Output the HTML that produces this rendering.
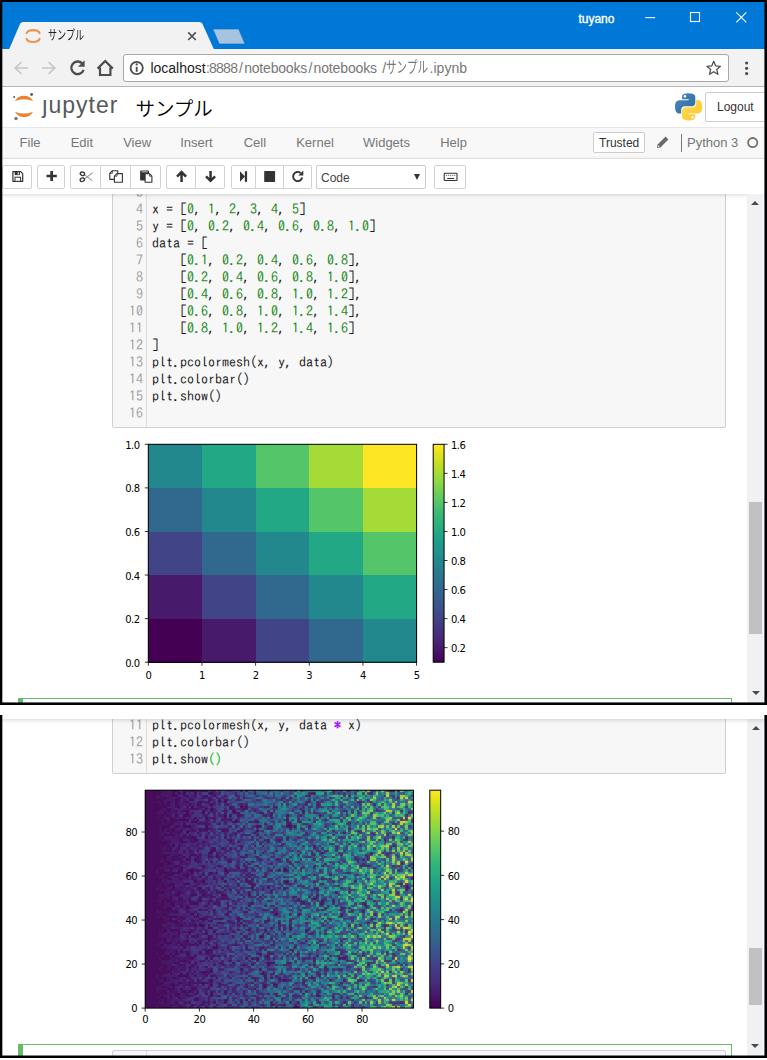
<!DOCTYPE html>
<html lang="ja">
<head>
<meta charset="utf-8">
<title>サンプル</title>
<style>
html,body{margin:0;padding:0;background:#fff;}
body{width:767px;height:1060px;position:relative;overflow:hidden;font-family:"Liberation Sans","Noto Sans CJK JP",sans-serif;color:#000;}
.abs,.plot{position:absolute;}
svg{display:block;overflow:visible;}
/* ---------- window frames ---------- */
#w1{position:absolute;left:0;top:0;width:767px;height:705px;background:#000;}
#w1 .in{position:absolute;left:2px;top:2px;width:763px;height:701px;background:#fff;overflow:hidden;}
#w2{position:absolute;left:0;top:715px;width:767px;height:343px;background:#000;}
#w2 .in{position:absolute;left:2px;top:0;width:763px;height:341px;background:#fff;overflow:hidden;}
/* coordinates inside .in are page coords shifted by (-2,-2) for w1 and (-2,-715) for w2; use wrappers */
.pg1{position:absolute;left:-2px;top:-2px;width:767px;height:705px;}
.pg2{position:absolute;left:-2px;top:-715px;width:767px;height:1060px;}
/* ---------- chrome ---------- */
#titlebar{left:0;top:0;width:767px;height:49px;background:#0078d7;}
#chtool{left:0;top:49px;width:767px;height:37px;background:#f2f2f2;border-bottom:1px solid #b6b6b6;box-sizing:content-box;}
#omni{left:123px;top:54px;width:604px;height:26px;background:#fff;border:1px solid #a9a9a9;border-radius:3px;box-sizing:content-box;}
.url{position:absolute;top:59px;font-size:14px;line-height:18px;color:#777;white-space:nowrap;}
.kx{display:inline-block;transform-origin:0 50%;}
#tabtitle{left:47.5px;top:26px;font-size:13px;line-height:18px;color:#222;white-space:nowrap;transform-origin:0 50%;transform:scaleX(.70);}
#user{left:578.4px;top:11.4px;font-size:12px;line-height:16px;color:#fff;white-space:nowrap;-webkit-text-stroke:.35px #fff;}
/* ---------- jupyter header ---------- */
#jhead{left:0;top:87px;width:767px;height:40px;background:#fff;}
#jname{left:42.3px;top:90px;font-size:23px;line-height:30px;color:#585858;letter-spacing:1px;white-space:nowrap;}
#nbname{left:135.4px;top:93.5px;font-size:19.5px;line-height:30px;color:#000;font-weight:350;white-space:nowrap;}
#logout{left:705px;top:92px;width:70px;height:28px;border:1px solid #ccc;border-radius:2px;background:#fff;box-sizing:content-box;}
#logout span{position:absolute;left:11px;top:6px;font-size:12px;line-height:16px;color:#333;}
#menubar{left:0;top:127px;width:767px;height:30px;background:#f8f8f8;border-top:1px solid #e7e7e7;border-bottom:1px solid #e7e7e7;box-sizing:content-box;}
.mi{position:absolute;top:135px;font-size:13px;line-height:16px;color:#777;white-space:nowrap;}
#trusted{left:593px;top:132px;width:50px;height:19px;border:1px solid #ccc;border-radius:2px;background:#fff;box-sizing:content-box;}
#trusted span{position:absolute;left:5px;top:3px;font-size:12px;line-height:15px;color:#333;}
#kdiv{left:681px;top:134px;width:1px;height:18px;background:#777;}
#kname{left:687px;top:135px;font-size:13px;line-height:16px;color:#777;white-space:nowrap;}
#kcirc{left:747.3px;top:137px;width:7.2px;height:7.2px;border:1.9px solid #6e6e6e;border-radius:50%;box-sizing:content-box;}
#toolbar{left:0;top:159px;width:767px;height:35px;background:#fff;box-shadow:0 1px 4px rgba(87,87,87,.25);}
.btn{position:absolute;top:165px;height:22px;border:1px solid #d2d2d2;background:#fff;box-sizing:content-box;}
.btn.l{border-radius:2px 0 0 2px;}
.btn.r{border-radius:0 2px 2px 0;border-left:none;}
.btn.m{border-left:none;}
.btn.s{border-radius:2px;}
.btn svg{position:absolute;left:50%;top:50%;}
#sel{left:316px;top:165px;width:108px;height:22px;border:1px solid #ccc;border-radius:2px;background:#fff;box-sizing:content-box;}
#sel span{position:absolute;left:4px;top:5px;font-size:12px;line-height:15px;color:#444;}
#sel i{position:absolute;right:5.5px;top:7.5px;width:0;height:0;border-left:3.5px solid transparent;border-right:3.5px solid transparent;border-top:6px solid #333;}
/* ---------- notebook ---------- */
.cell{position:absolute;left:112px;width:612px;background:#f7f7f7;border:1px solid #cfcfcf;border-radius:2px;box-sizing:content-box;overflow:hidden;}
.cell .gut{position:absolute;left:0;top:0;bottom:0;width:33px;border-right:1px solid #ddd;background:#f7f7f7;}
.code{position:absolute;left:0;font-family:"IPAGothic","Liberation Mono",monospace;font-size:14px;line-height:17px;color:#1c1c1c;white-space:pre;}
.ln{height:17px;position:relative;}
.no{position:absolute;left:0;width:30px;text-align:right;color:#a2a2a2;}
.tx{position:absolute;left:39px;}
.tx i{font-style:normal;color:#1d8a1d;}
.tx b{color:#a2f;font-weight:bold;}
.tx u{text-decoration:none;color:#0b0;}
.mpl text{font-family:"DejaVu Sans",sans-serif;font-size:10px;fill:#000;letter-spacing:-.55px;}
.sel{position:absolute;left:18px;width:713px;border:1px solid #66bb6a;border-left:none;box-sizing:content-box;background:#fff;}
.sel:before{content:"";position:absolute;left:0;top:-1px;bottom:-1px;width:5px;background:#66bb6a;}
.edge{position:absolute;background:rgba(0,8,25,.6);}
/* scrollbar */
.sb{position:absolute;left:747px;width:16px;background:#f1f1f1;border-right:1px solid #f4fbff;}
.thumb{position:absolute;left:749px;width:13px;background:#c1c1c1;}
.arr{position:absolute;width:0;height:0;border-left:4.3px solid transparent;border-right:4.3px solid transparent;}
.arr.up{border-bottom:4.6px solid #4a4a4a;}
.arr.dn{border-top:4.6px solid #4a4a4a;}
</style>
</head>
<body>
<!-- ======================= WINDOW 1 ======================= -->
<div id="w1"><div class="in"><div class="pg1">
  <div id="titlebar" class="abs"></div>
  <svg class="abs" style="left:0;top:0" width="767" height="50" viewBox="0 0 767 50">
    <path d="M9 49.5 L20.2 23.6 Q21 22 23 22 L199.5 22 Q201.5 22 202.3 23.6 L214 49.5 Z" fill="#f2f2f2"/>
    <path d="M212.8 29 L238.7 29 L245 44 L219.3 44 Z" fill="#a6c3e0" stroke="#0a6cc4" stroke-width=".6"/>
    <path d="M188.2 32.4 L195.8 40 M195.8 32.4 L188.2 40" stroke="#555" stroke-width="1.75" fill="none"/>
    <!-- tab favicon (jupyter) -->
    <g fill="none" stroke="#ea9550" stroke-width="2.1" stroke-linecap="round">
      <path d="M26.6 33.2 A6.6 3.7 0 0 1 39.6 33.2"/>
      <path d="M26.6 38.9 A6.6 3.7 0 0 0 39.6 38.9"/>
    </g>
    <!-- window controls -->
    <g stroke="#fff" stroke-width="1.1" fill="none">
      <path d="M645.3 17.6 H655.2"/>
      <rect x="690.5" y="12.5" width="9" height="9"/>
      <path d="M736.3 12.3 L746.3 22.3 M746.3 12.3 L736.3 22.3"/>
    </g>
  </svg>
  <div id="tabtitle" class="abs">サンプル</div>
  <div id="user" class="abs">tuyano</div>
  <div id="chtool" class="abs"></div>
  <div id="omni" class="abs"></div>
  <svg class="abs" style="left:0;top:49px" width="767" height="38" viewBox="0 49 767 38">
    <!-- back / forward (disabled) -->
    <g stroke="#c6c6c6" stroke-width="1.7" fill="none">
      <path d="M28 68 H15.5 M21.5 62 L15.2 68 L21.5 74"/>
      <path d="M42 68 H54.5 M48.5 62 L54.8 68 L48.5 74"/>
    </g>
    <!-- reload -->
    <path d="M82.3 63.6 A6.3 6.3 0 1 0 83.6 69.8" stroke="#4d4d4d" stroke-width="2.3" fill="none"/>
    <path d="M84.6 60.2 V66.8 H78 Z" fill="#4d4d4d"/>
    <!-- home -->
    <path d="M97.6 68.6 L105.2 61 L112.8 68.6 M100 67.4 V75 H110.4 V67.4" stroke="#4d4d4d" stroke-width="2.2" fill="none" stroke-linejoin="miter"/>
    <!-- info -->
    <circle cx="136.7" cy="68" r="6.1" stroke="#4d4d4d" stroke-width="1.8" fill="none"/>
    <path d="M136.7 66.8 V71.8" stroke="#4d4d4d" stroke-width="1.9"/>
    <circle cx="136.7" cy="64.4" r="1.15" fill="#4d4d4d"/>
    <!-- star -->
    <path transform="translate(713.7 68) scale(.9) translate(-713.5 -68)" d="M713.5 60.6 L715.6 65.6 L721 66.1 L716.9 69.7 L718.2 75 L713.5 72.1 L708.8 75 L710.1 69.7 L706 66.1 L711.4 65.6 Z" stroke="#4d4d4d" stroke-width="1.4" fill="none" stroke-linejoin="round"/>
    <!-- menu dots -->
    <g fill="#4d4d4d"><circle cx="746.6" cy="63" r="1.6"/><circle cx="746.6" cy="68.3" r="1.6"/><circle cx="746.6" cy="73.6" r="1.6"/></g>
  </svg>
  <div class="url" style="left:150.4px;color:#222">localhost</div>
  <div class="url" style="left:205.9px;letter-spacing:-.75px">:8888</div>
  <div class="url" style="left:238.9px">/</div>
  <div class="url" style="left:244.2px;letter-spacing:-.2px">notebooks</div>
  <div class="url" style="left:308.6px">/</div>
  <div class="url" style="left:313.6px;letter-spacing:-.15px">notebooks</div>
  <div class="url" style="left:382.2px">/</div>
  <div class="url kx" style="left:386.2px;font-size:15.5px;transform:scaleX(.685)">サンプル</div>
  <div class="url" style="left:429.6px">.ipynb</div>

  <!-- jupyter header -->
  <div id="jhead" class="abs"></div>
  <svg class="abs" style="left:10px;top:90px" width="30" height="34" viewBox="10 90 30 34">
    <g fill="#e8832f">
      <path d="M14.9 101 A10.5 10.5 0 0 1 33.1 101 A23.9 23.9 0 0 0 14.9 101 Z"/>
      <path d="M14.9 111.7 A10.5 10.5 0 0 0 33.1 111.7 A23.9 23.9 0 0 1 14.9 111.7 Z"/>
    </g>
    <circle cx="31.6" cy="94.5" r="1.45" fill="#5c5c5c"/>
    <circle cx="14.2" cy="96.9" r="1" fill="#5c5c5c"/>
    <circle cx="16" cy="118.5" r="1.75" fill="#7c7c7c"/>
  </svg>
  <div id="jname" class="abs">jupyter</div>
  <div class="abs" style="left:41px;top:92px;width:8px;height:6.4px;background:#fff"></div>
  <div id="nbname" class="abs">サンプル</div>
    <svg class="abs" style="left:675px;top:93px" width="27.3" height="27.6" viewBox="0 0 100 100">
    <defs>
      <linearGradient id="pyb" x1="0" y1="0" x2="1" y2="1"><stop offset="0" stop-color="#4a8cc4"/><stop offset="1" stop-color="#2f6796"/></linearGradient>
      <linearGradient id="pyy" x1="0" y1="0" x2="1" y2="1"><stop offset="0" stop-color="#ffe052"/><stop offset="1" stop-color="#ffc331"/></linearGradient>
    </defs>
    <path fill="url(#pyb)" d="M49.6 0C24.3 0 25.9 11 25.9 11L25.9 22.4H50V25.8H16.3C16.3 25.8 0 24 0 49.7C0 75.4 14.2 74.5 14.2 74.5H22.7V62.6C22.7 62.6 22.2 48.4 36.7 48.4H60.7C60.7 48.4 74.3 48.6 74.3 35.3V13.3C74.3 13.3 76.4 0 49.6 0Z"/>
    <circle cx="36.3" cy="11.8" r="4.6" fill="#fff"/>
    <path fill="url(#pyy)" d="M50.4 100C75.7 100 74.1 89 74.1 89L74.1 77.6H50V74.2H83.7C83.7 74.2 100 76 100 50.3C100 24.6 85.8 25.5 85.8 25.5H77.3V37.4C77.3 37.4 77.8 51.6 63.3 51.6H39.3C39.3 51.6 25.7 51.4 25.7 64.7V86.7C25.7 86.7 23.6 100 50.4 100Z"/>
    <circle cx="63.7" cy="88.2" r="4.6" fill="#fff"/>
  </svg>

  <div id="logout" class="abs"><span>Logout</span></div>

  <div id="menubar" class="abs"></div>
  <div class="mi" style="left:19.6px">File</div>
  <div class="mi" style="left:70.7px">Edit</div>
  <div class="mi" style="left:123.2px">View</div>
  <div class="mi" style="left:180.2px">Insert</div>
  <div class="mi" style="left:243.7px">Cell</div>
  <div class="mi" style="left:296.2px">Kernel</div>
  <div class="mi" style="left:363px">Widgets</div>
  <div class="mi" style="left:440.2px">Help</div>
  <div id="trusted" class="abs"><span>Trusted</span></div>
    <svg class="abs" style="left:655px;top:135px" width="16" height="16" viewBox="655 135 16 16">
    <path d="M657 147.9 L657.6 144.6 L665.6 136.6 L668.4 139.4 L660.4 147.4 Z" fill="#6a6a6a"/>
    <path d="M657.9 146.9 L658.3 145.3 L659.6 146.6 Z" fill="#fff"/>
  </svg>

  <div id="kdiv" class="abs"></div>
  <div id="kname" class="abs">Python 3</div>
  <svg class="abs" style="left:745px;top:135px" width="16" height="16" viewBox="745 135 16 16"><circle cx="752.7" cy="142.6" r="4.6" fill="none" stroke="#707070" stroke-width="1.8"/></svg>

  <!-- notebook area (drawn before toolbar so toolbar shadow overlays) -->
  <div class="cell" style="top:180px;height:246px"><div class="gut"></div>
    <div class="code" style="top:3px;width:612px"><div class="ln"><span class="no">3</span><span class="tx">&nbsp;</span></div><div class="ln"><span class="no">4</span><span class="tx">x = [<i>0</i>, <i>1</i>, <i>2</i>, <i>3</i>, <i>4</i>, <i>5</i>]</span></div><div class="ln"><span class="no">5</span><span class="tx">y = [<i>0</i>, <i>0.2</i>, <i>0.4</i>, <i>0.6</i>, <i>0.8</i>, <i>1.0</i>]</span></div><div class="ln"><span class="no">6</span><span class="tx">data = [</span></div><div class="ln"><span class="no">7</span><span class="tx">    [<i>0.1</i>, <i>0.2</i>, <i>0.4</i>, <i>0.6</i>, <i>0.8</i>],</span></div><div class="ln"><span class="no">8</span><span class="tx">    [<i>0.2</i>, <i>0.4</i>, <i>0.6</i>, <i>0.8</i>, <i>1.0</i>],</span></div><div class="ln"><span class="no">9</span><span class="tx">    [<i>0.4</i>, <i>0.6</i>, <i>0.8</i>, <i>1.0</i>, <i>1.2</i>],</span></div><div class="ln"><span class="no">10</span><span class="tx">    [<i>0.6</i>, <i>0.8</i>, <i>1.0</i>, <i>1.2</i>, <i>1.4</i>],</span></div><div class="ln"><span class="no">11</span><span class="tx">    [<i>0.8</i>, <i>1.0</i>, <i>1.2</i>, <i>1.4</i>, <i>1.6</i>]</span></div><div class="ln"><span class="no">12</span><span class="tx">]</span></div><div class="ln"><span class="no">13</span><span class="tx">plt.pcolormesh(x, y, data)</span></div><div class="ln"><span class="no">14</span><span class="tx">plt.colorbar()</span></div><div class="ln"><span class="no">15</span><span class="tx">plt.show()</span></div><div class="ln"><span class="no">16</span><span class="tx">&nbsp;</span></div></div>
  </div>
  <svg class="plot" style="left:110px;top:434px" width="380" height="256" viewBox="0 0 380 256"><defs><linearGradient id="vg1" x1="0" y1="1" x2="0" y2="0"><stop offset="0" stop-color="#440154"/><stop offset="0.04" stop-color="#471063"/><stop offset="0.08" stop-color="#481f70"/><stop offset="0.12" stop-color="#472d7b"/><stop offset="0.17" stop-color="#443983"/><stop offset="0.21" stop-color="#404688"/><stop offset="0.25" stop-color="#3b528b"/><stop offset="0.29" stop-color="#365d8d"/><stop offset="0.33" stop-color="#31688e"/><stop offset="0.38" stop-color="#2c728e"/><stop offset="0.42" stop-color="#287c8e"/><stop offset="0.46" stop-color="#24868e"/><stop offset="0.5" stop-color="#21918c"/><stop offset="0.54" stop-color="#1f9a8a"/><stop offset="0.58" stop-color="#20a486"/><stop offset="0.62" stop-color="#28ae80"/><stop offset="0.67" stop-color="#35b779"/><stop offset="0.71" stop-color="#48c16e"/><stop offset="0.75" stop-color="#5ec962"/><stop offset="0.79" stop-color="#75d054"/><stop offset="0.83" stop-color="#90d743"/><stop offset="0.88" stop-color="#addc30"/><stop offset="0.92" stop-color="#c8e020"/><stop offset="0.96" stop-color="#e5e419"/><stop offset="1" stop-color="#fde725"/></linearGradient></defs><g shape-rendering="crispEdges"><rect x="38.3" y="184.62" width="53.96" height="43.88" fill="#440154"/><rect x="91.96" y="184.62" width="53.96" height="43.88" fill="#481a6c"/><rect x="145.62" y="184.62" width="53.96" height="43.88" fill="#414487"/><rect x="199.28" y="184.62" width="53.96" height="43.88" fill="#31688e"/><rect x="252.94" y="184.62" width="53.96" height="43.88" fill="#23888e"/><rect x="38.3" y="141.04" width="53.96" height="43.88" fill="#481a6c"/><rect x="91.96" y="141.04" width="53.96" height="43.88" fill="#414487"/><rect x="145.62" y="141.04" width="53.96" height="43.88" fill="#31688e"/><rect x="199.28" y="141.04" width="53.96" height="43.88" fill="#23888e"/><rect x="252.94" y="141.04" width="53.96" height="43.88" fill="#22a884"/><rect x="38.3" y="97.46" width="53.96" height="43.88" fill="#414487"/><rect x="91.96" y="97.46" width="53.96" height="43.88" fill="#31688e"/><rect x="145.62" y="97.46" width="53.96" height="43.88" fill="#23888e"/><rect x="199.28" y="97.46" width="53.96" height="43.88" fill="#22a884"/><rect x="252.94" y="97.46" width="53.96" height="43.88" fill="#54c568"/><rect x="38.3" y="53.88" width="53.96" height="43.88" fill="#31688e"/><rect x="91.96" y="53.88" width="53.96" height="43.88" fill="#23888e"/><rect x="145.62" y="53.88" width="53.96" height="43.88" fill="#22a884"/><rect x="199.28" y="53.88" width="53.96" height="43.88" fill="#54c568"/><rect x="252.94" y="53.88" width="53.96" height="43.88" fill="#a5db36"/><rect x="38.3" y="10.3" width="53.96" height="43.88" fill="#23888e"/><rect x="91.96" y="10.3" width="53.96" height="43.88" fill="#22a884"/><rect x="145.62" y="10.3" width="53.96" height="43.88" fill="#54c568"/><rect x="199.28" y="10.3" width="53.96" height="43.88" fill="#a5db36"/><rect x="252.94" y="10.3" width="53.96" height="43.88" fill="#fde725"/></g><rect x="38.3" y="10.3" width="268.3" height="217.9" fill="none" stroke="#000" stroke-width="1"/><rect x="323.2" y="10.3" width="10.87" height="217.9" fill="url(#vg1)" stroke="#000" stroke-width="1"/><path d="M38.3 228.2h-3.5M38.3 228.2v3.5M38.3 184.62h-3.5M91.96 228.2v3.5M38.3 141.04h-3.5M145.62 228.2v3.5M38.3 97.46h-3.5M199.28 228.2v3.5M38.3 53.88h-3.5M252.94 228.2v3.5M38.3 10.3h-3.5M306.6 228.2v3.5M334.07 213.67h3.5M334.07 184.62h3.5M334.07 155.57h3.5M334.07 126.51h3.5M334.07 97.46h3.5M334.07 68.41h3.5M334.07 39.35h3.5M334.07 10.3h3.5" stroke="#000" stroke-width=".8" fill="none"/><g class="mpl"><text x="29.5" y="232.7" text-anchor="end">0.0</text><text x="38.3" y="244.5" text-anchor="middle">0</text><text x="29.5" y="189.12" text-anchor="end">0.2</text><text x="91.96" y="244.5" text-anchor="middle">1</text><text x="29.5" y="145.54" text-anchor="end">0.4</text><text x="145.62" y="244.5" text-anchor="middle">2</text><text x="29.5" y="101.96" text-anchor="end">0.6</text><text x="199.28" y="244.5" text-anchor="middle">3</text><text x="29.5" y="58.38" text-anchor="end">0.8</text><text x="252.94" y="244.5" text-anchor="middle">4</text><text x="29.5" y="14.8" text-anchor="end">1.0</text><text x="306.6" y="244.5" text-anchor="middle">5</text><text x="341.07" y="218.17">0.2</text><text x="341.07" y="189.12">0.4</text><text x="341.07" y="160.07">0.6</text><text x="341.07" y="131.01">0.8</text><text x="341.07" y="101.96">1.0</text><text x="341.07" y="72.91">1.2</text><text x="341.07" y="43.85">1.4</text><text x="341.07" y="14.8">1.6</text></g></svg>
  <div class="sel" style="top:698px;height:20px"></div>

  <div id="toolbar" class="abs"></div>
    <div class="btn s" style="left:2px;width:28px"></div>
  <div class="btn s" style="left:37px;width:26px"></div>
  <div class="btn l" style="left:70px;width:29px"></div>
  <div class="btn m" style="left:101px;width:29px"></div>
  <div class="btn r" style="left:131px;width:29px"></div>
  <div class="btn l" style="left:166px;width:28px"></div>
  <div class="btn r" style="left:196px;width:28px"></div>
  <div class="btn l" style="left:231px;width:23px"></div>
  <div class="btn m" style="left:256px;width:27px"></div>
  <div class="btn r" style="left:284px;width:27px"></div>
  <div class="btn s" style="left:434px;width:30px"></div>
  <svg class="abs" style="left:0;top:160px" width="480" height="35" viewBox="0 160 480 35">
    <!-- save -->
    <path d="M12.9 171.6 H20.7 L22.7 173.6 V181.3 H12.9 Z" fill="#fff" stroke="#333" stroke-width="1.2" stroke-linejoin="round"/>
    <rect x="14.7" y="171.6" width="5.2" height="3.5" fill="#333"/>
    <rect x="17.6" y="172.3" width="1.4" height="2.1" fill="#ddd"/>
    <rect x="15" y="177.2" width="5.6" height="4.1" fill="#fff" stroke="#333" stroke-width="1"/>
    <!-- plus -->
    <path d="M46.5 176 H56.8 M51.65 170.9 V181.1" stroke="#333" stroke-width="2.7" fill="none"/>
    <!-- scissors -->
    <g fill="none">
      <path d="M84.4 174.6 L92.2 180.6 M84.4 179 L92.6 172.6" stroke="#9a9a9a" stroke-width="1.1"/>
      <ellipse cx="82.4" cy="173.8" rx="2.2" ry="1.7" transform="rotate(20 82.4 173.8)" stroke="#333" stroke-width="1.3"/>
      <ellipse cx="82.3" cy="179.7" rx="2.2" ry="1.7" transform="rotate(-25 82.3 179.7)" stroke="#333" stroke-width="1.3"/>
    </g>
    <!-- copy -->
    <g fill="#fff" stroke="#333" stroke-width="1.1" stroke-linejoin="round">
      <path d="M112.4 170.7 H117.8 V179.4 H109.8 V173.3 Z"/>
      <path d="M112.4 170.7 V173.3 H109.8" fill="none" stroke-width=".8"/>
      <path d="M117 173.6 H122.4 V182.2 H114.4 V176.2 Z"/>
      <path d="M117 173.6 V176.2 H114.4" fill="none" stroke-width=".8"/>
    </g>
    <!-- paste -->
    <rect x="140.1" y="170.4" width="8.9" height="10.2" rx=".8" fill="#333"/>
    <rect x="141.6" y="171.3" width="6" height="1" fill="#c8c8c8"/>
    <path d="M145.1 173.7 H149.4 L151.9 176.2 V182.2 H145.1 Z" fill="#fff" stroke="#333" stroke-width="1.1" stroke-linejoin="round"/>
    <path d="M149.4 173.7 V176.2 H151.9" fill="none" stroke="#333" stroke-width=".8"/>
    <!-- arrow up -->
    <path d="M181.55 181.9 V173 M177 176.6 L181.55 172.1 L186.1 176.6" stroke="#333" stroke-width="2.5" fill="none" stroke-linejoin="miter" stroke-linecap="butt"/>
    <!-- arrow down -->
    <path d="M210.55 171 V180 M206 176.3 L210.55 180.8 L215.1 176.3" stroke="#333" stroke-width="2.5" fill="none"/>
    <!-- step forward -->
    <path d="M240 171.2 L245 176.5 L240 181.8 Z" fill="#333"/>
    <rect x="244.8" y="171.2" width="2.3" height="10.6" fill="#333"/>
    <!-- stop -->
    <rect x="264.2" y="171.1" width="10.9" height="10.8" rx=".6" fill="#333"/>
    <!-- repeat -->
    <path d="M300.6 172.9 A4.6 4.6 0 1 0 302.2 177.6" stroke="#333" stroke-width="1.9" fill="none"/>
    <path d="M303.3 170.6 V175.6 H298.3 Z" fill="#333"/>
    <!-- keyboard -->
    <rect x="444.2" y="173.3" width="12.8" height="7.2" rx=".8" fill="#fff" stroke="#333" stroke-width="1.1"/>
    <path d="M445.8 175.4 H455.4" stroke="#888" stroke-width="1.2" stroke-dasharray="1.3 .8"/>
    <path d="M447.2 178.5 H454" stroke="#333" stroke-width="1.1"/>
  </svg>

  <div id="sel" class="abs"><span>Code</span><i></i></div>

  <!-- scrollbar -->
  <div class="sb" style="top:194px;height:509px"></div>
  <div class="thumb" style="top:502px;height:132px"></div>
  <div class="arr up" style="left:751.3px;top:200.5px"></div>
  <div class="arr dn" style="left:751.5px;top:690.5px"></div>
  <div class="edge" style="left:764px;top:0;width:1px;height:705px"></div>
  <div class="edge" style="left:0;top:702px;width:767px;height:1px"></div>
  <div class="edge" style="left:2px;top:0;width:1px;height:705px;background:rgba(0,8,25,.33)"></div>
</div></div></div>

<!-- ======================= WINDOW 2 ======================= -->
<div id="w2"><div class="in"><div class="pg2">
  <div class="cell" style="top:700px;height:72px"><div class="gut"></div>
    <div class="code" style="top:-1px;width:612px"><div class="ln"><span class="no">10</span><span class="tx">&nbsp;</span></div><div class="ln"><span class="no">11</span><span class="tx">plt.pcolormesh(x, y, data <b>*</b> x)</span></div><div class="ln"><span class="no">12</span><span class="tx">plt.colorbar()</span></div><div class="ln"><span class="no">13</span><span class="tx">plt.show<u>()</u></span></div></div>
  </div>
  <svg class="plot" style="left:110px;top:780px" width="380" height="256" viewBox="0 0 380 256"><defs><linearGradient id="vg2" x1="0" y1="1" x2="0" y2="0"><stop offset="0" stop-color="#440154"/><stop offset="0.04" stop-color="#471063"/><stop offset="0.08" stop-color="#481f70"/><stop offset="0.12" stop-color="#472d7b"/><stop offset="0.17" stop-color="#443983"/><stop offset="0.21" stop-color="#404688"/><stop offset="0.25" stop-color="#3b528b"/><stop offset="0.29" stop-color="#365d8d"/><stop offset="0.33" stop-color="#31688e"/><stop offset="0.38" stop-color="#2c728e"/><stop offset="0.42" stop-color="#287c8e"/><stop offset="0.46" stop-color="#24868e"/><stop offset="0.5" stop-color="#21918c"/><stop offset="0.54" stop-color="#1f9a8a"/><stop offset="0.58" stop-color="#20a486"/><stop offset="0.62" stop-color="#28ae80"/><stop offset="0.67" stop-color="#35b779"/><stop offset="0.71" stop-color="#48c16e"/><stop offset="0.75" stop-color="#5ec962"/><stop offset="0.79" stop-color="#75d054"/><stop offset="0.83" stop-color="#90d743"/><stop offset="0.88" stop-color="#addc30"/><stop offset="0.92" stop-color="#c8e020"/><stop offset="0.96" stop-color="#e5e419"/><stop offset="1" stop-color="#fde725"/></linearGradient></defs><rect x="35.2" y="10.2" width="268.3" height="217.9" fill="#46075a"/><defs><clipPath id="cp2"><rect x="35.2" y="10.2" width="268.3" height="217.9"/></clipPath><filter id="bl2" x="-2%" y="-2%" width="104%" height="104%"><feGaussianBlur stdDeviation="0.8" result="b"/><feComposite operator="arithmetic" k1="0" k2="0.68" k3="0.32" k4="0" in="SourceGraphic" in2="b"/></filter></defs><g clip-path="url(#cp2)"><g filter="url(#bl2)"><rect x="32.2" y="7.2" width="274.3" height="223.9" fill="#46075a"/><g transform="translate(35.2 10.2) scale(2.71010 2.20101)" shape-rendering="crispEdges"><path fill="#471365" d="M4 98h1v1h-1zM9 98h1v1h-1zM12 98h1v1h-1zM14 98h1v1h-1zM16 98h1v1h-1zM22 98h1v1h-1zM25 98h1v1h-1zM56 98h1v1h-1zM62 98h1v1h-1zM92 98h1v1h-1zM6 97h3v1h-3zM10 97h2v1h-2zM18 97h1v1h-1zM21 97h1v1h-1zM23 97h1v1h-1zM31 97h1v1h-1zM49 97h1v1h-1zM76 97h1v1h-1zM5 96h2v1h-2zM8 96h1v1h-1zM14 96h1v1h-1zM21 96h1v1h-1zM23 96h1v1h-1zM35 96h1v1h-1zM46 96h1v1h-1zM64 96h1v1h-1zM73 96h1v1h-1zM85 96h1v1h-1zM94 96h2v1h-2zM6 95h1v1h-1zM8 95h2v1h-2zM13 95h1v1h-1zM19 95h1v1h-1zM23 95h1v1h-1zM27 95h1v1h-1zM47 95h1v1h-1zM4 94h1v1h-1zM13 94h1v1h-1zM18 94h2v1h-2zM41 94h1v1h-1zM50 94h1v1h-1zM74 94h1v1h-1zM5 93h1v1h-1zM7 93h1v1h-1zM12 93h1v1h-1zM16 93h2v1h-2zM48 93h1v1h-1zM52 93h1v1h-1zM6 92h1v1h-1zM8 92h2v1h-2zM14 92h2v1h-2zM36 92h1v1h-1zM42 92h1v1h-1zM63 92h1v1h-1zM71 92h1v1h-1zM4 91h1v1h-1zM10 91h2v1h-2zM13 91h1v1h-1zM15 91h1v1h-1zM17 91h1v1h-1zM24 91h1v1h-1zM36 91h1v1h-1zM57 91h1v1h-1zM4 90h4v1h-4zM30 90h1v1h-1zM51 90h1v1h-1zM4 89h2v1h-2zM8 89h1v1h-1zM17 89h2v1h-2zM23 89h1v1h-1zM27 89h1v1h-1zM37 89h1v1h-1zM84 89h2v1h-2zM6 88h3v1h-3zM11 88h2v1h-2zM14 88h2v1h-2zM19 88h1v1h-1zM21 88h1v1h-1zM27 88h2v1h-2zM40 88h1v1h-1zM44 88h1v1h-1zM47 88h2v1h-2zM67 88h1v1h-1zM71 88h1v1h-1zM9 87h2v1h-2zM17 87h1v1h-1zM19 87h2v1h-2zM24 87h1v1h-1zM27 87h1v1h-1zM43 87h1v1h-1zM58 87h1v1h-1zM5 86h2v1h-2zM8 86h1v1h-1zM14 86h1v1h-1zM17 86h1v1h-1zM19 86h1v1h-1zM40 86h1v1h-1zM49 86h1v1h-1zM53 86h1v1h-1zM68 86h1v1h-1zM73 86h1v1h-1zM78 86h2v1h-2zM89 86h1v1h-1zM4 85h1v1h-1zM8 85h1v1h-1zM11 85h1v1h-1zM15 85h2v1h-2zM21 85h1v1h-1zM31 85h1v1h-1zM35 85h1v1h-1zM40 85h1v1h-1zM60 85h1v1h-1zM62 85h1v1h-1zM4 84h1v1h-1zM6 84h1v1h-1zM25 84h1v1h-1zM38 84h1v1h-1zM61 84h1v1h-1zM7 83h1v1h-1zM10 83h1v1h-1zM17 83h1v1h-1zM21 83h1v1h-1zM46 83h2v1h-2zM50 83h1v1h-1zM56 83h1v1h-1zM64 83h1v1h-1zM66 83h1v1h-1zM11 82h2v1h-2zM16 82h1v1h-1zM20 82h1v1h-1zM23 82h1v1h-1zM31 82h1v1h-1zM50 82h1v1h-1zM97 82h1v1h-1zM5 81h1v1h-1zM8 81h1v1h-1zM10 81h2v1h-2zM13 81h2v1h-2zM67 81h1v1h-1zM71 81h1v1h-1zM6 80h1v1h-1zM8 80h2v1h-2zM12 80h1v1h-1zM14 80h1v1h-1zM8 79h2v1h-2zM12 79h1v1h-1zM14 79h1v1h-1zM28 79h1v1h-1zM51 79h1v1h-1zM60 79h1v1h-1zM82 79h1v1h-1zM92 79h1v1h-1zM94 79h1v1h-1zM6 78h2v1h-2zM9 78h2v1h-2zM27 78h1v1h-1zM40 78h1v1h-1zM82 78h1v1h-1zM6 77h3v1h-3zM10 77h1v1h-1zM12 77h1v1h-1zM15 77h2v1h-2zM20 77h2v1h-2zM28 77h1v1h-1zM34 77h1v1h-1zM68 77h1v1h-1zM74 77h1v1h-1zM76 77h1v1h-1zM5 76h1v1h-1zM9 76h4v1h-4zM14 76h3v1h-3zM45 76h1v1h-1zM50 76h1v1h-1zM54 76h1v1h-1zM58 76h1v1h-1zM62 76h1v1h-1zM67 76h1v1h-1zM72 76h2v1h-2zM6 75h1v1h-1zM15 75h2v1h-2zM24 75h1v1h-1zM29 75h1v1h-1zM31 75h1v1h-1zM38 75h1v1h-1zM44 75h1v1h-1zM52 75h1v1h-1zM68 75h1v1h-1zM70 75h2v1h-2zM74 75h1v1h-1zM78 75h1v1h-1zM4 74h1v1h-1zM7 74h1v1h-1zM12 74h1v1h-1zM16 74h1v1h-1zM20 74h1v1h-1zM22 74h2v1h-2zM41 74h1v1h-1zM53 74h1v1h-1zM72 74h1v1h-1zM76 74h1v1h-1zM7 73h2v1h-2zM10 73h1v1h-1zM14 73h1v1h-1zM23 73h2v1h-2zM8 72h4v1h-4zM13 72h1v1h-1zM21 72h2v1h-2zM24 72h1v1h-1zM42 72h1v1h-1zM70 72h2v1h-2zM6 71h2v1h-2zM37 71h1v1h-1zM55 71h1v1h-1zM4 70h1v1h-1zM8 70h1v1h-1zM10 70h2v1h-2zM14 70h3v1h-3zM18 70h2v1h-2zM26 70h1v1h-1zM32 70h1v1h-1zM46 70h2v1h-2zM60 70h1v1h-1zM70 70h1v1h-1zM72 70h1v1h-1zM5 69h2v1h-2zM11 69h1v1h-1zM13 69h3v1h-3zM18 69h1v1h-1zM40 69h1v1h-1zM58 69h1v1h-1zM97 69h1v1h-1zM6 68h1v1h-1zM9 68h2v1h-2zM12 68h1v1h-1zM14 68h1v1h-1zM20 68h1v1h-1zM59 68h1v1h-1zM98 68h1v1h-1zM9 67h2v1h-2zM22 67h1v1h-1zM79 67h1v1h-1zM5 66h4v1h-4zM11 66h2v1h-2zM15 66h1v1h-1zM18 66h2v1h-2zM24 66h1v1h-1zM32 66h1v1h-1zM5 65h2v1h-2zM8 65h1v1h-1zM19 65h1v1h-1zM21 65h1v1h-1zM26 65h1v1h-1zM35 65h1v1h-1zM38 65h1v1h-1zM43 65h1v1h-1zM51 65h1v1h-1zM5 64h1v1h-1zM10 64h1v1h-1zM14 64h2v1h-2zM17 64h1v1h-1zM22 64h1v1h-1zM6 63h1v1h-1zM12 63h1v1h-1zM16 63h2v1h-2zM20 63h1v1h-1zM25 63h1v1h-1zM44 63h1v1h-1zM49 63h1v1h-1zM53 63h1v1h-1zM66 63h1v1h-1zM87 63h1v1h-1zM7 62h2v1h-2zM12 62h1v1h-1zM64 62h1v1h-1zM84 62h1v1h-1zM6 61h1v1h-1zM8 61h2v1h-2zM11 61h2v1h-2zM16 61h2v1h-2zM34 61h1v1h-1zM36 61h1v1h-1zM47 61h1v1h-1zM89 61h1v1h-1zM9 60h2v1h-2zM14 60h1v1h-1zM16 60h1v1h-1zM32 60h1v1h-1zM41 60h1v1h-1zM82 60h1v1h-1zM7 59h1v1h-1zM13 59h1v1h-1zM19 59h1v1h-1zM21 59h1v1h-1zM23 59h1v1h-1zM7 58h2v1h-2zM13 58h1v1h-1zM22 58h1v1h-1zM54 58h1v1h-1zM68 58h1v1h-1zM83 58h1v1h-1zM4 57h1v1h-1zM6 57h2v1h-2zM19 57h1v1h-1zM22 57h3v1h-3zM34 57h1v1h-1zM72 57h1v1h-1zM5 56h1v1h-1zM8 56h1v1h-1zM53 56h1v1h-1zM72 56h1v1h-1zM84 56h1v1h-1zM4 55h4v1h-4zM9 55h1v1h-1zM15 55h2v1h-2zM23 55h1v1h-1zM4 54h1v1h-1zM10 54h2v1h-2zM15 54h1v1h-1zM22 54h1v1h-1zM43 54h1v1h-1zM47 54h1v1h-1zM76 54h1v1h-1zM90 54h1v1h-1zM94 54h1v1h-1zM6 53h2v1h-2zM32 53h1v1h-1zM75 53h1v1h-1zM7 52h3v1h-3zM27 52h1v1h-1zM30 52h1v1h-1zM53 52h1v1h-1zM70 52h1v1h-1zM81 52h1v1h-1zM5 51h1v1h-1zM7 51h2v1h-2zM12 51h2v1h-2zM16 51h1v1h-1zM19 51h1v1h-1zM23 51h1v1h-1zM26 51h2v1h-2zM33 51h1v1h-1zM57 51h2v1h-2zM65 51h1v1h-1zM81 51h1v1h-1zM4 50h2v1h-2zM7 50h1v1h-1zM10 50h5v1h-5zM19 50h1v1h-1zM23 50h1v1h-1zM32 50h1v1h-1zM56 50h1v1h-1zM5 49h2v1h-2zM8 49h1v1h-1zM16 49h1v1h-1zM19 49h2v1h-2zM26 49h1v1h-1zM29 49h2v1h-2zM43 49h1v1h-1zM56 49h1v1h-1zM61 49h1v1h-1zM5 48h4v1h-4zM12 48h1v1h-1zM16 48h1v1h-1zM22 48h1v1h-1zM24 48h2v1h-2zM29 48h1v1h-1zM40 48h1v1h-1zM47 48h1v1h-1zM63 48h1v1h-1zM88 48h1v1h-1zM5 47h3v1h-3zM9 47h2v1h-2zM23 47h1v1h-1zM41 47h1v1h-1zM71 47h1v1h-1zM7 46h3v1h-3zM11 46h1v1h-1zM13 46h1v1h-1zM17 46h1v1h-1zM20 46h2v1h-2zM26 46h2v1h-2zM34 46h1v1h-1zM38 46h1v1h-1zM46 46h1v1h-1zM4 45h5v1h-5zM10 45h3v1h-3zM17 45h1v1h-1zM19 45h3v1h-3zM29 45h1v1h-1zM40 45h1v1h-1zM61 45h1v1h-1zM63 45h1v1h-1zM76 45h1v1h-1zM4 44h1v1h-1zM13 44h1v1h-1zM15 44h2v1h-2zM19 44h1v1h-1zM23 44h1v1h-1zM28 44h1v1h-1zM35 44h1v1h-1zM38 44h1v1h-1zM49 44h1v1h-1zM63 44h1v1h-1zM96 44h1v1h-1zM5 43h1v1h-1zM7 43h1v1h-1zM9 43h1v1h-1zM18 43h1v1h-1zM29 43h2v1h-2zM34 43h1v1h-1zM39 43h1v1h-1zM45 43h1v1h-1zM50 43h1v1h-1zM58 43h1v1h-1zM70 43h2v1h-2zM5 42h1v1h-1zM7 42h2v1h-2zM19 42h1v1h-1zM22 42h1v1h-1zM38 42h2v1h-2zM49 42h1v1h-1zM64 42h1v1h-1zM93 42h1v1h-1zM6 41h2v1h-2zM9 41h1v1h-1zM37 41h2v1h-2zM69 41h1v1h-1zM6 40h2v1h-2zM12 40h1v1h-1zM17 40h1v1h-1zM21 40h1v1h-1zM25 40h1v1h-1zM34 40h1v1h-1zM46 40h1v1h-1zM72 40h1v1h-1zM82 40h1v1h-1zM87 40h1v1h-1zM90 40h1v1h-1zM5 39h2v1h-2zM8 39h1v1h-1zM11 39h2v1h-2zM14 39h1v1h-1zM17 39h1v1h-1zM22 39h1v1h-1zM25 39h1v1h-1zM38 39h1v1h-1zM40 39h1v1h-1zM43 39h1v1h-1zM51 39h1v1h-1zM58 39h1v1h-1zM73 39h1v1h-1zM6 38h2v1h-2zM10 38h1v1h-1zM12 38h1v1h-1zM23 38h1v1h-1zM37 38h1v1h-1zM39 38h1v1h-1zM55 38h1v1h-1zM60 38h1v1h-1zM62 38h1v1h-1zM78 38h1v1h-1zM4 37h1v1h-1zM13 37h1v1h-1zM15 37h1v1h-1zM19 37h1v1h-1zM23 37h1v1h-1zM74 37h2v1h-2zM4 36h1v1h-1zM7 36h1v1h-1zM15 36h1v1h-1zM18 36h1v1h-1zM30 36h1v1h-1zM40 36h1v1h-1zM46 36h1v1h-1zM52 36h1v1h-1zM57 36h1v1h-1zM64 36h1v1h-1zM5 35h4v1h-4zM10 35h2v1h-2zM21 35h1v1h-1zM29 35h1v1h-1zM37 35h1v1h-1zM51 35h1v1h-1zM55 35h1v1h-1zM7 34h2v1h-2zM10 34h1v1h-1zM62 34h1v1h-1zM79 34h1v1h-1zM91 34h1v1h-1zM7 33h1v1h-1zM10 33h1v1h-1zM13 33h1v1h-1zM15 33h1v1h-1zM36 33h1v1h-1zM98 33h1v1h-1zM5 32h2v1h-2zM14 32h1v1h-1zM16 32h1v1h-1zM19 32h2v1h-2zM22 32h1v1h-1zM37 32h1v1h-1zM56 32h1v1h-1zM73 32h1v1h-1zM78 32h1v1h-1zM95 32h1v1h-1zM6 31h1v1h-1zM8 31h2v1h-2zM11 31h1v1h-1zM13 31h1v1h-1zM16 31h1v1h-1zM19 31h1v1h-1zM30 31h1v1h-1zM42 31h1v1h-1zM52 31h1v1h-1zM57 31h1v1h-1zM82 31h1v1h-1zM9 30h1v1h-1zM13 30h1v1h-1zM24 30h1v1h-1zM47 30h1v1h-1zM53 30h1v1h-1zM5 29h1v1h-1zM10 29h2v1h-2zM13 29h1v1h-1zM16 29h1v1h-1zM20 29h1v1h-1zM23 29h1v1h-1zM56 29h1v1h-1zM62 29h1v1h-1zM83 29h1v1h-1zM6 28h1v1h-1zM9 28h1v1h-1zM11 28h1v1h-1zM14 28h1v1h-1zM17 28h1v1h-1zM26 28h1v1h-1zM65 28h1v1h-1zM71 28h1v1h-1zM87 28h1v1h-1zM9 27h1v1h-1zM14 27h1v1h-1zM17 27h1v1h-1zM34 27h1v1h-1zM48 27h1v1h-1zM56 27h1v1h-1zM63 27h1v1h-1zM6 26h3v1h-3zM20 26h1v1h-1zM33 26h1v1h-1zM35 26h1v1h-1zM62 26h1v1h-1zM84 26h1v1h-1zM5 25h1v1h-1zM7 25h1v1h-1zM19 25h1v1h-1zM23 25h1v1h-1zM35 25h1v1h-1zM58 25h1v1h-1zM64 25h1v1h-1zM91 25h1v1h-1zM8 24h1v1h-1zM10 24h1v1h-1zM12 24h2v1h-2zM19 24h1v1h-1zM32 24h1v1h-1zM68 24h2v1h-2zM9 23h1v1h-1zM15 23h1v1h-1zM18 23h1v1h-1zM21 23h1v1h-1zM31 23h1v1h-1zM49 23h1v1h-1zM76 23h1v1h-1zM6 22h4v1h-4zM12 22h1v1h-1zM16 22h1v1h-1zM31 22h1v1h-1zM41 22h1v1h-1zM44 22h2v1h-2zM52 22h1v1h-1zM59 22h1v1h-1zM95 22h2v1h-2zM5 21h1v1h-1zM10 21h1v1h-1zM12 21h5v1h-5zM18 21h1v1h-1zM52 21h1v1h-1zM67 21h1v1h-1zM91 21h1v1h-1zM5 20h2v1h-2zM12 20h1v1h-1zM31 20h1v1h-1zM36 20h1v1h-1zM38 20h1v1h-1zM69 20h1v1h-1zM89 20h1v1h-1zM5 19h3v1h-3zM10 19h2v1h-2zM33 19h1v1h-1zM40 19h1v1h-1zM47 19h1v1h-1zM64 19h1v1h-1zM73 19h1v1h-1zM5 18h1v1h-1zM7 18h1v1h-1zM9 18h1v1h-1zM11 18h2v1h-2zM16 18h3v1h-3zM20 18h3v1h-3zM29 18h2v1h-2zM35 18h1v1h-1zM43 18h1v1h-1zM5 17h1v1h-1zM7 17h3v1h-3zM13 17h1v1h-1zM17 17h1v1h-1zM19 17h1v1h-1zM21 17h1v1h-1zM29 17h2v1h-2zM35 17h1v1h-1zM53 17h1v1h-1zM5 16h1v1h-1zM12 16h1v1h-1zM31 16h1v1h-1zM33 16h1v1h-1zM36 16h1v1h-1zM46 16h1v1h-1zM53 16h1v1h-1zM6 15h2v1h-2zM10 15h1v1h-1zM12 15h1v1h-1zM21 15h2v1h-2zM59 15h1v1h-1zM69 15h1v1h-1zM74 15h1v1h-1zM91 15h1v1h-1zM6 14h1v1h-1zM8 14h1v1h-1zM11 14h1v1h-1zM22 14h1v1h-1zM34 14h1v1h-1zM39 14h1v1h-1zM52 14h1v1h-1zM62 14h1v1h-1zM75 14h1v1h-1zM78 14h1v1h-1zM6 13h1v1h-1zM12 13h1v1h-1zM17 13h1v1h-1zM22 13h2v1h-2zM25 13h1v1h-1zM30 13h1v1h-1zM51 13h1v1h-1zM60 13h1v1h-1zM66 13h1v1h-1zM96 13h1v1h-1zM4 12h1v1h-1zM10 12h1v1h-1zM14 12h1v1h-1zM16 12h1v1h-1zM25 12h1v1h-1zM29 12h1v1h-1zM46 12h1v1h-1zM52 12h1v1h-1zM76 12h1v1h-1zM5 11h1v1h-1zM7 11h1v1h-1zM9 11h1v1h-1zM16 11h1v1h-1zM22 11h1v1h-1zM34 11h2v1h-2zM44 11h1v1h-1zM46 11h1v1h-1zM96 11h1v1h-1zM4 10h3v1h-3zM8 10h4v1h-4zM25 10h1v1h-1zM29 10h1v1h-1zM32 10h1v1h-1zM62 10h1v1h-1zM5 9h3v1h-3zM9 9h2v1h-2zM13 9h1v1h-1zM29 9h1v1h-1zM47 9h1v1h-1zM73 9h1v1h-1zM78 9h1v1h-1zM85 9h1v1h-1zM6 8h2v1h-2zM12 8h1v1h-1zM19 8h1v1h-1zM15 7h1v1h-1zM20 7h2v1h-2zM31 7h2v1h-2zM44 7h2v1h-2zM48 7h1v1h-1zM55 7h1v1h-1zM60 7h1v1h-1zM65 7h1v1h-1zM69 7h1v1h-1zM96 7h1v1h-1zM5 6h1v1h-1zM7 6h1v1h-1zM12 6h1v1h-1zM20 6h1v1h-1zM30 6h1v1h-1zM35 6h1v1h-1zM59 6h1v1h-1zM84 6h1v1h-1zM4 5h2v1h-2zM14 5h1v1h-1zM21 5h2v1h-2zM27 5h1v1h-1zM51 5h1v1h-1zM60 5h1v1h-1zM63 5h1v1h-1zM79 5h1v1h-1zM7 4h2v1h-2zM10 4h1v1h-1zM14 4h1v1h-1zM24 4h1v1h-1zM34 4h1v1h-1zM41 4h1v1h-1zM52 4h1v1h-1zM74 4h1v1h-1zM4 3h2v1h-2zM8 3h2v1h-2zM11 3h1v1h-1zM21 3h1v1h-1zM4 2h1v1h-1zM6 2h2v1h-2zM9 2h1v1h-1zM14 2h1v1h-1zM18 2h1v1h-1zM21 2h1v1h-1zM29 2h1v1h-1zM33 2h1v1h-1zM60 2h1v1h-1zM88 2h1v1h-1zM6 1h4v1h-4zM23 1h1v1h-1zM33 1h1v1h-1zM61 1h1v1h-1zM6 0h2v1h-2zM15 0h1v1h-1zM19 0h2v1h-2zM25 0h1v1h-1zM35 0h1v1h-1zM40 0h1v1h-1z"/><path fill="#481d6f" d="M10 98h2v1h-2zM17 98h1v1h-1zM30 98h1v1h-1zM48 98h1v1h-1zM13 97h2v1h-2zM30 97h1v1h-1zM34 97h1v1h-1zM38 97h1v1h-1zM42 97h1v1h-1zM50 97h1v1h-1zM55 97h1v1h-1zM72 97h1v1h-1zM9 96h2v1h-2zM15 96h1v1h-1zM22 96h1v1h-1zM33 96h1v1h-1zM63 96h1v1h-1zM90 96h1v1h-1zM97 96h1v1h-1zM10 95h3v1h-3zM30 95h1v1h-1zM41 95h1v1h-1zM50 95h1v1h-1zM58 95h1v1h-1zM8 94h1v1h-1zM10 94h1v1h-1zM14 94h1v1h-1zM32 94h1v1h-1zM69 94h1v1h-1zM72 94h1v1h-1zM79 94h1v1h-1zM82 94h2v1h-2zM8 93h1v1h-1zM10 93h1v1h-1zM13 93h2v1h-2zM23 93h1v1h-1zM26 93h1v1h-1zM36 93h2v1h-2zM39 93h1v1h-1zM49 93h1v1h-1zM55 93h2v1h-2zM61 93h1v1h-1zM69 93h1v1h-1zM10 92h1v1h-1zM13 92h1v1h-1zM31 92h1v1h-1zM77 92h1v1h-1zM8 91h1v1h-1zM22 91h1v1h-1zM25 91h1v1h-1zM27 91h1v1h-1zM32 91h1v1h-1zM41 91h1v1h-1zM97 91h1v1h-1zM11 90h1v1h-1zM21 90h2v1h-2zM32 90h1v1h-1zM57 90h1v1h-1zM78 90h1v1h-1zM9 89h1v1h-1zM11 89h1v1h-1zM14 89h1v1h-1zM16 89h1v1h-1zM33 89h1v1h-1zM43 89h1v1h-1zM48 89h1v1h-1zM73 89h1v1h-1zM17 88h1v1h-1zM29 88h1v1h-1zM37 88h1v1h-1zM43 88h1v1h-1zM45 88h1v1h-1zM54 88h1v1h-1zM59 88h1v1h-1zM89 88h1v1h-1zM7 87h2v1h-2zM14 87h2v1h-2zM23 87h1v1h-1zM55 87h1v1h-1zM75 87h1v1h-1zM86 87h1v1h-1zM91 87h1v1h-1zM9 86h4v1h-4zM16 86h1v1h-1zM20 86h1v1h-1zM23 86h1v1h-1zM28 86h1v1h-1zM36 86h1v1h-1zM44 86h1v1h-1zM52 86h1v1h-1zM58 86h1v1h-1zM62 86h1v1h-1zM88 86h1v1h-1zM9 85h1v1h-1zM12 85h2v1h-2zM19 85h1v1h-1zM37 85h1v1h-1zM41 85h1v1h-1zM49 85h1v1h-1zM86 85h1v1h-1zM7 84h5v1h-5zM20 84h1v1h-1zM51 84h1v1h-1zM53 84h1v1h-1zM75 84h1v1h-1zM77 84h1v1h-1zM8 83h1v1h-1zM19 83h1v1h-1zM22 83h2v1h-2zM35 83h1v1h-1zM37 83h1v1h-1zM42 83h1v1h-1zM44 83h1v1h-1zM54 83h1v1h-1zM74 83h1v1h-1zM95 83h1v1h-1zM10 82h1v1h-1zM15 82h1v1h-1zM18 82h1v1h-1zM47 82h1v1h-1zM63 82h1v1h-1zM19 81h1v1h-1zM23 81h1v1h-1zM27 81h2v1h-2zM47 81h1v1h-1zM55 81h2v1h-2zM64 81h1v1h-1zM66 81h1v1h-1zM69 81h1v1h-1zM72 81h1v1h-1zM97 81h1v1h-1zM11 80h1v1h-1zM13 80h1v1h-1zM17 80h1v1h-1zM38 80h1v1h-1zM74 80h1v1h-1zM81 80h1v1h-1zM87 80h1v1h-1zM11 79h1v1h-1zM18 79h1v1h-1zM29 79h1v1h-1zM31 79h1v1h-1zM35 79h1v1h-1zM37 79h1v1h-1zM48 79h1v1h-1zM52 79h1v1h-1zM64 79h1v1h-1zM96 79h1v1h-1zM8 78h1v1h-1zM14 78h2v1h-2zM28 78h1v1h-1zM39 78h1v1h-1zM52 78h1v1h-1zM77 78h2v1h-2zM83 78h1v1h-1zM9 77h1v1h-1zM11 77h1v1h-1zM23 77h1v1h-1zM26 77h1v1h-1zM38 77h1v1h-1zM55 77h1v1h-1zM13 76h1v1h-1zM40 76h1v1h-1zM60 76h1v1h-1zM85 76h1v1h-1zM91 76h1v1h-1zM9 75h1v1h-1zM11 75h1v1h-1zM26 75h1v1h-1zM8 74h1v1h-1zM10 74h1v1h-1zM24 74h1v1h-1zM33 74h1v1h-1zM45 74h1v1h-1zM51 74h1v1h-1zM60 74h1v1h-1zM89 74h1v1h-1zM91 74h1v1h-1zM9 73h1v1h-1zM16 73h1v1h-1zM31 73h2v1h-2zM66 73h1v1h-1zM74 73h1v1h-1zM28 72h1v1h-1zM31 72h1v1h-1zM35 72h1v1h-1zM37 72h1v1h-1zM93 72h1v1h-1zM8 71h2v1h-2zM12 71h1v1h-1zM42 71h1v1h-1zM49 71h1v1h-1zM67 71h1v1h-1zM97 71h1v1h-1zM7 70h1v1h-1zM9 70h1v1h-1zM31 70h1v1h-1zM34 70h1v1h-1zM37 70h1v1h-1zM55 70h1v1h-1zM65 70h2v1h-2zM91 70h1v1h-1zM10 69h1v1h-1zM16 69h1v1h-1zM25 69h2v1h-2zM29 69h1v1h-1zM33 69h1v1h-1zM36 69h1v1h-1zM47 69h1v1h-1zM53 69h2v1h-2zM57 69h1v1h-1zM84 69h1v1h-1zM8 68h1v1h-1zM11 68h1v1h-1zM17 68h1v1h-1zM35 68h1v1h-1zM56 68h1v1h-1zM72 68h1v1h-1zM80 68h1v1h-1zM96 68h1v1h-1zM8 67h1v1h-1zM11 67h2v1h-2zM15 67h1v1h-1zM21 67h1v1h-1zM24 67h2v1h-2zM35 67h1v1h-1zM37 67h1v1h-1zM9 66h1v1h-1zM26 66h1v1h-1zM37 66h1v1h-1zM7 65h1v1h-1zM9 65h3v1h-3zM27 65h1v1h-1zM29 65h1v1h-1zM48 65h1v1h-1zM76 65h1v1h-1zM81 65h1v1h-1zM8 64h2v1h-2zM11 64h1v1h-1zM13 64h1v1h-1zM20 64h1v1h-1zM36 64h1v1h-1zM39 64h1v1h-1zM41 64h1v1h-1zM44 64h1v1h-1zM50 64h1v1h-1zM61 64h1v1h-1zM88 64h1v1h-1zM8 63h1v1h-1zM18 63h1v1h-1zM22 63h1v1h-1zM26 63h1v1h-1zM31 63h1v1h-1zM37 63h1v1h-1zM51 63h1v1h-1zM94 63h1v1h-1zM9 62h1v1h-1zM11 62h1v1h-1zM13 62h1v1h-1zM18 62h1v1h-1zM21 62h1v1h-1zM29 62h1v1h-1zM31 62h1v1h-1zM38 62h1v1h-1zM49 62h1v1h-1zM51 62h1v1h-1zM7 61h1v1h-1zM10 61h1v1h-1zM14 61h2v1h-2zM26 61h1v1h-1zM42 61h1v1h-1zM49 61h1v1h-1zM51 61h1v1h-1zM88 61h1v1h-1zM8 60h1v1h-1zM13 60h1v1h-1zM17 60h1v1h-1zM20 60h1v1h-1zM26 60h1v1h-1zM31 60h1v1h-1zM38 60h1v1h-1zM44 60h1v1h-1zM15 59h1v1h-1zM18 59h1v1h-1zM31 59h1v1h-1zM37 59h1v1h-1zM76 59h1v1h-1zM11 58h1v1h-1zM16 58h2v1h-2zM25 58h2v1h-2zM45 58h1v1h-1zM53 58h1v1h-1zM59 58h1v1h-1zM84 58h1v1h-1zM91 58h1v1h-1zM12 57h1v1h-1zM14 57h2v1h-2zM21 57h1v1h-1zM41 57h2v1h-2zM71 57h1v1h-1zM9 56h4v1h-4zM14 56h1v1h-1zM16 56h1v1h-1zM25 56h1v1h-1zM29 56h1v1h-1zM57 56h1v1h-1zM66 56h1v1h-1zM12 55h1v1h-1zM25 55h1v1h-1zM30 55h1v1h-1zM36 55h1v1h-1zM94 55h1v1h-1zM14 54h1v1h-1zM19 54h1v1h-1zM21 54h1v1h-1zM38 54h1v1h-1zM63 54h1v1h-1zM72 54h1v1h-1zM80 54h1v1h-1zM92 54h1v1h-1zM11 53h4v1h-4zM29 53h1v1h-1zM35 53h1v1h-1zM37 53h1v1h-1zM48 53h1v1h-1zM72 53h1v1h-1zM98 53h1v1h-1zM14 52h1v1h-1zM19 52h1v1h-1zM21 52h1v1h-1zM46 52h1v1h-1zM76 52h1v1h-1zM11 51h1v1h-1zM14 51h1v1h-1zM38 51h1v1h-1zM60 51h1v1h-1zM69 51h1v1h-1zM17 50h1v1h-1zM34 50h1v1h-1zM57 50h1v1h-1zM71 50h1v1h-1zM10 49h1v1h-1zM15 49h1v1h-1zM27 49h1v1h-1zM34 49h2v1h-2zM41 49h1v1h-1zM54 49h1v1h-1zM10 48h2v1h-2zM13 48h1v1h-1zM21 48h1v1h-1zM28 48h1v1h-1zM38 48h2v1h-2zM44 48h1v1h-1zM51 48h1v1h-1zM75 48h1v1h-1zM8 47h1v1h-1zM14 47h1v1h-1zM16 47h1v1h-1zM22 47h1v1h-1zM24 47h1v1h-1zM33 47h1v1h-1zM14 46h1v1h-1zM18 46h1v1h-1zM22 46h1v1h-1zM24 46h1v1h-1zM28 46h1v1h-1zM83 46h1v1h-1zM93 46h1v1h-1zM13 45h4v1h-4zM25 45h2v1h-2zM33 45h1v1h-1zM39 45h1v1h-1zM46 45h1v1h-1zM51 45h1v1h-1zM82 45h1v1h-1zM8 44h2v1h-2zM11 44h2v1h-2zM14 44h1v1h-1zM22 44h1v1h-1zM37 44h1v1h-1zM43 44h1v1h-1zM59 44h1v1h-1zM62 44h1v1h-1zM72 44h1v1h-1zM81 44h1v1h-1zM97 44h1v1h-1zM13 43h2v1h-2zM17 43h1v1h-1zM40 43h1v1h-1zM47 43h1v1h-1zM95 43h2v1h-2zM11 42h2v1h-2zM21 42h1v1h-1zM52 42h2v1h-2zM8 41h1v1h-1zM10 41h4v1h-4zM19 41h2v1h-2zM26 41h1v1h-1zM39 41h1v1h-1zM55 41h1v1h-1zM62 41h1v1h-1zM10 40h2v1h-2zM14 40h2v1h-2zM18 40h1v1h-1zM22 40h1v1h-1zM26 40h1v1h-1zM45 40h1v1h-1zM68 40h1v1h-1zM9 39h2v1h-2zM13 39h1v1h-1zM18 39h1v1h-1zM28 39h1v1h-1zM36 39h1v1h-1zM85 39h1v1h-1zM96 39h1v1h-1zM13 38h1v1h-1zM16 38h2v1h-2zM29 38h1v1h-1zM35 38h1v1h-1zM44 38h1v1h-1zM77 38h1v1h-1zM14 37h1v1h-1zM16 37h1v1h-1zM21 37h1v1h-1zM25 37h1v1h-1zM29 37h1v1h-1zM36 37h1v1h-1zM38 37h1v1h-1zM44 37h1v1h-1zM8 36h1v1h-1zM10 36h1v1h-1zM20 36h1v1h-1zM31 36h3v1h-3zM35 36h3v1h-3zM93 36h1v1h-1zM12 35h1v1h-1zM14 35h1v1h-1zM17 35h1v1h-1zM25 35h1v1h-1zM39 35h1v1h-1zM42 35h1v1h-1zM47 35h1v1h-1zM62 35h1v1h-1zM71 35h1v1h-1zM98 35h1v1h-1zM9 34h1v1h-1zM13 34h1v1h-1zM15 34h1v1h-1zM20 34h1v1h-1zM33 34h2v1h-2zM40 34h1v1h-1zM80 34h1v1h-1zM12 33h1v1h-1zM14 33h1v1h-1zM16 33h1v1h-1zM53 33h1v1h-1zM69 33h1v1h-1zM94 33h1v1h-1zM10 32h1v1h-1zM18 32h1v1h-1zM26 32h1v1h-1zM30 32h1v1h-1zM34 32h1v1h-1zM50 32h1v1h-1zM55 32h1v1h-1zM68 32h1v1h-1zM94 32h1v1h-1zM20 31h1v1h-1zM27 31h1v1h-1zM31 31h1v1h-1zM48 31h2v1h-2zM80 31h1v1h-1zM8 30h1v1h-1zM12 30h1v1h-1zM20 30h1v1h-1zM27 30h1v1h-1zM36 30h2v1h-2zM40 30h1v1h-1zM46 30h1v1h-1zM66 30h1v1h-1zM77 30h1v1h-1zM82 30h1v1h-1zM9 29h1v1h-1zM19 29h1v1h-1zM28 29h1v1h-1zM34 29h1v1h-1zM61 29h1v1h-1zM92 29h1v1h-1zM95 29h1v1h-1zM7 28h2v1h-2zM10 28h1v1h-1zM16 28h1v1h-1zM27 28h1v1h-1zM29 28h1v1h-1zM47 28h1v1h-1zM57 28h1v1h-1zM10 27h1v1h-1zM29 27h1v1h-1zM54 27h1v1h-1zM64 27h1v1h-1zM67 27h1v1h-1zM70 27h1v1h-1zM88 27h1v1h-1zM92 27h1v1h-1zM11 26h1v1h-1zM15 26h2v1h-2zM19 26h1v1h-1zM24 26h1v1h-1zM29 26h1v1h-1zM65 26h1v1h-1zM70 26h1v1h-1zM90 26h1v1h-1zM9 25h1v1h-1zM13 25h2v1h-2zM17 25h2v1h-2zM21 25h1v1h-1zM27 25h1v1h-1zM30 25h1v1h-1zM34 25h1v1h-1zM50 25h1v1h-1zM9 24h1v1h-1zM21 24h1v1h-1zM23 24h1v1h-1zM39 24h1v1h-1zM50 24h1v1h-1zM56 24h1v1h-1zM10 23h3v1h-3zM22 23h1v1h-1zM43 23h1v1h-1zM10 22h2v1h-2zM17 22h1v1h-1zM32 22h1v1h-1zM39 22h1v1h-1zM48 22h3v1h-3zM64 22h1v1h-1zM79 22h2v1h-2zM7 21h3v1h-3zM11 21h1v1h-1zM24 21h1v1h-1zM39 21h1v1h-1zM56 21h1v1h-1zM96 21h1v1h-1zM11 20h1v1h-1zM22 20h1v1h-1zM26 20h1v1h-1zM29 20h1v1h-1zM35 20h1v1h-1zM44 20h1v1h-1zM76 20h1v1h-1zM84 20h1v1h-1zM8 19h1v1h-1zM13 19h1v1h-1zM25 19h1v1h-1zM29 19h1v1h-1zM32 19h1v1h-1zM59 19h1v1h-1zM79 19h1v1h-1zM24 18h1v1h-1zM79 18h1v1h-1zM11 17h1v1h-1zM14 17h1v1h-1zM16 17h1v1h-1zM24 17h1v1h-1zM28 17h1v1h-1zM36 17h1v1h-1zM46 17h1v1h-1zM58 17h1v1h-1zM86 17h1v1h-1zM93 17h1v1h-1zM9 16h2v1h-2zM13 16h1v1h-1zM17 16h1v1h-1zM81 16h1v1h-1zM97 16h1v1h-1zM16 15h1v1h-1zM19 15h1v1h-1zM26 15h1v1h-1zM29 15h1v1h-1zM47 15h1v1h-1zM52 15h1v1h-1zM86 15h1v1h-1zM92 15h1v1h-1zM95 15h1v1h-1zM12 14h4v1h-4zM19 14h3v1h-3zM25 14h1v1h-1zM29 14h1v1h-1zM40 14h1v1h-1zM8 13h1v1h-1zM18 13h1v1h-1zM29 13h1v1h-1zM40 13h1v1h-1zM98 13h1v1h-1zM7 12h2v1h-2zM11 12h3v1h-3zM20 12h1v1h-1zM23 12h1v1h-1zM34 12h1v1h-1zM68 12h1v1h-1zM70 12h1v1h-1zM94 12h1v1h-1zM21 11h1v1h-1zM25 11h1v1h-1zM27 11h2v1h-2zM43 11h1v1h-1zM12 10h2v1h-2zM27 10h1v1h-1zM63 10h1v1h-1zM66 10h1v1h-1zM25 9h1v1h-1zM28 9h1v1h-1zM33 9h1v1h-1zM10 8h1v1h-1zM14 8h3v1h-3zM20 8h1v1h-1zM25 8h1v1h-1zM29 8h1v1h-1zM32 8h1v1h-1zM34 8h2v1h-2zM8 7h3v1h-3zM13 7h1v1h-1zM19 7h1v1h-1zM24 7h1v1h-1zM63 7h2v1h-2zM72 7h1v1h-1zM86 7h1v1h-1zM9 6h2v1h-2zM13 6h3v1h-3zM17 6h1v1h-1zM23 6h1v1h-1zM25 6h1v1h-1zM27 6h1v1h-1zM29 6h1v1h-1zM37 6h1v1h-1zM50 6h1v1h-1zM52 6h1v1h-1zM63 6h1v1h-1zM7 5h1v1h-1zM10 5h1v1h-1zM12 5h2v1h-2zM19 5h1v1h-1zM25 5h1v1h-1zM59 5h1v1h-1zM80 5h1v1h-1zM9 4h1v1h-1zM60 4h1v1h-1zM10 3h1v1h-1zM13 3h1v1h-1zM15 3h4v1h-4zM22 3h1v1h-1zM24 3h1v1h-1zM26 3h1v1h-1zM28 3h1v1h-1zM34 3h1v1h-1zM45 3h1v1h-1zM51 3h1v1h-1zM68 3h1v1h-1zM72 3h1v1h-1zM8 2h1v1h-1zM17 2h1v1h-1zM34 2h1v1h-1zM41 2h1v1h-1zM73 2h1v1h-1zM11 1h1v1h-1zM13 1h1v1h-1zM16 1h1v1h-1zM20 1h1v1h-1zM25 1h1v1h-1zM27 1h1v1h-1zM60 1h1v1h-1zM66 1h1v1h-1zM71 1h1v1h-1zM80 1h1v1h-1zM82 1h2v1h-2zM8 0h2v1h-2zM12 0h1v1h-1zM24 0h1v1h-1zM50 0h1v1h-1zM55 0h1v1h-1zM69 0h1v1h-1zM74 0h1v1h-1zM78 0h1v1h-1z"/><path fill="#482878" d="M20 98h1v1h-1zM32 98h1v1h-1zM37 98h1v1h-1zM39 98h1v1h-1zM71 98h1v1h-1zM76 98h1v1h-1zM91 97h1v1h-1zM12 96h1v1h-1zM19 96h1v1h-1zM38 96h1v1h-1zM41 96h1v1h-1zM82 96h1v1h-1zM91 96h1v1h-1zM14 95h1v1h-1zM17 95h1v1h-1zM20 95h2v1h-2zM25 95h1v1h-1zM32 95h1v1h-1zM63 95h1v1h-1zM70 95h1v1h-1zM11 94h1v1h-1zM15 94h1v1h-1zM20 94h2v1h-2zM33 94h1v1h-1zM42 94h1v1h-1zM44 94h1v1h-1zM46 94h1v1h-1zM51 94h1v1h-1zM57 94h1v1h-1zM97 94h1v1h-1zM20 93h1v1h-1zM43 93h1v1h-1zM72 93h1v1h-1zM76 93h1v1h-1zM85 93h1v1h-1zM17 92h1v1h-1zM19 92h1v1h-1zM34 92h1v1h-1zM43 92h1v1h-1zM61 92h1v1h-1zM69 92h2v1h-2zM12 91h1v1h-1zM18 91h1v1h-1zM21 91h1v1h-1zM33 91h1v1h-1zM54 91h1v1h-1zM63 91h1v1h-1zM81 91h1v1h-1zM12 90h1v1h-1zM14 90h3v1h-3zM38 90h2v1h-2zM43 90h1v1h-1zM66 90h1v1h-1zM73 90h1v1h-1zM89 90h1v1h-1zM98 90h1v1h-1zM12 89h2v1h-2zM19 89h2v1h-2zM24 89h1v1h-1zM26 89h1v1h-1zM30 89h1v1h-1zM32 89h1v1h-1zM41 89h1v1h-1zM47 89h1v1h-1zM59 89h1v1h-1zM65 89h1v1h-1zM93 89h1v1h-1zM13 88h1v1h-1zM23 88h1v1h-1zM33 88h1v1h-1zM58 88h1v1h-1zM11 87h1v1h-1zM26 87h1v1h-1zM30 87h1v1h-1zM38 87h1v1h-1zM42 87h1v1h-1zM46 87h1v1h-1zM78 87h1v1h-1zM13 86h1v1h-1zM50 86h1v1h-1zM59 86h1v1h-1zM91 86h1v1h-1zM14 85h1v1h-1zM58 85h1v1h-1zM70 85h1v1h-1zM77 85h1v1h-1zM16 84h2v1h-2zM21 84h1v1h-1zM26 84h1v1h-1zM93 84h1v1h-1zM11 83h2v1h-2zM14 83h1v1h-1zM18 83h1v1h-1zM20 83h1v1h-1zM25 83h1v1h-1zM63 83h1v1h-1zM13 82h1v1h-1zM17 82h1v1h-1zM32 82h1v1h-1zM35 82h1v1h-1zM37 82h2v1h-2zM44 82h1v1h-1zM76 82h1v1h-1zM83 82h1v1h-1zM12 81h1v1h-1zM17 81h2v1h-2zM22 81h1v1h-1zM38 81h2v1h-2zM45 81h2v1h-2zM52 81h1v1h-1zM78 81h2v1h-2zM15 80h1v1h-1zM18 80h1v1h-1zM21 80h1v1h-1zM29 80h1v1h-1zM31 80h2v1h-2zM37 80h1v1h-1zM53 80h1v1h-1zM63 80h1v1h-1zM86 80h1v1h-1zM10 79h1v1h-1zM16 79h1v1h-1zM23 79h1v1h-1zM32 79h1v1h-1zM20 78h1v1h-1zM25 78h1v1h-1zM62 78h1v1h-1zM84 78h1v1h-1zM93 78h1v1h-1zM95 78h1v1h-1zM18 77h1v1h-1zM25 77h1v1h-1zM30 77h1v1h-1zM58 77h1v1h-1zM66 77h1v1h-1zM89 77h2v1h-2zM92 77h1v1h-1zM18 76h1v1h-1zM31 76h1v1h-1zM44 76h1v1h-1zM56 76h1v1h-1zM59 76h1v1h-1zM74 76h1v1h-1zM84 76h1v1h-1zM12 75h2v1h-2zM17 75h1v1h-1zM23 75h1v1h-1zM32 75h1v1h-1zM42 75h1v1h-1zM48 75h1v1h-1zM56 75h1v1h-1zM92 75h1v1h-1zM13 74h2v1h-2zM18 74h2v1h-2zM21 74h1v1h-1zM28 74h1v1h-1zM36 74h1v1h-1zM47 74h1v1h-1zM80 74h1v1h-1zM12 73h1v1h-1zM17 73h1v1h-1zM19 73h1v1h-1zM26 73h1v1h-1zM41 73h1v1h-1zM46 73h1v1h-1zM56 73h1v1h-1zM72 73h1v1h-1zM80 73h1v1h-1zM12 72h1v1h-1zM16 72h1v1h-1zM26 72h1v1h-1zM30 72h1v1h-1zM33 72h1v1h-1zM58 72h1v1h-1zM63 72h1v1h-1zM72 72h1v1h-1zM10 71h2v1h-2zM13 71h1v1h-1zM15 71h2v1h-2zM19 71h1v1h-1zM22 71h1v1h-1zM24 71h1v1h-1zM27 71h1v1h-1zM52 71h1v1h-1zM64 71h1v1h-1zM12 70h1v1h-1zM20 70h1v1h-1zM22 70h1v1h-1zM17 69h1v1h-1zM19 69h1v1h-1zM41 69h1v1h-1zM78 69h1v1h-1zM13 68h1v1h-1zM21 68h1v1h-1zM26 68h2v1h-2zM33 68h1v1h-1zM36 68h1v1h-1zM45 68h1v1h-1zM49 68h1v1h-1zM67 68h1v1h-1zM13 67h1v1h-1zM16 67h1v1h-1zM18 67h1v1h-1zM20 67h1v1h-1zM40 67h1v1h-1zM48 67h1v1h-1zM60 67h1v1h-1zM63 67h1v1h-1zM90 67h1v1h-1zM93 67h1v1h-1zM14 66h1v1h-1zM20 66h1v1h-1zM13 65h3v1h-3zM18 65h1v1h-1zM20 65h1v1h-1zM55 65h1v1h-1zM64 65h1v1h-1zM86 65h1v1h-1zM47 64h1v1h-1zM13 63h3v1h-3zM21 63h1v1h-1zM41 63h1v1h-1zM46 63h1v1h-1zM60 63h1v1h-1zM88 63h1v1h-1zM10 62h1v1h-1zM15 62h2v1h-2zM27 62h2v1h-2zM41 62h1v1h-1zM60 62h1v1h-1zM68 62h1v1h-1zM71 62h1v1h-1zM77 62h1v1h-1zM91 62h1v1h-1zM19 61h1v1h-1zM25 61h1v1h-1zM32 61h1v1h-1zM37 61h1v1h-1zM65 61h1v1h-1zM77 61h1v1h-1zM93 61h1v1h-1zM15 60h1v1h-1zM18 60h1v1h-1zM29 60h1v1h-1zM34 60h1v1h-1zM53 60h1v1h-1zM12 59h1v1h-1zM38 59h1v1h-1zM88 59h1v1h-1zM10 58h1v1h-1zM19 58h1v1h-1zM39 58h1v1h-1zM62 58h1v1h-1zM65 58h1v1h-1zM67 58h1v1h-1zM16 57h1v1h-1zM26 57h1v1h-1zM31 57h1v1h-1zM33 57h1v1h-1zM64 57h1v1h-1zM76 57h1v1h-1zM95 57h1v1h-1zM13 56h1v1h-1zM15 56h1v1h-1zM20 56h1v1h-1zM41 56h1v1h-1zM47 56h1v1h-1zM85 56h1v1h-1zM17 55h1v1h-1zM40 55h1v1h-1zM47 55h2v1h-2zM73 55h1v1h-1zM76 55h1v1h-1zM89 55h1v1h-1zM12 54h1v1h-1zM17 54h1v1h-1zM28 54h1v1h-1zM45 54h1v1h-1zM61 54h1v1h-1zM10 53h1v1h-1zM17 53h2v1h-2zM23 53h2v1h-2zM33 53h1v1h-1zM40 53h1v1h-1zM56 53h1v1h-1zM59 53h1v1h-1zM82 53h1v1h-1zM86 53h1v1h-1zM94 53h1v1h-1zM11 52h2v1h-2zM18 52h1v1h-1zM24 52h1v1h-1zM31 52h1v1h-1zM47 52h1v1h-1zM51 52h1v1h-1zM65 52h1v1h-1zM82 52h1v1h-1zM84 52h1v1h-1zM89 52h1v1h-1zM15 51h1v1h-1zM22 51h1v1h-1zM48 51h1v1h-1zM59 51h1v1h-1zM77 51h1v1h-1zM85 51h1v1h-1zM92 51h1v1h-1zM15 50h1v1h-1zM18 50h1v1h-1zM21 50h2v1h-2zM27 50h1v1h-1zM42 50h1v1h-1zM46 50h1v1h-1zM55 50h1v1h-1zM58 50h1v1h-1zM61 50h1v1h-1zM63 50h1v1h-1zM11 49h1v1h-1zM14 49h1v1h-1zM23 49h2v1h-2zM31 49h1v1h-1zM66 49h1v1h-1zM69 49h1v1h-1zM76 49h1v1h-1zM82 49h2v1h-2zM14 48h2v1h-2zM17 48h1v1h-1zM23 48h1v1h-1zM27 48h1v1h-1zM30 48h1v1h-1zM49 48h1v1h-1zM52 48h1v1h-1zM68 48h1v1h-1zM86 48h1v1h-1zM13 47h1v1h-1zM15 47h1v1h-1zM26 47h1v1h-1zM61 47h1v1h-1zM88 47h1v1h-1zM92 47h2v1h-2zM10 46h1v1h-1zM36 46h1v1h-1zM22 45h1v1h-1zM36 45h1v1h-1zM41 45h1v1h-1zM17 44h1v1h-1zM25 44h1v1h-1zM30 44h1v1h-1zM32 44h1v1h-1zM66 44h1v1h-1zM11 43h2v1h-2zM16 43h1v1h-1zM19 43h1v1h-1zM25 43h1v1h-1zM42 43h1v1h-1zM13 42h1v1h-1zM18 42h1v1h-1zM20 42h1v1h-1zM24 42h1v1h-1zM26 42h1v1h-1zM54 42h1v1h-1zM76 42h1v1h-1zM14 41h2v1h-2zM17 41h1v1h-1zM33 41h1v1h-1zM35 41h1v1h-1zM41 41h1v1h-1zM45 41h1v1h-1zM71 41h1v1h-1zM16 40h1v1h-1zM31 40h1v1h-1zM48 40h1v1h-1zM55 40h1v1h-1zM58 40h1v1h-1zM19 39h1v1h-1zM27 39h1v1h-1zM29 39h1v1h-1zM33 39h1v1h-1zM41 39h1v1h-1zM65 39h1v1h-1zM11 38h1v1h-1zM20 38h1v1h-1zM24 38h1v1h-1zM38 38h1v1h-1zM40 38h1v1h-1zM64 37h1v1h-1zM89 37h1v1h-1zM11 36h1v1h-1zM21 36h1v1h-1zM26 36h1v1h-1zM34 36h1v1h-1zM39 36h1v1h-1zM45 36h1v1h-1zM78 36h1v1h-1zM18 35h1v1h-1zM22 35h1v1h-1zM31 35h1v1h-1zM45 35h1v1h-1zM58 35h1v1h-1zM96 35h1v1h-1zM14 34h1v1h-1zM22 34h1v1h-1zM26 34h1v1h-1zM28 34h1v1h-1zM37 34h1v1h-1zM86 34h1v1h-1zM11 33h1v1h-1zM19 33h1v1h-1zM34 33h1v1h-1zM45 33h1v1h-1zM80 33h1v1h-1zM11 32h2v1h-2zM15 32h1v1h-1zM49 32h1v1h-1zM52 32h1v1h-1zM63 32h1v1h-1zM14 31h1v1h-1zM23 31h1v1h-1zM29 31h1v1h-1zM32 31h1v1h-1zM34 31h1v1h-1zM41 31h1v1h-1zM45 31h1v1h-1zM77 31h2v1h-2zM88 31h1v1h-1zM18 30h1v1h-1zM25 30h1v1h-1zM15 29h1v1h-1zM24 29h1v1h-1zM27 29h1v1h-1zM42 29h1v1h-1zM51 29h1v1h-1zM54 29h1v1h-1zM89 29h1v1h-1zM12 28h2v1h-2zM15 28h1v1h-1zM20 28h1v1h-1zM46 28h1v1h-1zM64 28h1v1h-1zM72 28h1v1h-1zM89 28h2v1h-2zM12 27h2v1h-2zM15 27h1v1h-1zM44 27h1v1h-1zM53 27h1v1h-1zM61 27h1v1h-1zM73 27h1v1h-1zM79 27h1v1h-1zM10 26h1v1h-1zM13 26h1v1h-1zM18 26h1v1h-1zM21 26h1v1h-1zM74 26h1v1h-1zM92 26h1v1h-1zM11 25h1v1h-1zM16 25h1v1h-1zM38 25h1v1h-1zM49 25h1v1h-1zM60 25h1v1h-1zM70 25h1v1h-1zM74 25h1v1h-1zM79 25h1v1h-1zM92 25h1v1h-1zM11 24h1v1h-1zM14 24h1v1h-1zM16 24h2v1h-2zM20 24h1v1h-1zM22 24h1v1h-1zM25 24h1v1h-1zM51 24h1v1h-1zM88 24h1v1h-1zM16 23h1v1h-1zM19 23h2v1h-2zM25 23h1v1h-1zM32 23h1v1h-1zM42 23h1v1h-1zM61 23h1v1h-1zM74 23h1v1h-1zM81 23h1v1h-1zM94 23h1v1h-1zM14 22h2v1h-2zM21 22h1v1h-1zM23 22h1v1h-1zM27 22h1v1h-1zM35 22h1v1h-1zM38 22h1v1h-1zM55 22h1v1h-1zM61 22h1v1h-1zM25 21h1v1h-1zM27 21h1v1h-1zM31 21h1v1h-1zM35 21h1v1h-1zM42 21h1v1h-1zM50 21h1v1h-1zM71 21h3v1h-3zM75 21h1v1h-1zM13 20h1v1h-1zM17 20h1v1h-1zM27 20h1v1h-1zM32 20h1v1h-1zM46 20h1v1h-1zM58 20h2v1h-2zM17 19h1v1h-1zM20 19h1v1h-1zM27 19h1v1h-1zM34 19h1v1h-1zM39 19h1v1h-1zM50 19h1v1h-1zM70 19h1v1h-1zM83 19h1v1h-1zM90 19h1v1h-1zM94 19h1v1h-1zM25 18h1v1h-1zM42 18h1v1h-1zM75 18h1v1h-1zM12 17h1v1h-1zM18 17h1v1h-1zM25 17h1v1h-1zM38 17h2v1h-2zM41 17h1v1h-1zM60 17h1v1h-1zM81 17h1v1h-1zM18 16h1v1h-1zM24 16h1v1h-1zM40 16h1v1h-1zM45 16h1v1h-1zM66 16h1v1h-1zM71 16h1v1h-1zM11 15h1v1h-1zM13 15h1v1h-1zM17 15h2v1h-2zM75 15h1v1h-1zM24 14h1v1h-1zM47 14h1v1h-1zM49 14h1v1h-1zM93 14h1v1h-1zM34 13h1v1h-1zM56 13h1v1h-1zM15 12h1v1h-1zM28 12h1v1h-1zM31 12h1v1h-1zM56 12h1v1h-1zM71 12h1v1h-1zM73 12h1v1h-1zM86 12h1v1h-1zM96 12h1v1h-1zM10 11h1v1h-1zM12 11h1v1h-1zM14 10h1v1h-1zM16 10h1v1h-1zM20 10h1v1h-1zM60 10h1v1h-1zM78 10h1v1h-1zM12 9h1v1h-1zM16 9h1v1h-1zM22 9h1v1h-1zM26 9h1v1h-1zM35 9h2v1h-2zM38 9h1v1h-1zM76 9h1v1h-1zM86 9h1v1h-1zM98 9h1v1h-1zM11 8h1v1h-1zM13 8h1v1h-1zM21 8h1v1h-1zM39 8h2v1h-2zM18 7h1v1h-1zM22 7h1v1h-1zM36 7h1v1h-1zM58 7h1v1h-1zM61 7h1v1h-1zM77 7h1v1h-1zM18 6h1v1h-1zM22 6h1v1h-1zM34 6h1v1h-1zM64 6h1v1h-1zM79 6h1v1h-1zM17 5h1v1h-1zM28 5h1v1h-1zM65 5h1v1h-1zM13 4h1v1h-1zM15 4h1v1h-1zM20 4h1v1h-1zM25 4h1v1h-1zM33 4h1v1h-1zM35 4h1v1h-1zM62 4h1v1h-1zM65 4h1v1h-1zM82 4h1v1h-1zM14 3h1v1h-1zM20 3h1v1h-1zM27 3h1v1h-1zM37 3h1v1h-1zM44 3h1v1h-1zM47 3h1v1h-1zM50 3h1v1h-1zM12 2h2v1h-2zM20 2h1v1h-1zM24 2h1v1h-1zM26 2h1v1h-1zM36 2h1v1h-1zM43 2h1v1h-1zM81 2h1v1h-1zM26 1h1v1h-1zM69 1h1v1h-1zM73 1h1v1h-1zM77 1h1v1h-1zM95 1h1v1h-1zM27 0h1v1h-1zM30 0h1v1h-1zM45 0h1v1h-1zM75 0h1v1h-1zM89 0h1v1h-1z"/><path fill="#46327e" d="M15 98h1v1h-1zM23 98h1v1h-1zM26 98h1v1h-1zM29 98h1v1h-1zM31 98h1v1h-1zM34 98h1v1h-1zM41 98h1v1h-1zM65 98h1v1h-1zM80 98h1v1h-1zM98 98h1v1h-1zM15 97h2v1h-2zM19 97h1v1h-1zM22 97h1v1h-1zM27 97h1v1h-1zM44 97h1v1h-1zM60 97h1v1h-1zM79 97h1v1h-1zM84 97h1v1h-1zM13 96h1v1h-1zM18 96h1v1h-1zM20 96h1v1h-1zM24 96h1v1h-1zM27 96h2v1h-2zM48 96h1v1h-1zM77 96h1v1h-1zM80 96h1v1h-1zM92 96h2v1h-2zM15 95h2v1h-2zM28 95h1v1h-1zM42 95h1v1h-1zM52 95h1v1h-1zM60 95h1v1h-1zM81 95h1v1h-1zM16 94h1v1h-1zM22 94h1v1h-1zM37 94h2v1h-2zM55 94h1v1h-1zM80 94h1v1h-1zM25 93h1v1h-1zM41 93h1v1h-1zM81 93h1v1h-1zM16 92h1v1h-1zM51 92h1v1h-1zM55 92h1v1h-1zM73 92h1v1h-1zM87 92h1v1h-1zM37 91h1v1h-1zM39 91h1v1h-1zM53 91h1v1h-1zM19 90h2v1h-2zM28 90h1v1h-1zM33 90h1v1h-1zM35 90h1v1h-1zM54 90h1v1h-1zM58 90h1v1h-1zM95 90h1v1h-1zM15 89h1v1h-1zM29 89h1v1h-1zM36 89h1v1h-1zM51 89h1v1h-1zM53 89h1v1h-1zM68 89h1v1h-1zM41 88h1v1h-1zM80 88h1v1h-1zM37 87h1v1h-1zM44 87h1v1h-1zM56 87h1v1h-1zM64 87h1v1h-1zM74 87h1v1h-1zM15 86h1v1h-1zM21 86h1v1h-1zM25 86h1v1h-1zM41 86h1v1h-1zM17 85h1v1h-1zM24 85h1v1h-1zM48 85h1v1h-1zM52 85h1v1h-1zM54 85h1v1h-1zM56 85h1v1h-1zM64 85h1v1h-1zM27 84h2v1h-2zM32 84h1v1h-1zM46 84h1v1h-1zM59 84h1v1h-1zM63 84h1v1h-1zM84 84h1v1h-1zM87 84h1v1h-1zM97 84h1v1h-1zM16 83h1v1h-1zM24 83h1v1h-1zM27 83h1v1h-1zM34 83h1v1h-1zM71 83h1v1h-1zM14 82h1v1h-1zM66 82h1v1h-1zM78 82h1v1h-1zM15 81h1v1h-1zM20 81h1v1h-1zM53 81h1v1h-1zM60 81h1v1h-1zM70 81h1v1h-1zM74 81h1v1h-1zM77 81h1v1h-1zM88 81h1v1h-1zM27 80h1v1h-1zM30 80h1v1h-1zM36 80h1v1h-1zM45 80h1v1h-1zM62 80h1v1h-1zM75 80h1v1h-1zM88 80h1v1h-1zM15 79h1v1h-1zM19 79h1v1h-1zM27 79h1v1h-1zM33 79h1v1h-1zM43 79h1v1h-1zM46 79h1v1h-1zM75 79h1v1h-1zM86 79h1v1h-1zM90 79h2v1h-2zM13 78h1v1h-1zM19 78h1v1h-1zM24 78h1v1h-1zM36 78h2v1h-2zM44 78h1v1h-1zM17 77h1v1h-1zM19 77h1v1h-1zM22 77h1v1h-1zM43 77h1v1h-1zM45 77h1v1h-1zM27 76h1v1h-1zM29 76h1v1h-1zM35 76h1v1h-1zM65 76h1v1h-1zM88 76h1v1h-1zM14 75h1v1h-1zM20 75h3v1h-3zM35 75h1v1h-1zM37 75h1v1h-1zM73 75h1v1h-1zM91 75h1v1h-1zM25 74h3v1h-3zM29 74h1v1h-1zM55 74h1v1h-1zM61 74h1v1h-1zM29 73h1v1h-1zM35 73h1v1h-1zM47 73h1v1h-1zM49 73h2v1h-2zM52 73h1v1h-1zM63 73h1v1h-1zM73 73h1v1h-1zM78 73h1v1h-1zM95 73h1v1h-1zM14 72h2v1h-2zM20 72h1v1h-1zM25 72h1v1h-1zM48 72h1v1h-1zM73 72h1v1h-1zM79 72h1v1h-1zM18 71h1v1h-1zM21 71h1v1h-1zM28 71h1v1h-1zM40 71h1v1h-1zM44 71h2v1h-2zM21 70h1v1h-1zM24 70h1v1h-1zM27 70h1v1h-1zM30 70h1v1h-1zM78 70h1v1h-1zM23 69h1v1h-1zM28 69h1v1h-1zM42 69h1v1h-1zM45 69h1v1h-1zM61 69h1v1h-1zM76 69h1v1h-1zM24 68h1v1h-1zM39 68h1v1h-1zM65 68h1v1h-1zM77 68h1v1h-1zM14 67h1v1h-1zM19 67h1v1h-1zM26 67h1v1h-1zM42 67h2v1h-2zM55 67h1v1h-1zM67 67h1v1h-1zM74 67h1v1h-1zM89 67h1v1h-1zM13 66h1v1h-1zM40 66h1v1h-1zM46 66h1v1h-1zM25 65h1v1h-1zM54 65h1v1h-1zM62 65h1v1h-1zM71 65h1v1h-1zM18 64h2v1h-2zM28 64h2v1h-2zM31 64h1v1h-1zM33 64h1v1h-1zM45 64h1v1h-1zM62 64h1v1h-1zM64 64h1v1h-1zM72 64h1v1h-1zM74 64h1v1h-1zM19 63h1v1h-1zM29 63h1v1h-1zM32 63h1v1h-1zM42 63h2v1h-2zM73 63h1v1h-1zM76 63h1v1h-1zM82 63h1v1h-1zM14 62h1v1h-1zM20 62h1v1h-1zM36 62h1v1h-1zM44 62h1v1h-1zM83 62h1v1h-1zM28 61h1v1h-1zM31 61h1v1h-1zM43 61h1v1h-1zM50 61h1v1h-1zM56 61h1v1h-1zM59 61h1v1h-1zM84 61h1v1h-1zM87 61h1v1h-1zM19 60h1v1h-1zM21 60h2v1h-2zM30 60h1v1h-1zM33 60h1v1h-1zM39 60h1v1h-1zM64 60h1v1h-1zM14 59h1v1h-1zM20 59h1v1h-1zM22 59h1v1h-1zM32 59h1v1h-1zM42 59h1v1h-1zM51 59h1v1h-1zM70 59h1v1h-1zM83 59h1v1h-1zM15 58h1v1h-1zM18 58h1v1h-1zM24 58h1v1h-1zM33 58h1v1h-1zM73 58h1v1h-1zM17 57h1v1h-1zM20 57h1v1h-1zM30 57h1v1h-1zM40 57h1v1h-1zM49 57h1v1h-1zM80 57h1v1h-1zM18 56h1v1h-1zM22 56h2v1h-2zM26 56h1v1h-1zM33 56h1v1h-1zM36 56h1v1h-1zM39 56h1v1h-1zM49 56h1v1h-1zM87 56h1v1h-1zM13 55h2v1h-2zM21 55h1v1h-1zM26 55h1v1h-1zM28 55h1v1h-1zM13 54h1v1h-1zM16 54h1v1h-1zM23 54h2v1h-2zM29 54h2v1h-2zM35 54h1v1h-1zM48 54h1v1h-1zM66 54h1v1h-1zM79 54h1v1h-1zM93 54h1v1h-1zM20 53h1v1h-1zM22 53h1v1h-1zM41 53h2v1h-2zM81 53h1v1h-1zM16 52h2v1h-2zM23 52h1v1h-1zM26 52h1v1h-1zM50 52h1v1h-1zM98 52h1v1h-1zM20 51h1v1h-1zM24 51h1v1h-1zM32 51h1v1h-1zM62 51h1v1h-1zM71 51h1v1h-1zM25 50h1v1h-1zM36 50h1v1h-1zM54 50h1v1h-1zM81 50h1v1h-1zM91 50h1v1h-1zM63 49h1v1h-1zM65 49h1v1h-1zM46 48h1v1h-1zM20 47h1v1h-1zM52 47h1v1h-1zM57 47h1v1h-1zM65 47h1v1h-1zM15 46h2v1h-2zM25 46h1v1h-1zM29 46h1v1h-1zM31 46h1v1h-1zM37 46h1v1h-1zM41 46h1v1h-1zM45 46h1v1h-1zM48 46h1v1h-1zM63 46h1v1h-1zM18 45h1v1h-1zM34 45h1v1h-1zM47 45h1v1h-1zM75 45h1v1h-1zM77 45h1v1h-1zM18 44h1v1h-1zM31 44h1v1h-1zM36 44h1v1h-1zM41 44h1v1h-1zM47 44h1v1h-1zM75 44h1v1h-1zM88 44h1v1h-1zM93 44h1v1h-1zM15 43h1v1h-1zM20 43h1v1h-1zM36 43h1v1h-1zM43 43h1v1h-1zM46 43h1v1h-1zM57 43h1v1h-1zM89 43h1v1h-1zM17 42h1v1h-1zM23 42h1v1h-1zM30 42h1v1h-1zM16 41h1v1h-1zM22 41h1v1h-1zM24 41h1v1h-1zM28 41h1v1h-1zM47 41h1v1h-1zM63 41h1v1h-1zM67 41h1v1h-1zM19 40h2v1h-2zM24 40h1v1h-1zM63 40h1v1h-1zM16 39h1v1h-1zM37 39h1v1h-1zM49 39h1v1h-1zM52 39h1v1h-1zM54 39h1v1h-1zM86 39h1v1h-1zM98 39h1v1h-1zM19 38h1v1h-1zM25 38h2v1h-2zM31 38h1v1h-1zM73 37h1v1h-1zM84 37h1v1h-1zM91 37h1v1h-1zM14 36h1v1h-1zM48 36h1v1h-1zM67 36h1v1h-1zM97 36h1v1h-1zM15 35h2v1h-2zM23 35h2v1h-2zM33 35h1v1h-1zM17 34h3v1h-3zM25 34h1v1h-1zM58 34h1v1h-1zM67 34h1v1h-1zM75 34h1v1h-1zM88 34h1v1h-1zM17 33h1v1h-1zM20 33h1v1h-1zM22 33h1v1h-1zM24 33h2v1h-2zM33 33h1v1h-1zM88 33h1v1h-1zM17 31h1v1h-1zM21 31h1v1h-1zM24 31h1v1h-1zM36 31h1v1h-1zM15 30h1v1h-1zM17 30h1v1h-1zM22 30h1v1h-1zM50 30h1v1h-1zM58 30h2v1h-2zM89 30h1v1h-1zM93 30h1v1h-1zM14 29h1v1h-1zM21 29h2v1h-2zM30 29h1v1h-1zM64 29h1v1h-1zM70 29h1v1h-1zM82 29h1v1h-1zM86 29h1v1h-1zM19 28h1v1h-1zM28 28h1v1h-1zM31 28h1v1h-1zM34 28h1v1h-1zM52 28h1v1h-1zM18 27h1v1h-1zM26 27h2v1h-2zM31 27h1v1h-1zM33 27h1v1h-1zM14 26h1v1h-1zM17 26h1v1h-1zM32 26h1v1h-1zM39 26h1v1h-1zM45 26h1v1h-1zM15 25h1v1h-1zM90 25h1v1h-1zM15 24h1v1h-1zM18 24h1v1h-1zM24 24h1v1h-1zM26 24h1v1h-1zM30 24h2v1h-2zM40 24h1v1h-1zM72 24h1v1h-1zM79 24h1v1h-1zM91 24h1v1h-1zM27 23h1v1h-1zM40 23h1v1h-1zM57 23h1v1h-1zM88 23h1v1h-1zM20 22h1v1h-1zM22 22h1v1h-1zM24 22h1v1h-1zM34 22h1v1h-1zM36 22h2v1h-2zM54 22h1v1h-1zM20 21h1v1h-1zM33 21h1v1h-1zM48 21h2v1h-2zM57 21h1v1h-1zM81 21h1v1h-1zM15 20h1v1h-1zM18 20h2v1h-2zM23 20h1v1h-1zM25 20h1v1h-1zM51 20h1v1h-1zM14 19h1v1h-1zM16 19h1v1h-1zM22 19h1v1h-1zM41 19h1v1h-1zM48 19h1v1h-1zM72 19h1v1h-1zM14 18h1v1h-1zM40 18h1v1h-1zM58 18h1v1h-1zM66 18h1v1h-1zM77 18h1v1h-1zM15 17h1v1h-1zM32 17h1v1h-1zM44 17h1v1h-1zM23 16h1v1h-1zM30 16h1v1h-1zM34 16h1v1h-1zM39 16h1v1h-1zM50 16h1v1h-1zM54 16h1v1h-1zM79 16h1v1h-1zM92 16h1v1h-1zM15 15h1v1h-1zM24 15h1v1h-1zM37 15h1v1h-1zM67 15h1v1h-1zM80 15h1v1h-1zM16 14h1v1h-1zM23 14h1v1h-1zM27 14h1v1h-1zM31 14h1v1h-1zM46 14h1v1h-1zM72 14h1v1h-1zM82 14h1v1h-1zM16 13h1v1h-1zM41 13h1v1h-1zM63 13h1v1h-1zM67 13h1v1h-1zM95 13h1v1h-1zM17 12h1v1h-1zM19 12h1v1h-1zM26 12h1v1h-1zM62 12h1v1h-1zM64 12h1v1h-1zM82 12h1v1h-1zM92 12h1v1h-1zM13 11h1v1h-1zM17 11h3v1h-3zM23 11h1v1h-1zM36 11h1v1h-1zM39 11h1v1h-1zM45 11h1v1h-1zM56 11h1v1h-1zM65 11h1v1h-1zM68 11h1v1h-1zM18 10h2v1h-2zM24 10h1v1h-1zM41 10h1v1h-1zM45 10h1v1h-1zM56 10h1v1h-1zM17 9h3v1h-3zM30 9h1v1h-1zM41 9h1v1h-1zM60 9h1v1h-1zM23 8h1v1h-1zM33 8h1v1h-1zM41 8h1v1h-1zM47 8h2v1h-2zM67 8h1v1h-1zM85 8h1v1h-1zM93 8h1v1h-1zM14 7h1v1h-1zM16 7h1v1h-1zM42 7h1v1h-1zM67 7h1v1h-1zM31 6h1v1h-1zM36 6h1v1h-1zM47 6h1v1h-1zM56 6h1v1h-1zM16 5h1v1h-1zM18 5h1v1h-1zM32 5h1v1h-1zM40 5h1v1h-1zM64 5h1v1h-1zM82 5h1v1h-1zM18 4h1v1h-1zM21 4h1v1h-1zM31 4h1v1h-1zM42 4h1v1h-1zM49 4h1v1h-1zM53 4h1v1h-1zM19 3h1v1h-1zM29 3h1v1h-1zM38 3h1v1h-1zM57 3h1v1h-1zM63 3h1v1h-1zM69 3h1v1h-1zM16 2h1v1h-1zM28 2h1v1h-1zM47 2h1v1h-1zM91 2h1v1h-1zM98 2h1v1h-1zM15 1h1v1h-1zM17 1h1v1h-1zM36 1h1v1h-1zM47 1h1v1h-1zM13 0h1v1h-1zM31 0h1v1h-1zM72 0h1v1h-1zM84 0h1v1h-1z"/><path fill="#443b84" d="M18 98h1v1h-1zM33 98h1v1h-1zM40 98h1v1h-1zM43 98h1v1h-1zM35 97h1v1h-1zM48 97h1v1h-1zM85 97h1v1h-1zM88 97h1v1h-1zM17 96h1v1h-1zM43 96h1v1h-1zM55 96h1v1h-1zM74 96h1v1h-1zM22 95h1v1h-1zM24 95h1v1h-1zM34 95h1v1h-1zM68 95h2v1h-2zM17 94h1v1h-1zM24 94h1v1h-1zM34 94h1v1h-1zM43 94h1v1h-1zM75 94h1v1h-1zM86 94h1v1h-1zM18 93h2v1h-2zM30 93h1v1h-1zM34 93h1v1h-1zM57 93h1v1h-1zM62 93h1v1h-1zM67 93h1v1h-1zM74 93h1v1h-1zM20 92h1v1h-1zM25 92h2v1h-2zM28 92h1v1h-1zM41 92h1v1h-1zM44 92h1v1h-1zM52 92h1v1h-1zM66 92h1v1h-1zM30 91h1v1h-1zM50 91h1v1h-1zM75 91h1v1h-1zM85 91h1v1h-1zM46 90h1v1h-1zM82 90h1v1h-1zM21 89h2v1h-2zM31 89h1v1h-1zM38 89h3v1h-3zM78 89h1v1h-1zM82 89h1v1h-1zM18 88h1v1h-1zM20 88h1v1h-1zM30 88h1v1h-1zM76 88h1v1h-1zM78 88h1v1h-1zM28 87h1v1h-1zM48 87h2v1h-2zM61 87h1v1h-1zM84 87h1v1h-1zM18 86h1v1h-1zM22 86h1v1h-1zM26 86h1v1h-1zM80 86h1v1h-1zM82 86h1v1h-1zM18 85h1v1h-1zM22 85h1v1h-1zM25 85h1v1h-1zM29 85h2v1h-2zM33 85h1v1h-1zM42 85h1v1h-1zM47 85h1v1h-1zM51 85h1v1h-1zM65 85h1v1h-1zM76 85h1v1h-1zM19 84h1v1h-1zM43 84h1v1h-1zM49 84h1v1h-1zM52 84h1v1h-1zM72 84h1v1h-1zM26 83h1v1h-1zM30 83h2v1h-2zM33 83h1v1h-1zM49 83h1v1h-1zM77 83h1v1h-1zM91 83h1v1h-1zM19 82h1v1h-1zM26 82h2v1h-2zM29 82h1v1h-1zM36 82h1v1h-1zM61 82h1v1h-1zM21 81h1v1h-1zM36 81h1v1h-1zM40 81h1v1h-1zM61 81h1v1h-1zM20 80h1v1h-1zM24 80h1v1h-1zM26 80h1v1h-1zM34 80h2v1h-2zM44 80h1v1h-1zM59 80h1v1h-1zM82 80h1v1h-1zM20 79h2v1h-2zM24 79h1v1h-1zM26 79h1v1h-1zM42 79h1v1h-1zM50 79h1v1h-1zM53 79h1v1h-1zM73 79h1v1h-1zM17 78h1v1h-1zM21 78h3v1h-3zM35 78h1v1h-1zM55 78h1v1h-1zM24 77h1v1h-1zM35 77h2v1h-2zM84 77h1v1h-1zM19 76h2v1h-2zM23 76h1v1h-1zM30 76h1v1h-1zM34 76h1v1h-1zM48 76h1v1h-1zM82 76h2v1h-2zM28 75h1v1h-1zM55 75h1v1h-1zM60 75h1v1h-1zM83 75h1v1h-1zM17 74h1v1h-1zM37 74h1v1h-1zM49 74h1v1h-1zM63 74h1v1h-1zM65 74h1v1h-1zM18 73h1v1h-1zM28 73h1v1h-1zM48 73h1v1h-1zM87 73h1v1h-1zM17 72h3v1h-3zM29 72h1v1h-1zM34 72h1v1h-1zM59 72h1v1h-1zM91 72h1v1h-1zM17 71h1v1h-1zM20 71h1v1h-1zM29 71h1v1h-1zM31 71h1v1h-1zM35 71h1v1h-1zM47 71h1v1h-1zM57 71h1v1h-1zM25 70h1v1h-1zM35 70h2v1h-2zM38 70h2v1h-2zM30 69h1v1h-1zM44 69h1v1h-1zM48 69h1v1h-1zM50 69h1v1h-1zM67 69h1v1h-1zM16 68h1v1h-1zM18 68h1v1h-1zM29 68h1v1h-1zM43 68h2v1h-2zM52 68h1v1h-1zM17 67h1v1h-1zM27 67h1v1h-1zM30 67h2v1h-2zM65 67h1v1h-1zM72 67h1v1h-1zM92 67h1v1h-1zM16 66h1v1h-1zM22 66h1v1h-1zM28 66h1v1h-1zM31 66h1v1h-1zM47 66h2v1h-2zM59 66h1v1h-1zM17 65h1v1h-1zM23 65h2v1h-2zM33 65h1v1h-1zM40 65h1v1h-1zM72 65h1v1h-1zM77 65h1v1h-1zM96 65h1v1h-1zM23 64h2v1h-2zM30 64h1v1h-1zM38 64h1v1h-1zM66 64h1v1h-1zM75 64h1v1h-1zM79 64h1v1h-1zM23 63h2v1h-2zM17 62h1v1h-1zM19 62h1v1h-1zM22 62h1v1h-1zM34 62h1v1h-1zM54 62h1v1h-1zM63 62h1v1h-1zM67 62h1v1h-1zM22 61h1v1h-1zM24 61h1v1h-1zM27 61h1v1h-1zM66 61h1v1h-1zM24 60h1v1h-1zM60 60h1v1h-1zM65 60h1v1h-1zM74 60h1v1h-1zM81 60h1v1h-1zM16 59h1v1h-1zM39 59h1v1h-1zM47 59h1v1h-1zM68 59h1v1h-1zM86 59h1v1h-1zM23 58h1v1h-1zM31 58h1v1h-1zM74 58h3v1h-3zM86 58h1v1h-1zM27 57h2v1h-2zM37 57h1v1h-1zM75 57h1v1h-1zM77 57h1v1h-1zM94 57h1v1h-1zM21 56h1v1h-1zM37 56h1v1h-1zM40 56h1v1h-1zM64 56h1v1h-1zM80 56h1v1h-1zM95 56h1v1h-1zM19 55h2v1h-2zM35 55h1v1h-1zM93 55h1v1h-1zM18 54h1v1h-1zM32 54h1v1h-1zM56 54h1v1h-1zM64 54h1v1h-1zM71 54h1v1h-1zM95 54h1v1h-1zM97 54h1v1h-1zM19 53h1v1h-1zM21 53h1v1h-1zM28 53h1v1h-1zM67 53h1v1h-1zM20 52h1v1h-1zM32 52h1v1h-1zM60 52h1v1h-1zM85 52h2v1h-2zM29 51h1v1h-1zM35 51h1v1h-1zM37 51h1v1h-1zM42 51h1v1h-1zM55 51h1v1h-1zM72 51h2v1h-2zM79 51h1v1h-1zM30 50h1v1h-1zM33 50h1v1h-1zM39 50h1v1h-1zM51 50h1v1h-1zM59 50h1v1h-1zM66 50h2v1h-2zM86 50h1v1h-1zM89 50h1v1h-1zM94 50h1v1h-1zM17 49h2v1h-2zM71 49h1v1h-1zM18 48h2v1h-2zM62 48h1v1h-1zM66 48h1v1h-1zM82 48h1v1h-1zM19 47h1v1h-1zM25 47h1v1h-1zM37 47h1v1h-1zM82 47h1v1h-1zM19 46h1v1h-1zM52 46h1v1h-1zM56 46h2v1h-2zM61 46h1v1h-1zM84 46h1v1h-1zM92 46h1v1h-1zM24 45h1v1h-1zM27 45h1v1h-1zM35 45h1v1h-1zM42 45h1v1h-1zM44 45h1v1h-1zM62 45h1v1h-1zM33 44h1v1h-1zM58 44h1v1h-1zM92 44h1v1h-1zM21 43h1v1h-1zM23 43h1v1h-1zM31 43h2v1h-2zM44 43h1v1h-1zM53 43h1v1h-1zM69 43h1v1h-1zM81 43h1v1h-1zM91 43h1v1h-1zM98 43h1v1h-1zM25 42h1v1h-1zM32 42h1v1h-1zM51 42h1v1h-1zM57 42h1v1h-1zM92 42h1v1h-1zM23 41h1v1h-1zM25 41h1v1h-1zM31 41h2v1h-2zM46 41h1v1h-1zM49 41h1v1h-1zM23 40h1v1h-1zM73 40h1v1h-1zM23 39h1v1h-1zM26 39h1v1h-1zM35 39h1v1h-1zM53 39h1v1h-1zM59 39h1v1h-1zM71 39h1v1h-1zM18 38h1v1h-1zM27 38h1v1h-1zM50 38h1v1h-1zM63 38h1v1h-1zM18 37h1v1h-1zM20 37h1v1h-1zM35 37h1v1h-1zM37 37h1v1h-1zM45 37h1v1h-1zM65 37h1v1h-1zM68 37h1v1h-1zM86 37h1v1h-1zM22 36h1v1h-1zM28 36h1v1h-1zM42 36h1v1h-1zM54 36h1v1h-1zM70 36h1v1h-1zM72 36h1v1h-1zM91 36h1v1h-1zM94 36h1v1h-1zM19 35h1v1h-1zM27 35h2v1h-2zM38 35h1v1h-1zM52 35h1v1h-1zM79 35h1v1h-1zM94 35h1v1h-1zM16 34h1v1h-1zM23 34h1v1h-1zM30 34h1v1h-1zM47 34h1v1h-1zM52 34h1v1h-1zM92 34h1v1h-1zM18 33h1v1h-1zM21 33h1v1h-1zM27 33h1v1h-1zM30 33h1v1h-1zM42 33h1v1h-1zM48 33h1v1h-1zM54 33h1v1h-1zM57 33h1v1h-1zM72 33h1v1h-1zM95 33h1v1h-1zM17 32h1v1h-1zM35 32h1v1h-1zM40 32h1v1h-1zM42 32h1v1h-1zM46 32h1v1h-1zM69 32h1v1h-1zM81 32h1v1h-1zM86 32h1v1h-1zM33 31h1v1h-1zM43 31h1v1h-1zM64 31h2v1h-2zM72 31h1v1h-1zM21 30h1v1h-1zM28 30h1v1h-1zM31 30h1v1h-1zM34 30h1v1h-1zM61 30h1v1h-1zM78 30h1v1h-1zM81 30h1v1h-1zM38 29h1v1h-1zM47 29h1v1h-1zM50 29h1v1h-1zM76 29h1v1h-1zM88 29h1v1h-1zM93 29h1v1h-1zM18 28h1v1h-1zM74 28h1v1h-1zM88 28h1v1h-1zM91 28h1v1h-1zM20 27h1v1h-1zM22 27h1v1h-1zM37 27h1v1h-1zM60 27h1v1h-1zM27 26h1v1h-1zM38 26h1v1h-1zM42 26h1v1h-1zM52 26h1v1h-1zM63 26h1v1h-1zM81 26h1v1h-1zM20 25h1v1h-1zM22 25h1v1h-1zM24 25h1v1h-1zM29 25h1v1h-1zM36 25h1v1h-1zM47 25h2v1h-2zM33 24h1v1h-1zM35 24h1v1h-1zM61 24h1v1h-1zM23 23h1v1h-1zM26 23h1v1h-1zM29 23h1v1h-1zM35 23h2v1h-2zM48 23h1v1h-1zM60 23h1v1h-1zM26 22h1v1h-1zM28 22h1v1h-1zM60 22h1v1h-1zM62 22h1v1h-1zM70 22h1v1h-1zM84 22h1v1h-1zM91 22h1v1h-1zM19 21h1v1h-1zM23 21h1v1h-1zM83 21h1v1h-1zM88 21h1v1h-1zM30 20h1v1h-1zM47 20h1v1h-1zM95 20h1v1h-1zM18 19h1v1h-1zM28 19h1v1h-1zM36 19h1v1h-1zM63 19h1v1h-1zM84 19h1v1h-1zM19 18h1v1h-1zM26 18h1v1h-1zM36 18h1v1h-1zM51 18h1v1h-1zM62 18h1v1h-1zM65 18h1v1h-1zM73 18h1v1h-1zM55 17h1v1h-1zM91 17h1v1h-1zM19 16h1v1h-1zM75 16h1v1h-1zM94 16h1v1h-1zM32 15h2v1h-2zM28 14h1v1h-1zM30 14h1v1h-1zM53 14h1v1h-1zM26 13h1v1h-1zM45 13h1v1h-1zM49 13h1v1h-1zM62 13h1v1h-1zM21 12h1v1h-1zM32 12h1v1h-1zM36 12h1v1h-1zM38 12h1v1h-1zM85 12h1v1h-1zM20 11h1v1h-1zM26 11h1v1h-1zM53 11h1v1h-1zM72 11h1v1h-1zM47 10h1v1h-1zM55 10h1v1h-1zM69 10h1v1h-1zM72 10h1v1h-1zM74 10h1v1h-1zM79 10h1v1h-1zM20 9h1v1h-1zM23 9h1v1h-1zM39 9h1v1h-1zM42 9h1v1h-1zM62 9h1v1h-1zM87 9h1v1h-1zM97 9h1v1h-1zM26 8h1v1h-1zM46 8h1v1h-1zM58 8h1v1h-1zM63 8h1v1h-1zM23 7h1v1h-1zM25 7h2v1h-2zM29 7h1v1h-1zM38 7h1v1h-1zM43 7h1v1h-1zM79 7h1v1h-1zM21 6h1v1h-1zM58 6h1v1h-1zM87 6h1v1h-1zM24 5h1v1h-1zM26 5h1v1h-1zM37 5h1v1h-1zM69 5h1v1h-1zM71 5h1v1h-1zM19 4h1v1h-1zM28 4h1v1h-1zM48 4h1v1h-1zM55 4h1v1h-1zM66 4h1v1h-1zM98 4h1v1h-1zM32 3h1v1h-1zM46 3h1v1h-1zM91 3h1v1h-1zM30 2h1v1h-1zM44 2h1v1h-1zM51 2h1v1h-1zM65 2h1v1h-1zM19 1h1v1h-1zM29 1h1v1h-1zM31 1h2v1h-2zM38 1h1v1h-1zM53 1h1v1h-1zM23 0h1v1h-1zM32 0h1v1h-1zM53 0h1v1h-1z"/><path fill="#404588" d="M21 98h1v1h-1zM27 98h2v1h-2zM44 98h1v1h-1zM46 98h1v1h-1zM50 98h1v1h-1zM63 98h1v1h-1zM24 97h2v1h-2zM56 97h1v1h-1zM70 97h2v1h-2zM30 96h1v1h-1zM32 96h1v1h-1zM39 96h1v1h-1zM61 96h1v1h-1zM26 95h1v1h-1zM44 95h1v1h-1zM75 95h1v1h-1zM54 94h1v1h-1zM56 94h1v1h-1zM21 93h2v1h-2zM31 93h2v1h-2zM35 93h1v1h-1zM38 93h1v1h-1zM97 93h1v1h-1zM21 92h1v1h-1zM23 92h1v1h-1zM30 92h1v1h-1zM92 92h1v1h-1zM20 91h1v1h-1zM23 91h1v1h-1zM28 91h1v1h-1zM31 91h1v1h-1zM34 91h2v1h-2zM42 91h1v1h-1zM96 91h1v1h-1zM25 90h1v1h-1zM31 90h1v1h-1zM44 90h1v1h-1zM62 90h2v1h-2zM70 90h1v1h-1zM76 90h1v1h-1zM25 89h1v1h-1zM56 89h1v1h-1zM83 89h1v1h-1zM22 88h1v1h-1zM25 88h1v1h-1zM35 88h2v1h-2zM56 88h1v1h-1zM61 88h1v1h-1zM64 88h1v1h-1zM72 88h1v1h-1zM25 87h1v1h-1zM32 87h1v1h-1zM83 87h1v1h-1zM27 86h1v1h-1zM34 86h1v1h-1zM69 86h1v1h-1zM83 86h1v1h-1zM94 86h1v1h-1zM20 85h1v1h-1zM23 85h1v1h-1zM28 85h1v1h-1zM34 85h1v1h-1zM73 85h1v1h-1zM23 84h1v1h-1zM31 84h1v1h-1zM39 84h1v1h-1zM66 84h1v1h-1zM28 83h1v1h-1zM32 83h1v1h-1zM36 83h1v1h-1zM30 82h1v1h-1zM33 82h1v1h-1zM29 81h1v1h-1zM34 81h1v1h-1zM48 81h1v1h-1zM50 81h1v1h-1zM58 81h1v1h-1zM23 80h1v1h-1zM41 80h1v1h-1zM22 79h1v1h-1zM30 79h1v1h-1zM41 79h1v1h-1zM47 79h1v1h-1zM61 79h1v1h-1zM72 79h1v1h-1zM85 79h1v1h-1zM26 78h1v1h-1zM31 78h1v1h-1zM42 78h1v1h-1zM60 78h1v1h-1zM98 78h1v1h-1zM27 77h1v1h-1zM29 77h1v1h-1zM32 77h2v1h-2zM44 77h1v1h-1zM46 77h1v1h-1zM52 77h1v1h-1zM21 76h1v1h-1zM25 76h1v1h-1zM33 76h1v1h-1zM52 76h1v1h-1zM79 76h1v1h-1zM19 75h1v1h-1zM34 75h1v1h-1zM47 75h1v1h-1zM58 74h1v1h-1zM21 73h1v1h-1zM34 73h1v1h-1zM39 73h1v1h-1zM42 73h1v1h-1zM61 73h1v1h-1zM27 72h1v1h-1zM40 72h1v1h-1zM94 72h1v1h-1zM41 71h1v1h-1zM77 71h1v1h-1zM43 70h1v1h-1zM57 70h1v1h-1zM21 69h1v1h-1zM27 69h1v1h-1zM32 69h1v1h-1zM38 69h1v1h-1zM75 69h1v1h-1zM22 68h1v1h-1zM25 68h1v1h-1zM30 68h2v1h-2zM34 68h1v1h-1zM91 68h1v1h-1zM28 67h1v1h-1zM32 67h1v1h-1zM58 67h1v1h-1zM76 67h1v1h-1zM86 67h1v1h-1zM21 66h1v1h-1zM25 66h1v1h-1zM29 66h2v1h-2zM34 66h1v1h-1zM50 66h2v1h-2zM31 65h1v1h-1zM39 65h1v1h-1zM50 65h1v1h-1zM56 65h1v1h-1zM73 65h1v1h-1zM21 64h1v1h-1zM27 64h1v1h-1zM35 64h1v1h-1zM53 64h1v1h-1zM84 64h1v1h-1zM33 63h1v1h-1zM35 63h1v1h-1zM78 63h1v1h-1zM91 63h1v1h-1zM32 62h1v1h-1zM39 62h1v1h-1zM47 62h1v1h-1zM73 62h1v1h-1zM33 61h1v1h-1zM35 61h1v1h-1zM40 61h1v1h-1zM45 61h1v1h-1zM55 61h1v1h-1zM57 61h1v1h-1zM68 61h1v1h-1zM23 60h1v1h-1zM25 60h1v1h-1zM37 60h1v1h-1zM26 59h2v1h-2zM29 58h1v1h-1zM47 58h1v1h-1zM45 57h1v1h-1zM51 57h1v1h-1zM56 57h1v1h-1zM62 57h1v1h-1zM90 57h1v1h-1zM27 56h1v1h-1zM32 56h1v1h-1zM38 56h1v1h-1zM43 56h1v1h-1zM60 56h1v1h-1zM73 56h1v1h-1zM78 56h1v1h-1zM22 55h1v1h-1zM24 55h1v1h-1zM42 55h3v1h-3zM49 55h2v1h-2zM54 55h1v1h-1zM57 55h1v1h-1zM68 55h1v1h-1zM79 55h1v1h-1zM26 54h2v1h-2zM31 54h1v1h-1zM34 54h1v1h-1zM41 54h1v1h-1zM73 54h1v1h-1zM83 54h1v1h-1zM46 53h2v1h-2zM60 53h1v1h-1zM63 53h1v1h-1zM95 53h1v1h-1zM54 52h1v1h-1zM56 52h1v1h-1zM59 52h1v1h-1zM72 52h1v1h-1zM77 52h1v1h-1zM21 51h1v1h-1zM41 51h1v1h-1zM52 51h1v1h-1zM74 51h1v1h-1zM31 50h1v1h-1zM53 50h1v1h-1zM85 50h1v1h-1zM21 49h2v1h-2zM25 49h1v1h-1zM36 49h1v1h-1zM39 49h1v1h-1zM42 49h1v1h-1zM80 49h1v1h-1zM26 48h1v1h-1zM32 48h1v1h-1zM50 48h1v1h-1zM57 48h1v1h-1zM94 48h1v1h-1zM32 47h1v1h-1zM34 47h1v1h-1zM36 47h1v1h-1zM60 47h1v1h-1zM23 46h1v1h-1zM44 46h1v1h-1zM95 46h1v1h-1zM30 45h1v1h-1zM48 45h1v1h-1zM88 45h1v1h-1zM21 44h1v1h-1zM24 44h1v1h-1zM29 44h1v1h-1zM42 44h1v1h-1zM44 44h1v1h-1zM48 44h1v1h-1zM67 44h1v1h-1zM73 44h1v1h-1zM85 44h1v1h-1zM22 43h1v1h-1zM24 43h1v1h-1zM26 43h1v1h-1zM33 43h1v1h-1zM60 43h1v1h-1zM94 43h1v1h-1zM97 43h1v1h-1zM33 42h1v1h-1zM47 42h1v1h-1zM62 42h1v1h-1zM80 42h1v1h-1zM89 42h1v1h-1zM27 41h1v1h-1zM36 41h1v1h-1zM43 41h1v1h-1zM68 41h1v1h-1zM27 40h1v1h-1zM35 40h1v1h-1zM41 40h1v1h-1zM60 40h1v1h-1zM67 40h1v1h-1zM79 40h1v1h-1zM21 39h1v1h-1zM24 39h1v1h-1zM30 39h1v1h-1zM34 39h1v1h-1zM39 39h1v1h-1zM47 39h1v1h-1zM63 39h1v1h-1zM90 39h2v1h-2zM97 39h1v1h-1zM22 38h1v1h-1zM70 38h1v1h-1zM41 37h1v1h-1zM52 37h1v1h-1zM67 37h1v1h-1zM23 36h2v1h-2zM27 36h1v1h-1zM59 36h1v1h-1zM65 36h1v1h-1zM71 36h1v1h-1zM20 35h1v1h-1zM26 35h1v1h-1zM32 35h1v1h-1zM36 35h1v1h-1zM41 35h1v1h-1zM49 35h1v1h-1zM69 35h1v1h-1zM92 35h1v1h-1zM24 34h1v1h-1zM50 34h1v1h-1zM63 34h1v1h-1zM83 34h1v1h-1zM23 33h1v1h-1zM26 33h1v1h-1zM37 33h1v1h-1zM74 33h1v1h-1zM79 33h1v1h-1zM81 33h1v1h-1zM21 32h1v1h-1zM25 32h1v1h-1zM33 32h1v1h-1zM44 32h1v1h-1zM48 32h1v1h-1zM92 32h1v1h-1zM26 31h1v1h-1zM73 31h1v1h-1zM90 31h1v1h-1zM97 31h1v1h-1zM39 30h1v1h-1zM56 30h1v1h-1zM65 30h1v1h-1zM25 29h1v1h-1zM21 28h2v1h-2zM32 28h1v1h-1zM44 28h1v1h-1zM59 28h1v1h-1zM66 28h1v1h-1zM21 27h1v1h-1zM23 27h1v1h-1zM28 27h1v1h-1zM96 27h1v1h-1zM23 26h1v1h-1zM48 26h1v1h-1zM55 26h1v1h-1zM26 25h1v1h-1zM32 25h1v1h-1zM51 25h1v1h-1zM71 25h1v1h-1zM78 25h1v1h-1zM81 25h1v1h-1zM27 24h1v1h-1zM29 24h1v1h-1zM34 24h1v1h-1zM36 24h1v1h-1zM44 24h1v1h-1zM46 24h1v1h-1zM65 24h1v1h-1zM24 23h1v1h-1zM28 23h1v1h-1zM44 23h1v1h-1zM70 23h1v1h-1zM85 23h1v1h-1zM29 22h1v1h-1zM47 22h1v1h-1zM21 21h1v1h-1zM32 21h1v1h-1zM37 21h1v1h-1zM46 21h1v1h-1zM55 21h1v1h-1zM61 21h1v1h-1zM68 21h1v1h-1zM89 21h1v1h-1zM21 20h1v1h-1zM24 20h1v1h-1zM40 20h1v1h-1zM60 20h1v1h-1zM64 20h2v1h-2zM83 20h1v1h-1zM21 19h1v1h-1zM30 19h2v1h-2zM35 19h1v1h-1zM43 19h1v1h-1zM46 19h1v1h-1zM51 19h1v1h-1zM56 19h1v1h-1zM80 19h1v1h-1zM89 19h1v1h-1zM23 18h1v1h-1zM32 18h1v1h-1zM85 18h1v1h-1zM26 17h1v1h-1zM33 17h1v1h-1zM37 17h1v1h-1zM88 17h1v1h-1zM20 16h2v1h-2zM25 16h1v1h-1zM28 16h2v1h-2zM37 16h1v1h-1zM44 16h1v1h-1zM51 16h1v1h-1zM28 15h1v1h-1zM30 15h1v1h-1zM35 15h1v1h-1zM41 15h1v1h-1zM61 15h1v1h-1zM66 15h1v1h-1zM77 15h1v1h-1zM89 15h1v1h-1zM93 15h1v1h-1zM26 14h1v1h-1zM36 14h1v1h-1zM86 14h1v1h-1zM90 14h1v1h-1zM20 13h2v1h-2zM32 13h1v1h-1zM65 13h1v1h-1zM27 12h1v1h-1zM30 12h1v1h-1zM35 12h1v1h-1zM42 12h1v1h-1zM69 12h1v1h-1zM93 12h1v1h-1zM33 11h1v1h-1zM48 11h1v1h-1zM58 11h1v1h-1zM83 11h1v1h-1zM22 10h1v1h-1zM26 10h1v1h-1zM31 10h1v1h-1zM38 10h1v1h-1zM64 10h1v1h-1zM98 10h1v1h-1zM53 9h1v1h-1zM72 9h1v1h-1zM27 8h1v1h-1zM54 8h2v1h-2zM60 8h1v1h-1zM69 8h1v1h-1zM81 8h1v1h-1zM27 7h2v1h-2zM39 7h1v1h-1zM68 7h1v1h-1zM75 7h1v1h-1zM82 7h1v1h-1zM26 6h1v1h-1zM61 6h1v1h-1zM72 6h2v1h-2zM93 6h1v1h-1zM31 5h1v1h-1zM33 5h1v1h-1zM38 5h2v1h-2zM42 5h1v1h-1zM48 5h1v1h-1zM52 5h1v1h-1zM72 5h1v1h-1zM39 4h1v1h-1zM71 4h1v1h-1zM73 4h1v1h-1zM39 3h1v1h-1zM48 3h1v1h-1zM60 3h1v1h-1zM19 2h1v1h-1zM23 2h1v1h-1zM35 2h1v1h-1zM66 2h1v1h-1zM90 2h1v1h-1zM93 2h1v1h-1zM21 1h2v1h-2zM34 1h1v1h-1zM45 1h1v1h-1zM72 1h1v1h-1zM29 0h1v1h-1zM33 0h1v1h-1zM81 0h1v1h-1zM83 0h1v1h-1z"/><path fill="#3d4e8a" d="M24 98h1v1h-1zM38 98h1v1h-1zM51 98h1v1h-1zM54 98h1v1h-1zM72 98h1v1h-1zM79 98h1v1h-1zM28 97h1v1h-1zM41 97h1v1h-1zM54 97h1v1h-1zM93 97h1v1h-1zM26 96h1v1h-1zM37 96h1v1h-1zM51 96h1v1h-1zM66 96h2v1h-2zM69 96h1v1h-1zM72 96h1v1h-1zM78 96h1v1h-1zM78 95h1v1h-1zM84 95h1v1h-1zM25 94h2v1h-2zM36 94h1v1h-1zM52 94h1v1h-1zM64 94h1v1h-1zM87 94h1v1h-1zM58 93h1v1h-1zM75 93h1v1h-1zM78 93h1v1h-1zM91 93h1v1h-1zM35 92h1v1h-1zM37 92h1v1h-1zM93 92h1v1h-1zM26 91h1v1h-1zM43 91h1v1h-1zM60 91h1v1h-1zM68 91h1v1h-1zM74 91h1v1h-1zM76 91h1v1h-1zM24 90h1v1h-1zM27 90h1v1h-1zM37 90h1v1h-1zM41 90h1v1h-1zM49 90h1v1h-1zM94 90h1v1h-1zM34 89h1v1h-1zM74 89h1v1h-1zM26 88h1v1h-1zM38 88h1v1h-1zM52 88h1v1h-1zM55 88h1v1h-1zM65 88h1v1h-1zM29 87h1v1h-1zM36 87h1v1h-1zM41 87h1v1h-1zM57 87h1v1h-1zM29 86h2v1h-2zM32 86h2v1h-2zM45 86h1v1h-1zM74 86h1v1h-1zM84 86h1v1h-1zM27 85h1v1h-1zM36 85h1v1h-1zM50 85h1v1h-1zM34 84h1v1h-1zM74 84h1v1h-1zM80 84h1v1h-1zM53 83h1v1h-1zM69 83h1v1h-1zM79 83h1v1h-1zM96 83h1v1h-1zM25 82h1v1h-1zM39 82h1v1h-1zM42 82h1v1h-1zM58 82h2v1h-2zM62 82h1v1h-1zM64 82h1v1h-1zM72 82h1v1h-1zM25 81h1v1h-1zM30 81h1v1h-1zM33 81h1v1h-1zM41 81h1v1h-1zM75 81h1v1h-1zM92 81h1v1h-1zM25 80h1v1h-1zM28 80h1v1h-1zM46 80h2v1h-2zM76 80h1v1h-1zM83 80h1v1h-1zM40 79h1v1h-1zM44 79h1v1h-1zM68 79h2v1h-2zM76 79h2v1h-2zM80 79h1v1h-1zM29 78h1v1h-1zM38 78h1v1h-1zM43 78h1v1h-1zM89 78h1v1h-1zM39 77h1v1h-1zM47 77h1v1h-1zM64 77h1v1h-1zM26 76h1v1h-1zM38 76h1v1h-1zM42 76h1v1h-1zM46 76h1v1h-1zM49 76h1v1h-1zM61 76h1v1h-1zM93 76h1v1h-1zM43 75h1v1h-1zM53 75h2v1h-2zM69 75h1v1h-1zM79 75h1v1h-1zM96 75h1v1h-1zM34 74h1v1h-1zM59 74h1v1h-1zM81 74h1v1h-1zM84 74h1v1h-1zM87 74h1v1h-1zM25 73h1v1h-1zM27 73h1v1h-1zM30 73h1v1h-1zM36 73h1v1h-1zM51 73h1v1h-1zM36 72h1v1h-1zM39 72h1v1h-1zM61 72h1v1h-1zM97 72h1v1h-1zM23 71h1v1h-1zM34 71h1v1h-1zM46 71h1v1h-1zM76 71h1v1h-1zM29 70h1v1h-1zM59 70h1v1h-1zM92 70h1v1h-1zM24 69h1v1h-1zM34 69h1v1h-1zM37 69h1v1h-1zM56 69h1v1h-1zM68 69h1v1h-1zM94 69h1v1h-1zM41 68h1v1h-1zM46 68h1v1h-1zM29 67h1v1h-1zM33 67h1v1h-1zM78 67h1v1h-1zM94 67h1v1h-1zM27 66h1v1h-1zM38 66h1v1h-1zM62 66h1v1h-1zM88 66h1v1h-1zM34 65h1v1h-1zM37 65h1v1h-1zM46 65h1v1h-1zM67 65h1v1h-1zM26 64h1v1h-1zM40 64h1v1h-1zM55 64h1v1h-1zM57 64h1v1h-1zM69 64h1v1h-1zM94 64h1v1h-1zM27 63h1v1h-1zM55 63h1v1h-1zM90 63h1v1h-1zM25 62h1v1h-1zM45 62h1v1h-1zM56 62h1v1h-1zM94 62h1v1h-1zM82 61h1v1h-1zM91 61h1v1h-1zM40 60h1v1h-1zM42 60h1v1h-1zM45 60h1v1h-1zM48 60h1v1h-1zM25 59h1v1h-1zM46 59h1v1h-1zM71 59h1v1h-1zM78 59h1v1h-1zM82 59h1v1h-1zM30 58h1v1h-1zM32 58h1v1h-1zM55 58h1v1h-1zM87 58h1v1h-1zM25 57h1v1h-1zM29 57h1v1h-1zM32 57h1v1h-1zM47 57h2v1h-2zM55 57h1v1h-1zM83 57h1v1h-1zM91 57h1v1h-1zM24 56h1v1h-1zM46 56h1v1h-1zM59 56h1v1h-1zM69 56h1v1h-1zM82 56h1v1h-1zM29 55h1v1h-1zM45 55h1v1h-1zM61 55h1v1h-1zM63 55h1v1h-1zM90 55h2v1h-2zM37 54h1v1h-1zM42 54h1v1h-1zM54 54h1v1h-1zM77 54h1v1h-1zM25 53h3v1h-3zM54 53h1v1h-1zM88 53h1v1h-1zM28 52h1v1h-1zM33 52h3v1h-3zM62 52h1v1h-1zM71 52h1v1h-1zM34 51h1v1h-1zM36 51h1v1h-1zM44 51h1v1h-1zM28 50h2v1h-2zM37 50h1v1h-1zM41 50h1v1h-1zM49 50h1v1h-1zM76 50h1v1h-1zM32 49h1v1h-1zM52 49h1v1h-1zM55 49h1v1h-1zM57 49h1v1h-1zM97 49h1v1h-1zM43 48h1v1h-1zM53 48h1v1h-1zM70 48h1v1h-1zM27 47h1v1h-1zM30 47h1v1h-1zM46 47h1v1h-1zM98 47h1v1h-1zM30 46h1v1h-1zM39 46h1v1h-1zM50 46h1v1h-1zM66 46h1v1h-1zM71 46h1v1h-1zM98 46h1v1h-1zM28 45h1v1h-1zM49 45h1v1h-1zM60 45h1v1h-1zM73 45h1v1h-1zM26 44h1v1h-1zM55 44h1v1h-1zM60 44h1v1h-1zM89 44h1v1h-1zM28 43h1v1h-1zM62 43h1v1h-1zM27 42h1v1h-1zM48 42h1v1h-1zM50 42h1v1h-1zM68 42h1v1h-1zM97 42h1v1h-1zM30 41h1v1h-1zM44 41h1v1h-1zM94 41h1v1h-1zM30 40h1v1h-1zM49 40h1v1h-1zM59 40h1v1h-1zM64 40h1v1h-1zM71 40h1v1h-1zM31 39h1v1h-1zM28 38h1v1h-1zM33 38h2v1h-2zM45 38h1v1h-1zM48 38h1v1h-1zM69 38h1v1h-1zM22 37h1v1h-1zM47 37h1v1h-1zM63 37h1v1h-1zM76 37h1v1h-1zM25 36h1v1h-1zM62 36h1v1h-1zM30 35h1v1h-1zM85 35h1v1h-1zM31 34h1v1h-1zM43 34h2v1h-2zM66 34h1v1h-1zM68 34h1v1h-1zM94 34h1v1h-1zM29 33h1v1h-1zM31 33h1v1h-1zM78 33h1v1h-1zM83 33h1v1h-1zM90 33h1v1h-1zM97 33h1v1h-1zM23 32h1v1h-1zM38 32h1v1h-1zM47 32h1v1h-1zM58 32h1v1h-1zM84 32h1v1h-1zM22 31h1v1h-1zM25 31h1v1h-1zM28 31h1v1h-1zM79 31h1v1h-1zM30 30h1v1h-1zM33 30h1v1h-1zM38 30h1v1h-1zM90 30h1v1h-1zM29 29h1v1h-1zM31 29h2v1h-2zM45 29h1v1h-1zM49 29h1v1h-1zM65 29h1v1h-1zM25 28h1v1h-1zM38 28h1v1h-1zM50 28h1v1h-1zM76 28h1v1h-1zM98 28h1v1h-1zM35 27h2v1h-2zM22 26h1v1h-1zM26 26h1v1h-1zM37 26h1v1h-1zM41 26h1v1h-1zM43 26h2v1h-2zM53 26h1v1h-1zM58 26h1v1h-1zM73 26h1v1h-1zM25 25h1v1h-1zM28 25h1v1h-1zM33 25h1v1h-1zM45 25h1v1h-1zM56 25h1v1h-1zM61 25h1v1h-1zM96 25h1v1h-1zM28 24h1v1h-1zM48 24h1v1h-1zM92 24h1v1h-1zM30 23h1v1h-1zM55 23h1v1h-1zM58 23h1v1h-1zM63 23h1v1h-1zM71 23h2v1h-2zM25 22h1v1h-1zM67 22h1v1h-1zM69 22h1v1h-1zM72 22h1v1h-1zM83 22h1v1h-1zM89 22h1v1h-1zM30 21h1v1h-1zM41 21h1v1h-1zM43 21h1v1h-1zM53 21h1v1h-1zM59 21h1v1h-1zM80 20h1v1h-1zM82 20h1v1h-1zM87 20h1v1h-1zM24 19h1v1h-1zM26 19h1v1h-1zM49 19h1v1h-1zM60 19h1v1h-1zM75 19h1v1h-1zM31 18h1v1h-1zM37 18h1v1h-1zM39 18h1v1h-1zM49 18h1v1h-1zM59 18h1v1h-1zM89 18h1v1h-1zM31 17h1v1h-1zM51 17h1v1h-1zM27 16h1v1h-1zM67 16h1v1h-1zM85 16h1v1h-1zM88 16h1v1h-1zM25 15h1v1h-1zM60 15h1v1h-1zM35 14h1v1h-1zM42 14h1v1h-1zM85 14h1v1h-1zM87 14h1v1h-1zM91 14h1v1h-1zM24 13h1v1h-1zM27 13h1v1h-1zM37 13h1v1h-1zM46 13h1v1h-1zM58 13h1v1h-1zM88 13h1v1h-1zM47 12h1v1h-1zM50 12h1v1h-1zM91 12h1v1h-1zM24 11h1v1h-1zM32 11h1v1h-1zM50 11h1v1h-1zM78 11h2v1h-2zM90 11h1v1h-1zM89 10h1v1h-1zM27 9h1v1h-1zM84 9h1v1h-1zM44 8h1v1h-1zM56 8h1v1h-1zM73 8h1v1h-1zM76 8h1v1h-1zM30 7h1v1h-1zM41 7h1v1h-1zM52 7h1v1h-1zM71 7h1v1h-1zM92 7h1v1h-1zM57 6h1v1h-1zM78 6h1v1h-1zM90 6h1v1h-1zM41 5h1v1h-1zM89 5h1v1h-1zM96 5h1v1h-1zM22 4h1v1h-1zM26 4h1v1h-1zM32 4h1v1h-1zM40 4h1v1h-1zM46 4h1v1h-1zM57 4h1v1h-1zM64 4h1v1h-1zM77 4h1v1h-1zM79 4h1v1h-1zM92 4h1v1h-1zM96 4h1v1h-1zM25 3h1v1h-1zM30 3h1v1h-1zM75 3h1v1h-1zM97 3h1v1h-1zM27 2h1v1h-1zM40 2h1v1h-1zM42 2h1v1h-1zM50 2h1v1h-1zM52 2h1v1h-1zM30 1h1v1h-1zM39 1h1v1h-1zM54 1h1v1h-1zM75 1h1v1h-1zM26 0h1v1h-1zM43 0h1v1h-1zM49 0h1v1h-1zM54 0h1v1h-1zM58 0h1v1h-1z"/><path fill="#39568c" d="M77 98h2v1h-2zM94 98h1v1h-1zM36 97h1v1h-1zM39 97h1v1h-1zM52 97h1v1h-1zM82 97h1v1h-1zM95 97h1v1h-1zM31 96h1v1h-1zM34 96h1v1h-1zM40 96h1v1h-1zM50 96h1v1h-1zM40 95h1v1h-1zM73 95h1v1h-1zM97 95h1v1h-1zM27 94h2v1h-2zM45 94h1v1h-1zM47 94h1v1h-1zM60 94h1v1h-1zM71 94h1v1h-1zM92 94h1v1h-1zM28 93h1v1h-1zM60 93h1v1h-1zM68 93h1v1h-1zM88 93h1v1h-1zM27 92h1v1h-1zM32 92h1v1h-1zM38 92h1v1h-1zM56 92h1v1h-1zM64 92h1v1h-1zM78 92h1v1h-1zM84 92h1v1h-1zM44 91h1v1h-1zM52 91h1v1h-1zM26 90h1v1h-1zM29 90h1v1h-1zM52 90h1v1h-1zM60 90h1v1h-1zM83 90h1v1h-1zM96 90h1v1h-1zM28 89h1v1h-1zM55 89h1v1h-1zM60 89h1v1h-1zM66 89h1v1h-1zM72 89h1v1h-1zM89 89h1v1h-1zM98 89h1v1h-1zM32 88h1v1h-1zM70 88h1v1h-1zM33 87h1v1h-1zM35 87h1v1h-1zM52 87h1v1h-1zM97 87h2v1h-2zM31 86h1v1h-1zM37 86h1v1h-1zM48 86h1v1h-1zM56 86h1v1h-1zM66 86h1v1h-1zM95 86h1v1h-1zM32 85h1v1h-1zM45 85h1v1h-1zM72 85h1v1h-1zM29 84h1v1h-1zM33 84h1v1h-1zM38 83h1v1h-1zM45 83h1v1h-1zM51 83h1v1h-1zM85 83h1v1h-1zM28 82h1v1h-1zM69 82h1v1h-1zM82 82h1v1h-1zM93 82h1v1h-1zM26 81h1v1h-1zM31 81h2v1h-2zM37 81h1v1h-1zM54 81h1v1h-1zM65 81h1v1h-1zM42 80h1v1h-1zM52 80h1v1h-1zM95 80h1v1h-1zM34 79h1v1h-1zM38 79h1v1h-1zM49 79h1v1h-1zM56 79h1v1h-1zM66 79h1v1h-1zM74 79h1v1h-1zM30 78h1v1h-1zM33 78h1v1h-1zM58 78h2v1h-2zM37 77h1v1h-1zM71 77h1v1h-1zM77 77h1v1h-1zM79 77h1v1h-1zM32 76h1v1h-1zM36 76h1v1h-1zM57 76h1v1h-1zM36 75h1v1h-1zM50 75h1v1h-1zM62 75h1v1h-1zM88 75h1v1h-1zM30 74h1v1h-1zM35 74h1v1h-1zM39 74h1v1h-1zM44 74h1v1h-1zM62 74h1v1h-1zM73 74h1v1h-1zM93 74h1v1h-1zM38 73h1v1h-1zM40 73h1v1h-1zM60 73h1v1h-1zM64 73h1v1h-1zM92 73h1v1h-1zM32 72h1v1h-1zM41 72h1v1h-1zM56 72h1v1h-1zM33 71h1v1h-1zM78 71h1v1h-1zM28 70h1v1h-1zM51 70h1v1h-1zM56 70h1v1h-1zM31 69h1v1h-1zM39 69h1v1h-1zM49 69h1v1h-1zM59 69h1v1h-1zM72 69h1v1h-1zM82 69h1v1h-1zM91 69h1v1h-1zM28 68h1v1h-1zM51 68h1v1h-1zM57 68h1v1h-1zM78 68h1v1h-1zM83 68h1v1h-1zM52 67h1v1h-1zM59 67h1v1h-1zM64 67h1v1h-1zM71 67h1v1h-1zM33 66h1v1h-1zM35 66h1v1h-1zM94 66h1v1h-1zM32 65h1v1h-1zM74 65h1v1h-1zM42 64h1v1h-1zM46 64h1v1h-1zM56 64h1v1h-1zM73 64h1v1h-1zM28 63h1v1h-1zM30 63h1v1h-1zM39 63h2v1h-2zM62 63h1v1h-1zM79 63h1v1h-1zM85 63h1v1h-1zM26 62h1v1h-1zM33 62h1v1h-1zM52 62h1v1h-1zM59 62h1v1h-1zM29 61h1v1h-1zM44 61h1v1h-1zM69 61h1v1h-1zM72 60h1v1h-1zM80 60h1v1h-1zM97 60h1v1h-1zM29 59h1v1h-1zM35 59h1v1h-1zM90 59h1v1h-1zM69 58h1v1h-1zM80 58h1v1h-1zM95 58h1v1h-1zM38 57h1v1h-1zM67 57h1v1h-1zM73 57h1v1h-1zM85 57h1v1h-1zM88 57h1v1h-1zM28 56h1v1h-1zM31 56h1v1h-1zM74 56h1v1h-1zM27 55h1v1h-1zM34 55h1v1h-1zM41 55h1v1h-1zM56 55h1v1h-1zM62 55h1v1h-1zM72 55h1v1h-1zM84 55h2v1h-2zM88 55h1v1h-1zM39 54h1v1h-1zM43 53h1v1h-1zM45 53h1v1h-1zM50 53h1v1h-1zM52 53h1v1h-1zM25 52h1v1h-1zM37 52h1v1h-1zM49 52h1v1h-1zM52 52h1v1h-1zM61 52h1v1h-1zM80 52h1v1h-1zM28 51h1v1h-1zM40 51h1v1h-1zM43 51h1v1h-1zM90 51h1v1h-1zM96 51h2v1h-2zM62 50h1v1h-1zM64 50h1v1h-1zM37 49h1v1h-1zM48 49h1v1h-1zM51 49h1v1h-1zM72 49h1v1h-1zM88 49h1v1h-1zM31 48h1v1h-1zM33 48h2v1h-2zM37 48h1v1h-1zM65 48h1v1h-1zM31 47h1v1h-1zM49 47h1v1h-1zM96 47h1v1h-1zM32 46h1v1h-1zM35 46h1v1h-1zM58 46h1v1h-1zM69 46h1v1h-1zM86 46h1v1h-1zM96 46h1v1h-1zM45 45h1v1h-1zM55 45h1v1h-1zM57 45h1v1h-1zM64 45h1v1h-1zM72 45h1v1h-1zM86 45h1v1h-1zM27 44h1v1h-1zM34 44h1v1h-1zM46 44h1v1h-1zM69 44h1v1h-1zM84 44h1v1h-1zM35 43h1v1h-1zM54 43h1v1h-1zM64 43h1v1h-1zM83 43h1v1h-1zM28 42h2v1h-2zM36 42h1v1h-1zM43 42h1v1h-1zM55 42h1v1h-1zM75 42h1v1h-1zM53 41h1v1h-1zM60 41h2v1h-2zM29 40h1v1h-1zM33 40h1v1h-1zM42 40h1v1h-1zM75 40h1v1h-1zM77 40h1v1h-1zM81 40h1v1h-1zM85 40h1v1h-1zM97 40h1v1h-1zM42 39h1v1h-1zM48 39h1v1h-1zM81 39h1v1h-1zM88 39h1v1h-1zM32 38h1v1h-1zM57 38h1v1h-1zM59 38h1v1h-1zM79 38h1v1h-1zM27 37h1v1h-1zM31 37h1v1h-1zM40 37h1v1h-1zM51 37h1v1h-1zM61 37h1v1h-1zM72 37h1v1h-1zM82 37h1v1h-1zM38 36h1v1h-1zM53 35h1v1h-1zM67 35h2v1h-2zM91 35h1v1h-1zM35 34h1v1h-1zM48 34h1v1h-1zM28 33h1v1h-1zM77 33h1v1h-1zM27 32h3v1h-3zM41 32h1v1h-1zM45 32h1v1h-1zM65 32h1v1h-1zM80 32h1v1h-1zM88 32h1v1h-1zM35 31h1v1h-1zM44 31h1v1h-1zM50 31h1v1h-1zM61 31h1v1h-1zM81 31h1v1h-1zM87 31h1v1h-1zM32 30h1v1h-1zM51 30h1v1h-1zM72 30h1v1h-1zM96 30h1v1h-1zM35 29h2v1h-2zM39 29h2v1h-2zM44 29h1v1h-1zM58 29h2v1h-2zM42 28h1v1h-1zM45 28h1v1h-1zM56 28h1v1h-1zM62 28h1v1h-1zM84 28h1v1h-1zM42 27h1v1h-1zM52 27h1v1h-1zM57 27h1v1h-1zM90 27h1v1h-1zM98 27h1v1h-1zM30 26h1v1h-1zM50 26h1v1h-1zM71 26h1v1h-1zM94 26h1v1h-1zM97 26h1v1h-1zM44 25h1v1h-1zM52 25h1v1h-1zM63 25h1v1h-1zM37 24h1v1h-1zM45 24h1v1h-1zM62 24h1v1h-1zM80 24h1v1h-1zM37 23h1v1h-1zM77 23h1v1h-1zM89 23h1v1h-1zM43 22h1v1h-1zM26 21h1v1h-1zM28 21h1v1h-1zM34 21h1v1h-1zM40 21h1v1h-1zM45 21h1v1h-1zM54 21h1v1h-1zM58 21h1v1h-1zM64 21h1v1h-1zM28 20h1v1h-1zM42 20h1v1h-1zM92 20h1v1h-1zM44 19h1v1h-1zM86 19h1v1h-1zM97 19h1v1h-1zM27 18h1v1h-1zM33 18h1v1h-1zM38 18h1v1h-1zM46 18h1v1h-1zM53 18h1v1h-1zM60 18h2v1h-2zM34 17h1v1h-1zM47 17h1v1h-1zM49 17h1v1h-1zM76 17h1v1h-1zM26 16h1v1h-1zM57 16h1v1h-1zM40 15h1v1h-1zM80 14h1v1h-1zM47 13h1v1h-1zM81 13h1v1h-1zM87 13h1v1h-1zM39 12h1v1h-1zM44 12h1v1h-1zM48 12h1v1h-1zM30 11h1v1h-1zM51 11h1v1h-1zM67 11h1v1h-1zM71 11h1v1h-1zM30 10h1v1h-1zM40 10h1v1h-1zM65 10h1v1h-1zM31 9h1v1h-1zM34 9h1v1h-1zM52 9h1v1h-1zM57 9h1v1h-1zM81 9h1v1h-1zM88 9h1v1h-1zM28 8h1v1h-1zM30 8h1v1h-1zM72 8h1v1h-1zM90 8h1v1h-1zM34 7h1v1h-1zM40 7h1v1h-1zM50 7h1v1h-1zM54 7h1v1h-1zM56 7h1v1h-1zM70 7h1v1h-1zM74 7h1v1h-1zM84 7h1v1h-1zM28 6h1v1h-1zM40 6h1v1h-1zM46 6h1v1h-1zM76 6h2v1h-2zM34 5h1v1h-1zM77 5h1v1h-1zM85 5h1v1h-1zM91 5h1v1h-1zM36 4h1v1h-1zM45 4h1v1h-1zM51 4h1v1h-1zM87 4h1v1h-1zM93 4h1v1h-1zM40 3h1v1h-1zM58 3h1v1h-1zM62 3h1v1h-1zM66 3h1v1h-1zM78 3h1v1h-1zM87 3h1v1h-1zM89 3h1v1h-1zM63 2h1v1h-1zM28 1h1v1h-1zM51 1h1v1h-1zM68 1h1v1h-1zM70 1h1v1h-1zM93 1h2v1h-2zM28 0h1v1h-1zM34 0h1v1h-1zM46 0h2v1h-2zM70 0h1v1h-1zM77 0h1v1h-1z"/><path fill="#355f8d" d="M35 98h2v1h-2zM42 98h1v1h-1zM53 98h1v1h-1zM58 98h1v1h-1zM29 97h1v1h-1zM32 97h2v1h-2zM64 97h1v1h-1zM77 97h1v1h-1zM86 97h1v1h-1zM36 96h1v1h-1zM47 96h1v1h-1zM54 96h1v1h-1zM31 95h1v1h-1zM33 95h1v1h-1zM36 95h1v1h-1zM45 95h1v1h-1zM51 95h1v1h-1zM55 95h1v1h-1zM72 95h1v1h-1zM87 95h1v1h-1zM29 94h1v1h-1zM31 94h1v1h-1zM73 94h1v1h-1zM29 93h1v1h-1zM33 93h1v1h-1zM46 93h1v1h-1zM65 93h1v1h-1zM71 93h1v1h-1zM39 92h1v1h-1zM85 92h1v1h-1zM34 90h1v1h-1zM67 90h1v1h-1zM71 90h1v1h-1zM92 90h1v1h-1zM35 89h1v1h-1zM49 89h1v1h-1zM52 89h1v1h-1zM31 88h1v1h-1zM95 88h1v1h-1zM34 87h1v1h-1zM51 87h1v1h-1zM70 87h1v1h-1zM73 87h1v1h-1zM35 86h1v1h-1zM38 86h2v1h-2zM38 85h1v1h-1zM69 85h1v1h-1zM94 85h1v1h-1zM98 85h1v1h-1zM35 84h1v1h-1zM37 84h1v1h-1zM57 84h1v1h-1zM90 84h1v1h-1zM29 83h1v1h-1zM55 83h1v1h-1zM65 83h1v1h-1zM87 83h1v1h-1zM34 82h1v1h-1zM45 82h1v1h-1zM67 82h1v1h-1zM79 82h1v1h-1zM88 82h1v1h-1zM81 81h1v1h-1zM40 80h1v1h-1zM56 80h1v1h-1zM93 79h1v1h-1zM57 78h1v1h-1zM96 78h1v1h-1zM42 77h1v1h-1zM96 77h1v1h-1zM28 76h1v1h-1zM63 76h1v1h-1zM77 76h1v1h-1zM30 75h1v1h-1zM33 75h1v1h-1zM41 75h1v1h-1zM89 75h1v1h-1zM95 75h1v1h-1zM31 74h2v1h-2zM40 74h1v1h-1zM43 74h1v1h-1zM48 74h1v1h-1zM66 74h1v1h-1zM82 74h1v1h-1zM92 74h1v1h-1zM33 73h1v1h-1zM37 73h1v1h-1zM57 72h1v1h-1zM87 72h1v1h-1zM38 71h2v1h-2zM51 71h1v1h-1zM54 71h1v1h-1zM68 71h1v1h-1zM71 71h1v1h-1zM81 71h1v1h-1zM90 71h1v1h-1zM93 71h1v1h-1zM96 71h1v1h-1zM45 70h1v1h-1zM48 70h1v1h-1zM58 70h1v1h-1zM51 69h1v1h-1zM71 69h1v1h-1zM73 69h1v1h-1zM86 69h1v1h-1zM32 68h1v1h-1zM37 68h1v1h-1zM40 68h1v1h-1zM42 68h1v1h-1zM74 68h1v1h-1zM76 68h1v1h-1zM93 68h1v1h-1zM34 67h1v1h-1zM83 67h1v1h-1zM85 67h1v1h-1zM44 66h1v1h-1zM49 66h1v1h-1zM44 65h1v1h-1zM59 65h1v1h-1zM34 64h1v1h-1zM43 64h1v1h-1zM51 64h2v1h-2zM82 64h1v1h-1zM56 63h1v1h-1zM69 63h1v1h-1zM93 63h1v1h-1zM30 62h1v1h-1zM37 62h1v1h-1zM40 62h1v1h-1zM48 62h1v1h-1zM30 61h1v1h-1zM38 61h2v1h-2zM46 61h1v1h-1zM58 61h1v1h-1zM36 60h1v1h-1zM56 60h1v1h-1zM85 60h1v1h-1zM92 60h1v1h-1zM98 60h1v1h-1zM28 59h1v1h-1zM64 59h1v1h-1zM73 59h1v1h-1zM95 59h1v1h-1zM97 59h1v1h-1zM36 58h1v1h-1zM40 58h3v1h-3zM63 58h1v1h-1zM94 58h1v1h-1zM50 57h1v1h-1zM51 56h1v1h-1zM32 55h2v1h-2zM33 54h1v1h-1zM36 54h1v1h-1zM31 53h1v1h-1zM34 53h1v1h-1zM36 53h1v1h-1zM38 53h2v1h-2zM55 53h1v1h-1zM91 53h1v1h-1zM29 52h1v1h-1zM41 52h1v1h-1zM45 52h1v1h-1zM57 52h1v1h-1zM68 52h1v1h-1zM31 51h1v1h-1zM49 51h1v1h-1zM66 51h1v1h-1zM91 51h1v1h-1zM35 50h1v1h-1zM38 50h1v1h-1zM44 50h1v1h-1zM38 49h1v1h-1zM46 49h1v1h-1zM59 49h1v1h-1zM75 49h1v1h-1zM85 48h1v1h-1zM39 47h1v1h-1zM50 47h1v1h-1zM68 47h1v1h-1zM72 47h1v1h-1zM76 47h1v1h-1zM78 47h1v1h-1zM33 46h1v1h-1zM42 46h1v1h-1zM62 46h1v1h-1zM50 45h1v1h-1zM52 45h1v1h-1zM83 45h1v1h-1zM57 44h1v1h-1zM74 44h1v1h-1zM80 44h1v1h-1zM87 44h1v1h-1zM37 43h1v1h-1zM49 43h1v1h-1zM65 43h1v1h-1zM31 42h1v1h-1zM37 42h1v1h-1zM41 42h1v1h-1zM44 42h1v1h-1zM72 41h1v1h-1zM80 41h1v1h-1zM82 41h1v1h-1zM88 41h1v1h-1zM36 40h1v1h-1zM52 40h1v1h-1zM78 40h1v1h-1zM91 40h1v1h-1zM32 39h1v1h-1zM74 39h1v1h-1zM77 39h1v1h-1zM30 38h1v1h-1zM46 38h1v1h-1zM49 38h1v1h-1zM28 37h1v1h-1zM32 37h1v1h-1zM34 37h1v1h-1zM39 37h1v1h-1zM43 37h1v1h-1zM53 37h1v1h-1zM62 37h1v1h-1zM71 37h1v1h-1zM44 36h1v1h-1zM68 36h1v1h-1zM87 36h1v1h-1zM35 35h1v1h-1zM44 35h1v1h-1zM46 35h1v1h-1zM61 35h1v1h-1zM29 34h1v1h-1zM32 34h1v1h-1zM38 34h1v1h-1zM45 34h1v1h-1zM51 34h1v1h-1zM56 34h1v1h-1zM60 34h1v1h-1zM90 34h1v1h-1zM32 33h1v1h-1zM35 33h1v1h-1zM39 33h1v1h-1zM44 33h1v1h-1zM47 33h1v1h-1zM51 33h1v1h-1zM56 33h1v1h-1zM59 33h3v1h-3zM82 33h1v1h-1zM85 33h1v1h-1zM70 32h1v1h-1zM83 32h1v1h-1zM47 31h1v1h-1zM54 31h1v1h-1zM76 31h1v1h-1zM42 30h1v1h-1zM49 30h1v1h-1zM62 30h2v1h-2zM79 30h1v1h-1zM33 29h1v1h-1zM43 29h1v1h-1zM52 29h1v1h-1zM90 29h1v1h-1zM30 28h1v1h-1zM33 28h1v1h-1zM35 28h1v1h-1zM37 28h1v1h-1zM39 28h1v1h-1zM68 28h1v1h-1zM73 28h1v1h-1zM82 28h1v1h-1zM32 27h1v1h-1zM43 27h1v1h-1zM47 27h1v1h-1zM34 26h1v1h-1zM40 26h1v1h-1zM67 26h1v1h-1zM79 26h1v1h-1zM31 25h1v1h-1zM66 25h1v1h-1zM38 24h1v1h-1zM54 24h2v1h-2zM57 24h1v1h-1zM60 24h1v1h-1zM33 23h1v1h-1zM38 23h1v1h-1zM50 23h1v1h-1zM53 23h1v1h-1zM65 23h1v1h-1zM78 23h1v1h-1zM90 23h1v1h-1zM33 22h1v1h-1zM56 22h1v1h-1zM63 22h1v1h-1zM36 21h1v1h-1zM38 21h1v1h-1zM62 21h1v1h-1zM80 21h1v1h-1zM87 21h1v1h-1zM90 21h1v1h-1zM45 20h1v1h-1zM68 19h2v1h-2zM78 19h1v1h-1zM48 18h1v1h-1zM81 18h1v1h-1zM95 18h2v1h-2zM64 17h2v1h-2zM95 17h1v1h-1zM97 17h1v1h-1zM59 16h1v1h-1zM61 16h1v1h-1zM68 16h1v1h-1zM98 16h1v1h-1zM31 15h1v1h-1zM34 15h1v1h-1zM39 15h1v1h-1zM42 15h1v1h-1zM45 15h1v1h-1zM50 15h1v1h-1zM55 15h1v1h-1zM68 15h1v1h-1zM44 14h1v1h-1zM66 14h1v1h-1zM36 13h1v1h-1zM38 13h1v1h-1zM57 13h1v1h-1zM74 13h1v1h-1zM76 13h1v1h-1zM33 12h1v1h-1zM37 12h1v1h-1zM41 12h1v1h-1zM58 12h1v1h-1zM66 12h1v1h-1zM28 10h1v1h-1zM35 10h2v1h-2zM52 10h1v1h-1zM38 8h1v1h-1zM43 8h1v1h-1zM53 8h1v1h-1zM62 8h1v1h-1zM33 7h1v1h-1zM57 7h1v1h-1zM32 6h1v1h-1zM42 6h1v1h-1zM45 6h1v1h-1zM53 6h1v1h-1zM69 6h1v1h-1zM71 6h1v1h-1zM92 6h1v1h-1zM30 5h1v1h-1zM35 5h2v1h-2zM43 5h1v1h-1zM55 5h1v1h-1zM61 5h1v1h-1zM75 5h2v1h-2zM93 5h1v1h-1zM58 4h1v1h-1zM86 4h1v1h-1zM33 3h1v1h-1zM35 3h1v1h-1zM43 3h1v1h-1zM54 3h1v1h-1zM64 3h1v1h-1zM95 3h1v1h-1zM31 2h1v1h-1zM37 2h1v1h-1zM35 1h1v1h-1zM41 1h1v1h-1zM49 1h1v1h-1zM52 1h1v1h-1zM86 1h1v1h-1zM88 1h1v1h-1zM38 0h1v1h-1zM42 0h1v1h-1zM44 0h1v1h-1zM65 0h1v1h-1z"/><path fill="#31678e" d="M45 98h1v1h-1zM52 98h1v1h-1zM69 98h1v1h-1zM81 98h1v1h-1zM37 97h1v1h-1zM40 97h1v1h-1zM57 97h1v1h-1zM78 97h1v1h-1zM87 97h1v1h-1zM58 96h1v1h-1zM76 96h1v1h-1zM87 96h1v1h-1zM38 95h1v1h-1zM62 95h1v1h-1zM90 95h1v1h-1zM35 94h1v1h-1zM40 94h1v1h-1zM62 94h2v1h-2zM65 94h1v1h-1zM90 94h1v1h-1zM42 93h1v1h-1zM45 93h1v1h-1zM80 93h1v1h-1zM98 93h1v1h-1zM46 92h1v1h-1zM54 92h1v1h-1zM79 92h2v1h-2zM86 92h1v1h-1zM40 91h1v1h-1zM45 91h1v1h-1zM47 91h1v1h-1zM36 90h1v1h-1zM50 90h1v1h-1zM61 90h1v1h-1zM42 89h1v1h-1zM45 89h1v1h-1zM58 89h1v1h-1zM63 89h1v1h-1zM76 89h1v1h-1zM90 89h1v1h-1zM49 88h1v1h-1zM57 88h1v1h-1zM62 88h1v1h-1zM40 87h1v1h-1zM71 87h1v1h-1zM43 86h1v1h-1zM61 86h1v1h-1zM53 85h1v1h-1zM97 85h1v1h-1zM36 84h1v1h-1zM40 84h2v1h-2zM45 84h1v1h-1zM47 84h1v1h-1zM50 84h1v1h-1zM40 83h2v1h-2zM78 83h1v1h-1zM52 82h1v1h-1zM96 82h1v1h-1zM43 81h2v1h-2zM73 81h1v1h-1zM76 81h1v1h-1zM96 81h1v1h-1zM33 80h1v1h-1zM34 78h1v1h-1zM70 78h1v1h-1zM81 78h1v1h-1zM57 77h1v1h-1zM53 76h1v1h-1zM81 76h1v1h-1zM59 75h1v1h-1zM72 75h1v1h-1zM38 74h1v1h-1zM50 74h1v1h-1zM64 74h1v1h-1zM96 74h2v1h-2zM68 73h1v1h-1zM76 73h1v1h-1zM84 73h1v1h-1zM43 72h1v1h-1zM49 72h1v1h-1zM84 72h1v1h-1zM32 71h1v1h-1zM36 71h1v1h-1zM58 71h1v1h-1zM66 71h1v1h-1zM70 71h1v1h-1zM88 71h1v1h-1zM40 70h1v1h-1zM49 70h2v1h-2zM52 70h1v1h-1zM62 70h1v1h-1zM35 69h1v1h-1zM52 69h1v1h-1zM98 69h1v1h-1zM50 68h1v1h-1zM63 68h1v1h-1zM70 68h1v1h-1zM36 67h1v1h-1zM39 67h1v1h-1zM49 67h1v1h-1zM57 67h1v1h-1zM82 67h1v1h-1zM87 67h1v1h-1zM98 67h1v1h-1zM39 66h1v1h-1zM41 66h1v1h-1zM64 66h1v1h-1zM36 65h1v1h-1zM42 65h1v1h-1zM49 65h1v1h-1zM92 65h1v1h-1zM37 64h1v1h-1zM58 64h1v1h-1zM91 64h2v1h-2zM36 63h1v1h-1zM45 63h1v1h-1zM48 63h1v1h-1zM54 63h1v1h-1zM67 63h1v1h-1zM80 63h1v1h-1zM35 62h1v1h-1zM75 62h1v1h-1zM81 62h1v1h-1zM67 61h1v1h-1zM70 61h1v1h-1zM78 61h1v1h-1zM43 60h1v1h-1zM47 60h1v1h-1zM54 60h1v1h-1zM76 60h1v1h-1zM33 59h1v1h-1zM56 59h1v1h-1zM79 59h1v1h-1zM81 59h1v1h-1zM91 59h1v1h-1zM37 58h1v1h-1zM46 58h1v1h-1zM77 58h1v1h-1zM88 58h1v1h-1zM36 57h1v1h-1zM39 57h1v1h-1zM63 57h1v1h-1zM34 56h1v1h-1zM89 56h1v1h-1zM38 55h1v1h-1zM55 55h1v1h-1zM49 54h1v1h-1zM52 54h1v1h-1zM49 53h1v1h-1zM74 53h1v1h-1zM78 53h1v1h-1zM80 53h1v1h-1zM85 53h1v1h-1zM36 52h1v1h-1zM40 52h1v1h-1zM42 52h1v1h-1zM46 51h1v1h-1zM54 51h1v1h-1zM93 51h1v1h-1zM48 50h1v1h-1zM73 50h1v1h-1zM88 50h1v1h-1zM33 49h1v1h-1zM41 48h1v1h-1zM56 48h1v1h-1zM67 48h1v1h-1zM77 48h1v1h-1zM44 47h1v1h-1zM85 47h1v1h-1zM49 46h1v1h-1zM97 46h1v1h-1zM32 45h1v1h-1zM37 45h1v1h-1zM97 45h1v1h-1zM52 43h1v1h-1zM66 43h1v1h-1zM68 43h1v1h-1zM35 42h1v1h-1zM71 42h1v1h-1zM78 42h1v1h-1zM34 41h1v1h-1zM48 41h1v1h-1zM56 41h1v1h-1zM85 41h1v1h-1zM89 41h1v1h-1zM38 40h1v1h-1zM57 40h1v1h-1zM50 39h1v1h-1zM57 39h1v1h-1zM36 38h1v1h-1zM61 38h1v1h-1zM67 38h1v1h-1zM87 38h1v1h-1zM33 37h1v1h-1zM42 37h1v1h-1zM46 37h1v1h-1zM50 36h1v1h-1zM56 36h1v1h-1zM75 36h1v1h-1zM84 36h1v1h-1zM59 35h2v1h-2zM75 35h2v1h-2zM82 35h1v1h-1zM90 35h1v1h-1zM39 34h1v1h-1zM98 34h1v1h-1zM52 33h1v1h-1zM58 33h1v1h-1zM32 32h1v1h-1zM36 32h1v1h-1zM43 32h1v1h-1zM57 32h1v1h-1zM79 32h1v1h-1zM39 31h1v1h-1zM59 31h1v1h-1zM85 31h1v1h-1zM93 31h1v1h-1zM45 30h1v1h-1zM54 30h1v1h-1zM67 30h1v1h-1zM48 29h1v1h-1zM71 29h1v1h-1zM48 28h1v1h-1zM49 27h1v1h-1zM55 27h1v1h-1zM59 27h1v1h-1zM76 27h1v1h-1zM80 27h1v1h-1zM49 26h1v1h-1zM57 26h1v1h-1zM88 26h1v1h-1zM37 25h1v1h-1zM39 25h1v1h-1zM43 24h1v1h-1zM66 24h1v1h-1zM74 24h1v1h-1zM84 24h1v1h-1zM95 24h1v1h-1zM97 24h1v1h-1zM41 23h1v1h-1zM46 23h1v1h-1zM62 23h1v1h-1zM66 23h1v1h-1zM42 22h1v1h-1zM98 21h1v1h-1zM34 20h1v1h-1zM39 20h1v1h-1zM43 20h1v1h-1zM81 20h1v1h-1zM91 20h1v1h-1zM38 19h1v1h-1zM42 19h1v1h-1zM61 19h1v1h-1zM74 19h1v1h-1zM95 19h1v1h-1zM57 18h1v1h-1zM70 18h2v1h-2zM43 17h1v1h-1zM54 17h1v1h-1zM72 17h1v1h-1zM32 16h1v1h-1zM73 16h1v1h-1zM90 16h1v1h-1zM54 15h1v1h-1zM70 15h1v1h-1zM82 15h1v1h-1zM88 15h1v1h-1zM37 14h1v1h-1zM76 14h1v1h-1zM35 13h1v1h-1zM39 13h1v1h-1zM50 13h1v1h-1zM84 13h1v1h-1zM40 12h1v1h-1zM59 12h1v1h-1zM37 11h2v1h-2zM42 11h1v1h-1zM63 11h1v1h-1zM37 10h1v1h-1zM94 10h1v1h-1zM43 9h1v1h-1zM55 9h1v1h-1zM71 9h1v1h-1zM91 9h1v1h-1zM75 8h1v1h-1zM92 8h1v1h-1zM97 8h1v1h-1zM33 6h1v1h-1zM41 6h1v1h-1zM43 6h1v1h-1zM48 6h1v1h-1zM83 6h1v1h-1zM46 5h2v1h-2zM94 5h1v1h-1zM38 4h1v1h-1zM54 4h1v1h-1zM59 4h1v1h-1zM81 4h1v1h-1zM85 4h1v1h-1zM91 4h1v1h-1zM31 3h1v1h-1zM49 3h1v1h-1zM32 2h1v1h-1zM45 2h2v1h-2zM58 2h1v1h-1zM62 2h1v1h-1zM83 2h1v1h-1zM37 1h1v1h-1zM42 1h1v1h-1zM74 1h1v1h-1zM90 1h1v1h-1zM36 0h1v1h-1zM39 0h1v1h-1zM51 0h1v1h-1zM61 0h1v1h-1zM71 0h1v1h-1z"/><path fill="#2e6f8e" d="M49 98h1v1h-1zM73 98h1v1h-1zM75 98h1v1h-1zM82 98h1v1h-1zM45 97h1v1h-1zM92 97h1v1h-1zM42 96h1v1h-1zM60 96h1v1h-1zM46 95h1v1h-1zM74 95h1v1h-1zM77 95h1v1h-1zM79 95h1v1h-1zM39 94h1v1h-1zM53 94h1v1h-1zM70 94h1v1h-1zM66 93h1v1h-1zM73 93h1v1h-1zM40 92h1v1h-1zM60 92h1v1h-1zM81 92h1v1h-1zM89 92h1v1h-1zM46 91h1v1h-1zM56 91h1v1h-1zM58 91h1v1h-1zM61 91h1v1h-1zM72 91h1v1h-1zM83 91h2v1h-2zM42 90h1v1h-1zM64 90h1v1h-1zM46 89h1v1h-1zM42 88h1v1h-1zM46 88h1v1h-1zM84 88h1v1h-1zM45 87h1v1h-1zM50 87h1v1h-1zM63 87h1v1h-1zM81 87h1v1h-1zM60 86h1v1h-1zM68 85h1v1h-1zM79 85h1v1h-1zM83 85h1v1h-1zM90 85h1v1h-1zM93 85h1v1h-1zM95 85h1v1h-1zM56 84h1v1h-1zM39 83h1v1h-1zM52 83h1v1h-1zM60 83h1v1h-1zM68 83h1v1h-1zM54 82h1v1h-1zM71 82h1v1h-1zM75 82h1v1h-1zM63 81h1v1h-1zM95 81h1v1h-1zM43 80h1v1h-1zM51 80h1v1h-1zM60 80h1v1h-1zM78 80h1v1h-1zM54 79h1v1h-1zM58 79h1v1h-1zM63 79h1v1h-1zM48 78h1v1h-1zM61 78h1v1h-1zM86 78h1v1h-1zM73 77h1v1h-1zM86 77h1v1h-1zM64 76h1v1h-1zM95 76h1v1h-1zM40 75h1v1h-1zM51 75h1v1h-1zM81 75h1v1h-1zM52 74h1v1h-1zM68 74h1v1h-1zM79 74h1v1h-1zM90 74h1v1h-1zM65 73h1v1h-1zM69 73h1v1h-1zM93 73h1v1h-1zM96 73h1v1h-1zM51 72h2v1h-2zM55 72h1v1h-1zM64 72h1v1h-1zM85 72h1v1h-1zM65 71h1v1h-1zM72 71h1v1h-1zM53 70h1v1h-1zM68 70h1v1h-1zM43 69h1v1h-1zM46 69h1v1h-1zM66 69h1v1h-1zM38 68h1v1h-1zM87 68h1v1h-1zM41 67h1v1h-1zM45 67h1v1h-1zM61 67h2v1h-2zM80 67h1v1h-1zM61 66h1v1h-1zM41 65h1v1h-1zM84 65h1v1h-1zM49 64h1v1h-1zM54 64h1v1h-1zM60 64h1v1h-1zM78 64h1v1h-1zM47 63h1v1h-1zM52 63h1v1h-1zM64 63h1v1h-1zM42 62h1v1h-1zM69 62h1v1h-1zM48 61h1v1h-1zM95 61h1v1h-1zM58 60h1v1h-1zM69 60h1v1h-1zM79 60h1v1h-1zM83 60h1v1h-1zM88 60h1v1h-1zM40 59h2v1h-2zM62 59h1v1h-1zM43 58h1v1h-1zM61 58h1v1h-1zM96 58h1v1h-1zM35 57h1v1h-1zM74 57h1v1h-1zM81 57h1v1h-1zM35 56h1v1h-1zM42 56h1v1h-1zM67 56h1v1h-1zM70 56h1v1h-1zM39 55h1v1h-1zM40 54h1v1h-1zM78 54h1v1h-1zM84 54h1v1h-1zM93 53h1v1h-1zM43 52h1v1h-1zM87 52h1v1h-1zM47 50h1v1h-1zM52 50h1v1h-1zM68 50h1v1h-1zM70 50h1v1h-1zM83 50h1v1h-1zM40 49h1v1h-1zM70 49h1v1h-1zM90 49h1v1h-1zM35 48h1v1h-1zM45 48h1v1h-1zM42 47h1v1h-1zM55 47h1v1h-1zM59 47h1v1h-1zM64 47h1v1h-1zM70 47h1v1h-1zM40 46h1v1h-1zM43 46h1v1h-1zM68 46h1v1h-1zM85 46h1v1h-1zM53 45h1v1h-1zM66 45h2v1h-2zM50 44h1v1h-1zM54 44h1v1h-1zM38 43h1v1h-1zM41 43h1v1h-1zM42 42h1v1h-1zM77 42h1v1h-1zM85 42h1v1h-1zM40 41h1v1h-1zM70 41h1v1h-1zM93 41h1v1h-1zM45 39h1v1h-1zM61 39h1v1h-1zM41 38h3v1h-3zM54 37h1v1h-1zM56 37h1v1h-1zM93 37h1v1h-1zM40 35h1v1h-1zM43 35h1v1h-1zM83 35h1v1h-1zM46 34h1v1h-1zM85 34h1v1h-1zM96 34h1v1h-1zM43 33h1v1h-1zM62 33h1v1h-1zM65 33h1v1h-1zM84 33h1v1h-1zM51 32h1v1h-1zM60 32h2v1h-2zM67 32h1v1h-1zM37 31h2v1h-2zM46 31h1v1h-1zM86 31h1v1h-1zM48 30h1v1h-1zM68 30h1v1h-1zM97 30h1v1h-1zM46 29h1v1h-1zM80 29h1v1h-1zM36 28h1v1h-1zM51 28h1v1h-1zM55 28h1v1h-1zM93 28h1v1h-1zM38 27h2v1h-2zM41 27h1v1h-1zM75 27h1v1h-1zM36 26h1v1h-1zM54 26h1v1h-1zM86 26h1v1h-1zM41 25h2v1h-2zM54 25h1v1h-1zM69 25h1v1h-1zM80 25h1v1h-1zM95 25h1v1h-1zM47 24h1v1h-1zM59 24h1v1h-1zM85 24h1v1h-1zM81 22h1v1h-1zM98 22h1v1h-1zM44 21h1v1h-1zM94 21h1v1h-1zM97 21h1v1h-1zM73 20h1v1h-1zM37 19h1v1h-1zM63 18h2v1h-2zM72 18h1v1h-1zM86 18h1v1h-1zM92 18h1v1h-1zM98 17h1v1h-1zM35 16h1v1h-1zM38 16h1v1h-1zM47 16h1v1h-1zM62 16h1v1h-1zM77 16h1v1h-1zM36 15h1v1h-1zM38 15h1v1h-1zM57 15h1v1h-1zM78 15h1v1h-1zM45 14h1v1h-1zM48 14h1v1h-1zM50 14h1v1h-1zM68 14h1v1h-1zM42 13h2v1h-2zM59 13h1v1h-1zM83 12h1v1h-1zM41 11h1v1h-1zM54 11h2v1h-2zM75 11h1v1h-1zM82 11h1v1h-1zM88 11h1v1h-1zM39 10h1v1h-1zM44 10h1v1h-1zM48 10h1v1h-1zM61 10h1v1h-1zM50 9h1v1h-1zM70 9h1v1h-1zM45 8h1v1h-1zM59 8h1v1h-1zM65 8h1v1h-1zM71 8h1v1h-1zM77 8h1v1h-1zM87 8h1v1h-1zM96 8h1v1h-1zM53 7h1v1h-1zM66 7h1v1h-1zM58 5h1v1h-1zM66 5h1v1h-1zM68 5h1v1h-1zM37 4h1v1h-1zM43 4h1v1h-1zM68 4h1v1h-1zM42 3h1v1h-1zM55 3h1v1h-1zM83 3h1v1h-1zM86 3h1v1h-1zM38 2h2v1h-2zM49 2h1v1h-1zM53 2h1v1h-1zM87 2h1v1h-1zM43 1h1v1h-1zM84 1h1v1h-1zM91 1h1v1h-1zM52 0h1v1h-1zM96 0h1v1h-1z"/><path fill="#2a768e" d="M64 98h1v1h-1zM86 98h1v1h-1zM53 97h1v1h-1zM98 97h1v1h-1zM44 96h2v1h-2zM49 96h1v1h-1zM53 95h1v1h-1zM71 95h1v1h-1zM44 93h1v1h-1zM65 92h1v1h-1zM82 92h1v1h-1zM98 92h1v1h-1zM38 91h1v1h-1zM48 91h1v1h-1zM65 91h1v1h-1zM69 91h1v1h-1zM79 91h1v1h-1zM94 91h1v1h-1zM48 90h1v1h-1zM77 90h1v1h-1zM86 90h1v1h-1zM57 89h1v1h-1zM39 88h1v1h-1zM50 88h2v1h-2zM66 88h1v1h-1zM75 88h1v1h-1zM90 88h1v1h-1zM92 87h1v1h-1zM42 86h1v1h-1zM46 86h1v1h-1zM54 86h2v1h-2zM64 86h2v1h-2zM72 86h1v1h-1zM43 85h1v1h-1zM81 85h1v1h-1zM42 84h1v1h-1zM62 84h1v1h-1zM78 84h1v1h-1zM62 83h1v1h-1zM72 83h2v1h-2zM40 82h1v1h-1zM48 82h1v1h-1zM55 82h1v1h-1zM65 82h1v1h-1zM86 82h1v1h-1zM57 81h1v1h-1zM68 81h1v1h-1zM82 81h1v1h-1zM39 80h1v1h-1zM67 80h1v1h-1zM90 80h1v1h-1zM49 78h1v1h-1zM54 78h1v1h-1zM72 78h2v1h-2zM92 78h1v1h-1zM97 78h1v1h-1zM40 77h1v1h-1zM59 77h1v1h-1zM69 77h1v1h-1zM68 76h1v1h-1zM75 76h1v1h-1zM39 75h1v1h-1zM49 75h1v1h-1zM61 75h1v1h-1zM93 75h2v1h-2zM78 74h1v1h-1zM43 73h1v1h-1zM53 73h1v1h-1zM58 73h1v1h-1zM62 73h1v1h-1zM94 73h1v1h-1zM47 72h1v1h-1zM95 72h1v1h-1zM41 70h1v1h-1zM44 70h1v1h-1zM54 70h1v1h-1zM74 70h1v1h-1zM87 70h1v1h-1zM64 69h1v1h-1zM69 69h1v1h-1zM95 69h1v1h-1zM58 68h1v1h-1zM44 67h1v1h-1zM54 67h1v1h-1zM72 66h1v1h-1zM87 66h1v1h-1zM93 66h1v1h-1zM47 65h1v1h-1zM53 65h1v1h-1zM65 65h1v1h-1zM78 65h1v1h-1zM98 65h1v1h-1zM48 64h1v1h-1zM77 64h1v1h-1zM90 64h1v1h-1zM50 63h1v1h-1zM80 62h1v1h-1zM41 61h1v1h-1zM52 61h1v1h-1zM62 61h1v1h-1zM72 61h1v1h-1zM75 60h1v1h-1zM38 58h1v1h-1zM48 58h1v1h-1zM51 58h1v1h-1zM98 58h1v1h-1zM43 57h1v1h-1zM54 57h1v1h-1zM58 57h2v1h-2zM45 56h1v1h-1zM65 56h1v1h-1zM53 55h1v1h-1zM67 55h1v1h-1zM75 54h1v1h-1zM81 54h1v1h-1zM62 53h1v1h-1zM39 52h1v1h-1zM48 52h1v1h-1zM73 52h1v1h-1zM51 51h1v1h-1zM53 51h1v1h-1zM70 51h1v1h-1zM40 50h1v1h-1zM43 50h1v1h-1zM47 49h1v1h-1zM50 49h1v1h-1zM53 49h1v1h-1zM68 49h1v1h-1zM73 49h1v1h-1zM61 48h1v1h-1zM78 48h1v1h-1zM40 47h1v1h-1zM45 47h1v1h-1zM47 47h1v1h-1zM53 47h2v1h-2zM56 47h1v1h-1zM74 47h1v1h-1zM81 47h1v1h-1zM83 47h1v1h-1zM60 46h1v1h-1zM38 45h1v1h-1zM74 45h1v1h-1zM40 44h1v1h-1zM56 44h1v1h-1zM65 44h1v1h-1zM48 43h1v1h-1zM67 43h1v1h-1zM45 42h1v1h-1zM56 42h1v1h-1zM59 42h2v1h-2zM72 42h1v1h-1zM86 42h1v1h-1zM42 41h1v1h-1zM79 41h1v1h-1zM95 41h1v1h-1zM40 40h1v1h-1zM43 40h1v1h-1zM69 39h1v1h-1zM80 39h1v1h-1zM71 38h2v1h-2zM48 37h1v1h-1zM59 37h1v1h-1zM77 37h2v1h-2zM95 37h1v1h-1zM41 36h1v1h-1zM61 36h1v1h-1zM74 36h1v1h-1zM85 36h1v1h-1zM95 36h1v1h-1zM48 35h1v1h-1zM74 35h1v1h-1zM49 34h1v1h-1zM57 34h1v1h-1zM71 34h1v1h-1zM40 33h2v1h-2zM71 33h1v1h-1zM72 32h1v1h-1zM74 32h1v1h-1zM90 32h1v1h-1zM97 32h1v1h-1zM40 31h1v1h-1zM71 31h1v1h-1zM43 30h2v1h-2zM92 30h1v1h-1zM41 29h1v1h-1zM78 29h2v1h-2zM41 28h1v1h-1zM45 27h1v1h-1zM65 27h1v1h-1zM74 27h1v1h-1zM47 26h1v1h-1zM60 26h1v1h-1zM76 26h1v1h-1zM98 26h1v1h-1zM46 25h1v1h-1zM41 24h1v1h-1zM64 24h1v1h-1zM71 24h1v1h-1zM77 24h1v1h-1zM81 24h1v1h-1zM39 23h1v1h-1zM51 23h2v1h-2zM64 23h1v1h-1zM92 23h1v1h-1zM40 22h1v1h-1zM51 22h1v1h-1zM53 22h1v1h-1zM58 22h1v1h-1zM47 21h1v1h-1zM52 20h2v1h-2zM55 20h1v1h-1zM63 20h1v1h-1zM45 19h1v1h-1zM55 19h1v1h-1zM50 18h1v1h-1zM56 18h1v1h-1zM68 18h1v1h-1zM40 17h1v1h-1zM42 17h1v1h-1zM50 17h1v1h-1zM52 17h1v1h-1zM61 17h1v1h-1zM63 17h1v1h-1zM48 16h1v1h-1zM69 16h1v1h-1zM83 16h1v1h-1zM95 16h1v1h-1zM65 14h1v1h-1zM69 14h1v1h-1zM77 14h1v1h-1zM44 13h1v1h-1zM48 13h1v1h-1zM83 13h1v1h-1zM43 12h1v1h-1zM45 12h1v1h-1zM81 12h1v1h-1zM40 11h1v1h-1zM73 11h1v1h-1zM91 11h1v1h-1zM97 11h1v1h-1zM51 10h1v1h-1zM37 9h1v1h-1zM51 9h1v1h-1zM59 9h1v1h-1zM42 8h1v1h-1zM49 8h1v1h-1zM52 8h1v1h-1zM84 8h1v1h-1zM86 8h1v1h-1zM94 8h1v1h-1zM46 7h1v1h-1zM62 7h1v1h-1zM38 6h2v1h-2zM75 6h1v1h-1zM44 5h2v1h-2zM49 5h1v1h-1zM56 4h1v1h-1zM75 4h1v1h-1zM41 3h1v1h-1zM61 3h1v1h-1zM85 3h1v1h-1zM92 3h1v1h-1zM48 2h1v1h-1zM77 2h1v1h-1zM44 1h1v1h-1zM48 1h1v1h-1zM57 1h1v1h-1zM59 1h1v1h-1zM76 1h1v1h-1zM41 0h1v1h-1zM48 0h1v1h-1zM59 0h2v1h-2zM62 0h1v1h-1zM66 0h1v1h-1zM86 0h1v1h-1z"/><path fill="#277e8e" d="M47 98h1v1h-1zM57 98h1v1h-1zM59 98h1v1h-1zM61 98h1v1h-1zM67 97h1v1h-1zM80 97h1v1h-1zM94 97h1v1h-1zM43 95h1v1h-1zM48 95h1v1h-1zM57 95h1v1h-1zM85 95h1v1h-1zM95 95h1v1h-1zM49 94h1v1h-1zM59 94h1v1h-1zM61 94h1v1h-1zM91 94h1v1h-1zM47 93h1v1h-1zM53 93h1v1h-1zM89 93h1v1h-1zM95 93h1v1h-1zM50 92h1v1h-1zM72 92h1v1h-1zM74 92h1v1h-1zM51 91h1v1h-1zM55 91h1v1h-1zM62 91h1v1h-1zM82 91h1v1h-1zM90 91h1v1h-1zM53 90h1v1h-1zM72 90h1v1h-1zM79 90h1v1h-1zM87 90h1v1h-1zM91 90h1v1h-1zM54 89h1v1h-1zM64 89h1v1h-1zM87 89h1v1h-1zM83 88h1v1h-1zM92 88h1v1h-1zM97 88h1v1h-1zM65 87h1v1h-1zM47 86h1v1h-1zM67 86h1v1h-1zM71 86h1v1h-1zM80 85h1v1h-1zM96 85h1v1h-1zM55 84h1v1h-1zM60 84h1v1h-1zM98 84h1v1h-1zM57 83h1v1h-1zM41 82h1v1h-1zM46 82h1v1h-1zM68 82h1v1h-1zM74 82h1v1h-1zM59 81h1v1h-1zM90 81h1v1h-1zM48 80h1v1h-1zM71 80h1v1h-1zM67 79h1v1h-1zM41 78h1v1h-1zM87 78h1v1h-1zM94 78h1v1h-1zM49 77h1v1h-1zM53 77h1v1h-1zM56 77h1v1h-1zM60 77h2v1h-2zM67 77h1v1h-1zM93 77h1v1h-1zM43 76h1v1h-1zM90 76h1v1h-1zM64 75h1v1h-1zM85 75h1v1h-1zM98 75h1v1h-1zM69 74h1v1h-1zM44 73h1v1h-1zM88 73h1v1h-1zM91 73h1v1h-1zM65 72h1v1h-1zM75 72h1v1h-1zM86 72h1v1h-1zM48 71h1v1h-1zM50 71h1v1h-1zM59 71h1v1h-1zM73 71h1v1h-1zM42 70h1v1h-1zM87 69h1v1h-1zM90 69h1v1h-1zM48 68h1v1h-1zM55 68h1v1h-1zM60 68h1v1h-1zM68 68h1v1h-1zM79 68h1v1h-1zM94 68h1v1h-1zM68 67h1v1h-1zM70 67h1v1h-1zM77 67h1v1h-1zM52 66h1v1h-1zM55 66h1v1h-1zM69 66h1v1h-1zM71 66h1v1h-1zM96 66h1v1h-1zM57 65h1v1h-1zM65 64h1v1h-1zM76 64h1v1h-1zM80 64h1v1h-1zM57 63h2v1h-2zM81 63h1v1h-1zM97 63h1v1h-1zM43 62h1v1h-1zM66 62h1v1h-1zM80 61h1v1h-1zM46 60h1v1h-1zM52 60h1v1h-1zM66 60h1v1h-1zM43 59h1v1h-1zM48 59h1v1h-1zM52 59h1v1h-1zM60 59h1v1h-1zM80 59h1v1h-1zM94 59h1v1h-1zM44 58h1v1h-1zM56 58h1v1h-1zM60 58h1v1h-1zM93 58h1v1h-1zM97 58h1v1h-1zM97 57h1v1h-1zM44 56h1v1h-1zM50 56h1v1h-1zM52 56h1v1h-1zM54 56h1v1h-1zM60 55h1v1h-1zM70 54h1v1h-1zM44 53h1v1h-1zM90 52h1v1h-1zM96 52h1v1h-1zM45 51h1v1h-1zM56 51h1v1h-1zM67 51h1v1h-1zM78 50h1v1h-1zM69 47h1v1h-1zM77 47h1v1h-1zM77 46h1v1h-1zM80 46h1v1h-1zM59 45h1v1h-1zM85 45h1v1h-1zM90 45h1v1h-1zM71 44h1v1h-1zM94 44h2v1h-2zM46 42h1v1h-1zM66 42h1v1h-1zM69 42h1v1h-1zM54 41h1v1h-1zM58 41h1v1h-1zM65 41h1v1h-1zM47 40h1v1h-1zM50 40h2v1h-2zM46 39h1v1h-1zM64 39h1v1h-1zM51 38h1v1h-1zM56 38h1v1h-1zM92 38h1v1h-1zM43 36h1v1h-1zM47 36h1v1h-1zM53 36h1v1h-1zM55 36h1v1h-1zM60 36h1v1h-1zM50 35h1v1h-1zM93 35h1v1h-1zM42 34h1v1h-1zM55 34h1v1h-1zM92 33h1v1h-1zM62 32h1v1h-1zM53 31h1v1h-1zM56 31h1v1h-1zM92 31h1v1h-1zM73 30h1v1h-1zM67 29h1v1h-1zM69 28h1v1h-1zM51 27h1v1h-1zM46 26h1v1h-1zM64 26h1v1h-1zM72 26h1v1h-1zM78 26h1v1h-1zM53 25h1v1h-1zM73 25h1v1h-1zM49 24h1v1h-1zM53 24h1v1h-1zM56 23h1v1h-1zM46 22h1v1h-1zM77 22h1v1h-1zM94 22h1v1h-1zM97 22h1v1h-1zM70 21h1v1h-1zM66 20h1v1h-1zM90 20h1v1h-1zM96 20h1v1h-1zM54 19h1v1h-1zM57 19h1v1h-1zM44 18h1v1h-1zM55 18h1v1h-1zM82 18h2v1h-2zM87 17h1v1h-1zM43 16h1v1h-1zM43 15h1v1h-1zM46 15h1v1h-1zM48 15h1v1h-1zM76 15h1v1h-1zM79 15h1v1h-1zM43 14h1v1h-1zM61 14h1v1h-1zM74 14h1v1h-1zM53 13h1v1h-1zM85 13h2v1h-2zM91 13h1v1h-1zM49 12h1v1h-1zM60 12h1v1h-1zM77 12h1v1h-1zM66 11h1v1h-1zM49 10h1v1h-1zM44 9h1v1h-1zM48 9h2v1h-2zM63 9h1v1h-1zM79 9h1v1h-1zM91 8h1v1h-1zM59 7h1v1h-1zM80 7h1v1h-1zM44 6h1v1h-1zM62 6h1v1h-1zM81 6h1v1h-1zM96 6h1v1h-1zM56 5h1v1h-1zM62 5h1v1h-1zM81 5h1v1h-1zM95 5h1v1h-1zM44 4h1v1h-1zM70 4h1v1h-1zM90 3h1v1h-1zM64 2h1v1h-1zM86 2h1v1h-1zM97 2h1v1h-1zM56 1h1v1h-1zM98 1h1v1h-1zM88 0h1v1h-1z"/><path fill="#25858e" d="M85 98h1v1h-1zM95 98h1v1h-1zM81 97h1v1h-1zM57 96h1v1h-1zM71 96h1v1h-1zM84 96h1v1h-1zM49 95h1v1h-1zM56 95h1v1h-1zM48 94h1v1h-1zM50 93h1v1h-1zM49 92h1v1h-1zM53 92h1v1h-1zM49 91h1v1h-1zM45 90h1v1h-1zM47 90h1v1h-1zM68 90h1v1h-1zM74 90h1v1h-1zM81 90h1v1h-1zM69 88h1v1h-1zM54 87h1v1h-1zM59 87h1v1h-1zM66 87h1v1h-1zM80 87h1v1h-1zM85 87h1v1h-1zM70 86h1v1h-1zM86 86h1v1h-1zM63 85h1v1h-1zM66 85h1v1h-1zM85 85h1v1h-1zM87 85h1v1h-1zM90 83h1v1h-1zM49 82h1v1h-1zM53 82h1v1h-1zM57 82h1v1h-1zM49 80h2v1h-2zM57 80h1v1h-1zM68 80h1v1h-1zM70 80h1v1h-1zM72 80h2v1h-2zM55 79h1v1h-1zM97 79h1v1h-1zM67 78h1v1h-1zM48 77h1v1h-1zM70 77h1v1h-1zM98 77h1v1h-1zM51 76h1v1h-1zM70 76h1v1h-1zM46 75h1v1h-1zM58 75h1v1h-1zM65 75h1v1h-1zM86 75h1v1h-1zM57 74h1v1h-1zM45 72h2v1h-2zM66 72h1v1h-1zM78 72h1v1h-1zM88 72h1v1h-1zM60 71h2v1h-2zM83 71h1v1h-1zM94 71h1v1h-1zM86 70h1v1h-1zM55 69h1v1h-1zM65 69h1v1h-1zM93 69h1v1h-1zM54 68h1v1h-1zM69 68h1v1h-1zM73 68h1v1h-1zM47 67h1v1h-1zM51 67h1v1h-1zM69 67h1v1h-1zM45 66h1v1h-1zM68 65h1v1h-1zM82 65h1v1h-1zM75 63h1v1h-1zM55 62h1v1h-1zM74 62h1v1h-1zM76 62h1v1h-1zM60 61h1v1h-1zM74 61h1v1h-1zM55 60h1v1h-1zM71 60h1v1h-1zM96 60h1v1h-1zM50 59h1v1h-1zM55 59h1v1h-1zM63 59h1v1h-1zM93 59h1v1h-1zM49 58h1v1h-1zM44 57h1v1h-1zM46 57h1v1h-1zM52 57h1v1h-1zM84 57h1v1h-1zM87 57h1v1h-1zM92 56h1v1h-1zM59 55h1v1h-1zM64 55h1v1h-1zM70 55h1v1h-1zM81 55h1v1h-1zM46 54h1v1h-1zM50 54h1v1h-1zM60 54h1v1h-1zM62 54h1v1h-1zM51 53h1v1h-1zM57 53h1v1h-1zM79 53h1v1h-1zM92 52h2v1h-2zM47 51h1v1h-1zM50 51h1v1h-1zM68 51h1v1h-1zM84 51h1v1h-1zM87 51h1v1h-1zM44 49h2v1h-2zM60 49h1v1h-1zM86 49h1v1h-1zM48 48h1v1h-1zM69 48h1v1h-1zM72 48h1v1h-1zM79 48h1v1h-1zM48 47h1v1h-1zM62 47h1v1h-1zM73 47h1v1h-1zM47 46h1v1h-1zM51 46h1v1h-1zM53 46h1v1h-1zM51 43h1v1h-1zM75 43h1v1h-1zM77 43h1v1h-1zM81 42h1v1h-1zM84 42h1v1h-1zM73 41h1v1h-1zM44 40h1v1h-1zM68 39h1v1h-1zM47 38h1v1h-1zM52 38h1v1h-1zM75 38h1v1h-1zM86 38h1v1h-1zM57 37h1v1h-1zM70 37h1v1h-1zM81 37h1v1h-1zM88 36h1v1h-1zM63 35h1v1h-1zM65 35h1v1h-1zM61 34h1v1h-1zM69 34h1v1h-1zM49 33h1v1h-1zM55 33h1v1h-1zM68 33h1v1h-1zM59 32h1v1h-1zM51 31h1v1h-1zM76 30h1v1h-1zM95 30h1v1h-1zM53 28h1v1h-1zM92 28h1v1h-1zM46 27h1v1h-1zM50 27h1v1h-1zM62 27h1v1h-1zM69 27h1v1h-1zM94 27h1v1h-1zM51 26h1v1h-1zM55 25h1v1h-1zM52 24h1v1h-1zM47 23h1v1h-1zM54 23h1v1h-1zM73 23h1v1h-1zM57 22h1v1h-1zM51 21h1v1h-1zM48 20h2v1h-2zM62 20h1v1h-1zM70 20h2v1h-2zM86 20h1v1h-1zM94 20h1v1h-1zM66 19h1v1h-1zM45 18h1v1h-1zM47 18h1v1h-1zM54 18h1v1h-1zM93 18h1v1h-1zM48 17h1v1h-1zM69 17h1v1h-1zM63 16h3v1h-3zM76 16h1v1h-1zM65 15h1v1h-1zM90 15h1v1h-1zM64 14h1v1h-1zM81 14h1v1h-1zM80 13h1v1h-1zM55 12h1v1h-1zM98 12h1v1h-1zM47 11h1v1h-1zM49 11h1v1h-1zM60 11h1v1h-1zM62 11h1v1h-1zM50 10h1v1h-1zM84 10h1v1h-1zM96 10h1v1h-1zM46 9h1v1h-1zM56 9h1v1h-1zM96 9h1v1h-1zM50 8h1v1h-1zM68 8h1v1h-1zM74 8h1v1h-1zM49 7h1v1h-1zM90 7h1v1h-1zM98 7h1v1h-1zM49 6h1v1h-1zM54 6h1v1h-1zM85 6h1v1h-1zM98 6h1v1h-1zM86 5h1v1h-1zM47 4h1v1h-1zM97 4h1v1h-1zM56 3h1v1h-1zM76 3h1v1h-1zM67 2h1v1h-1zM46 1h1v1h-1zM63 0h2v1h-2zM76 0h1v1h-1z"/><path fill="#228d8d" d="M96 97h1v1h-1zM52 96h1v1h-1zM65 96h1v1h-1zM89 96h1v1h-1zM64 95h1v1h-1zM66 95h1v1h-1zM93 95h1v1h-1zM95 94h1v1h-1zM51 93h1v1h-1zM70 93h1v1h-1zM57 92h1v1h-1zM68 92h1v1h-1zM59 90h1v1h-1zM65 90h1v1h-1zM50 89h1v1h-1zM71 89h1v1h-1zM53 88h1v1h-1zM85 88h1v1h-1zM87 88h1v1h-1zM60 87h1v1h-1zM67 87h1v1h-1zM89 85h1v1h-1zM54 84h1v1h-1zM68 84h3v1h-3zM48 83h1v1h-1zM51 82h1v1h-1zM56 82h1v1h-1zM80 82h1v1h-1zM49 81h1v1h-1zM51 81h1v1h-1zM87 81h1v1h-1zM55 80h1v1h-1zM79 80h1v1h-1zM83 79h1v1h-1zM50 78h1v1h-1zM76 78h1v1h-1zM90 78h1v1h-1zM50 77h1v1h-1zM54 77h1v1h-1zM94 77h2v1h-2zM96 76h1v1h-1zM75 75h1v1h-1zM54 74h1v1h-1zM70 73h1v1h-1zM77 72h1v1h-1zM53 71h1v1h-1zM56 71h1v1h-1zM63 71h1v1h-1zM85 71h1v1h-1zM87 71h1v1h-1zM92 71h1v1h-1zM61 70h1v1h-1zM76 70h2v1h-2zM50 67h1v1h-1zM84 67h1v1h-1zM54 66h1v1h-1zM57 66h2v1h-2zM60 66h1v1h-1zM66 66h1v1h-1zM77 66h1v1h-1zM97 66h1v1h-1zM52 65h1v1h-1zM69 65h1v1h-1zM87 65h1v1h-1zM50 62h1v1h-1zM57 62h2v1h-2zM86 62h1v1h-1zM98 62h1v1h-1zM61 61h1v1h-1zM64 61h1v1h-1zM50 60h1v1h-1zM57 59h2v1h-2zM69 59h1v1h-1zM75 59h1v1h-1zM50 58h1v1h-1zM52 58h1v1h-1zM57 58h2v1h-2zM82 58h1v1h-1zM85 58h1v1h-1zM71 56h1v1h-1zM77 56h1v1h-1zM93 56h1v1h-1zM52 55h1v1h-1zM65 55h1v1h-1zM77 55h1v1h-1zM92 55h1v1h-1zM51 54h1v1h-1zM69 54h1v1h-1zM86 54h1v1h-1zM68 53h1v1h-1zM92 53h1v1h-1zM55 52h1v1h-1zM69 52h1v1h-1zM74 52h1v1h-1zM50 50h1v1h-1zM87 50h1v1h-1zM49 49h1v1h-1zM93 49h1v1h-1zM64 48h1v1h-1zM97 48h1v1h-1zM51 47h1v1h-1zM67 47h1v1h-1zM89 47h1v1h-1zM94 47h1v1h-1zM55 46h1v1h-1zM59 46h1v1h-1zM87 46h1v1h-1zM65 45h1v1h-1zM98 45h1v1h-1zM53 44h1v1h-1zM61 44h1v1h-1zM72 43h1v1h-1zM78 43h1v1h-1zM85 43h1v1h-1zM58 42h1v1h-1zM61 42h1v1h-1zM87 42h1v1h-1zM50 41h1v1h-1zM76 41h1v1h-1zM76 40h1v1h-1zM89 40h1v1h-1zM79 39h1v1h-1zM66 38h1v1h-1zM90 38h1v1h-1zM49 37h2v1h-2zM94 37h1v1h-1zM97 37h1v1h-1zM82 36h1v1h-1zM86 36h1v1h-1zM54 35h1v1h-1zM64 35h1v1h-1zM86 35h2v1h-2zM84 34h1v1h-1zM50 33h1v1h-1zM76 33h1v1h-1zM87 33h1v1h-1zM66 32h1v1h-1zM70 31h1v1h-1zM94 31h1v1h-1zM52 30h1v1h-1zM70 30h1v1h-1zM80 30h1v1h-1zM53 29h1v1h-1zM55 29h1v1h-1zM49 28h1v1h-1zM67 28h1v1h-1zM70 28h1v1h-1zM77 28h1v1h-1zM69 26h1v1h-1zM77 26h1v1h-1zM57 25h1v1h-1zM65 25h1v1h-1zM67 25h2v1h-2zM76 25h1v1h-1zM85 25h1v1h-1zM67 23h1v1h-1zM86 23h1v1h-1zM96 23h1v1h-1zM98 23h1v1h-1zM78 22h1v1h-1zM65 21h1v1h-1zM77 21h1v1h-1zM50 20h1v1h-1zM54 20h1v1h-1zM67 20h1v1h-1zM74 20h1v1h-1zM85 20h1v1h-1zM52 19h1v1h-1zM58 19h1v1h-1zM56 17h1v1h-1zM49 16h1v1h-1zM58 16h1v1h-1zM49 15h1v1h-1zM51 15h1v1h-1zM56 15h1v1h-1zM51 14h1v1h-1zM54 14h1v1h-1zM67 14h1v1h-1zM61 13h1v1h-1zM77 13h1v1h-1zM53 12h1v1h-1zM57 12h1v1h-1zM65 12h1v1h-1zM87 12h1v1h-1zM59 11h1v1h-1zM61 11h1v1h-1zM73 10h1v1h-1zM86 10h1v1h-1zM64 9h1v1h-1zM64 8h1v1h-1zM73 7h1v1h-1zM78 7h1v1h-1zM85 7h1v1h-1zM60 6h1v1h-1zM74 6h1v1h-1zM89 6h1v1h-1zM50 5h1v1h-1zM57 5h1v1h-1zM63 4h1v1h-1zM95 4h1v1h-1zM52 3h1v1h-1zM59 3h1v1h-1zM67 3h1v1h-1zM74 3h1v1h-1zM82 3h1v1h-1zM61 2h1v1h-1zM78 2h1v1h-1zM85 2h1v1h-1z"/><path fill="#1f948c" d="M62 97h1v1h-1zM65 97h1v1h-1zM75 97h1v1h-1zM98 96h1v1h-1zM59 95h1v1h-1zM61 95h1v1h-1zM58 94h1v1h-1zM89 94h1v1h-1zM96 93h1v1h-1zM62 92h1v1h-1zM70 91h1v1h-1zM62 89h1v1h-1zM73 88h1v1h-1zM94 88h1v1h-1zM53 87h1v1h-1zM57 86h1v1h-1zM74 85h1v1h-1zM61 83h1v1h-1zM54 80h1v1h-1zM69 80h1v1h-1zM94 80h1v1h-1zM96 80h1v1h-1zM98 79h1v1h-1zM51 78h1v1h-1zM56 78h1v1h-1zM64 78h1v1h-1zM69 78h1v1h-1zM51 77h1v1h-1zM72 77h1v1h-1zM66 76h1v1h-1zM57 75h1v1h-1zM71 74h1v1h-1zM57 73h1v1h-1zM86 73h1v1h-1zM50 72h1v1h-1zM68 72h1v1h-1zM62 71h1v1h-1zM69 70h1v1h-1zM79 70h1v1h-1zM81 70h1v1h-1zM60 69h1v1h-1zM80 69h1v1h-1zM53 68h1v1h-1zM61 68h1v1h-1zM84 68h1v1h-1zM86 68h1v1h-1zM53 67h1v1h-1zM63 66h1v1h-1zM74 66h2v1h-2zM80 66h1v1h-1zM89 66h1v1h-1zM63 65h1v1h-1zM94 65h1v1h-1zM63 64h1v1h-1zM86 64h1v1h-1zM63 63h1v1h-1zM65 63h1v1h-1zM68 63h1v1h-1zM70 63h1v1h-1zM61 62h1v1h-1zM72 62h1v1h-1zM90 61h1v1h-1zM51 60h1v1h-1zM70 60h1v1h-1zM54 59h1v1h-1zM59 59h1v1h-1zM67 59h1v1h-1zM72 59h1v1h-1zM74 59h1v1h-1zM64 58h1v1h-1zM53 57h1v1h-1zM58 56h1v1h-1zM61 56h1v1h-1zM88 56h1v1h-1zM90 56h1v1h-1zM51 55h1v1h-1zM58 55h1v1h-1zM55 54h1v1h-1zM68 54h1v1h-1zM91 54h1v1h-1zM53 53h1v1h-1zM61 53h1v1h-1zM70 53h1v1h-1zM76 53h1v1h-1zM66 52h1v1h-1zM88 51h1v1h-1zM64 49h1v1h-1zM67 49h1v1h-1zM77 49h1v1h-1zM80 48h1v1h-1zM83 48h1v1h-1zM58 47h1v1h-1zM95 47h1v1h-1zM54 46h1v1h-1zM64 46h1v1h-1zM58 45h1v1h-1zM55 43h1v1h-1zM61 43h1v1h-1zM63 43h1v1h-1zM80 43h1v1h-1zM57 41h1v1h-1zM66 41h1v1h-1zM86 41h1v1h-1zM54 40h1v1h-1zM56 40h1v1h-1zM74 40h1v1h-1zM55 39h2v1h-2zM82 39h1v1h-1zM53 38h2v1h-2zM73 38h2v1h-2zM76 38h1v1h-1zM85 38h1v1h-1zM60 37h1v1h-1zM69 37h1v1h-1zM87 37h1v1h-1zM77 36h1v1h-1zM53 34h1v1h-1zM73 34h1v1h-1zM89 33h1v1h-1zM64 32h1v1h-1zM77 32h1v1h-1zM98 32h1v1h-1zM55 30h1v1h-1zM60 29h1v1h-1zM68 29h1v1h-1zM60 28h1v1h-1zM63 28h1v1h-1zM77 27h1v1h-1zM81 27h1v1h-1zM83 27h3v1h-3zM87 27h1v1h-1zM56 26h1v1h-1zM59 25h1v1h-1zM83 25h1v1h-1zM63 24h1v1h-1zM67 24h1v1h-1zM78 24h1v1h-1zM82 24h1v1h-1zM87 24h1v1h-1zM68 23h1v1h-1zM74 22h1v1h-1zM87 22h1v1h-1zM60 21h1v1h-1zM56 20h1v1h-1zM61 20h1v1h-1zM72 20h1v1h-1zM52 18h1v1h-1zM71 17h1v1h-1zM79 17h1v1h-1zM63 15h1v1h-1zM85 15h1v1h-1zM55 14h1v1h-1zM59 14h1v1h-1zM51 12h1v1h-1zM54 12h1v1h-1zM78 12h1v1h-1zM69 11h1v1h-1zM54 10h1v1h-1zM57 10h1v1h-1zM59 10h1v1h-1zM66 9h1v1h-1zM75 9h1v1h-1zM51 8h1v1h-1zM51 7h1v1h-1zM95 7h1v1h-1zM51 6h1v1h-1zM66 6h1v1h-1zM53 5h1v1h-1zM67 5h1v1h-1zM65 3h1v1h-1zM73 3h1v1h-1zM80 3h1v1h-1zM57 2h1v1h-1zM71 2h1v1h-1zM50 1h1v1h-1zM87 1h1v1h-1zM96 1h1v1h-1zM95 0h1v1h-1z"/><path fill="#1e9c89" d="M74 98h1v1h-1zM58 97h1v1h-1zM59 96h1v1h-1zM65 95h1v1h-1zM82 95h2v1h-2zM67 94h1v1h-1zM77 94h2v1h-2zM93 94h1v1h-1zM59 93h1v1h-1zM95 92h1v1h-1zM66 91h2v1h-2zM86 91h1v1h-1zM92 91h1v1h-1zM84 90h1v1h-1zM95 89h1v1h-1zM98 88h1v1h-1zM79 87h1v1h-1zM55 85h1v1h-1zM82 84h1v1h-1zM58 83h1v1h-1zM70 83h1v1h-1zM76 83h1v1h-1zM81 83h1v1h-1zM97 83h1v1h-1zM70 82h1v1h-1zM73 82h1v1h-1zM89 81h1v1h-1zM58 80h1v1h-1zM59 79h1v1h-1zM74 78h1v1h-1zM91 78h1v1h-1zM65 77h1v1h-1zM81 77h1v1h-1zM83 77h1v1h-1zM55 76h1v1h-1zM89 76h1v1h-1zM94 76h1v1h-1zM75 74h1v1h-1zM55 73h1v1h-1zM59 73h1v1h-1zM67 73h1v1h-1zM81 73h1v1h-1zM85 73h1v1h-1zM98 73h1v1h-1zM60 72h1v1h-1zM67 72h1v1h-1zM74 72h1v1h-1zM76 72h1v1h-1zM90 72h1v1h-1zM69 71h1v1h-1zM63 70h1v1h-1zM71 70h1v1h-1zM85 70h1v1h-1zM94 70h1v1h-1zM66 68h1v1h-1zM82 68h1v1h-1zM56 67h1v1h-1zM56 66h1v1h-1zM79 66h1v1h-1zM58 65h1v1h-1zM83 65h1v1h-1zM65 62h1v1h-1zM87 62h1v1h-1zM54 61h1v1h-1zM81 61h1v1h-1zM77 59h1v1h-1zM84 59h1v1h-1zM87 59h1v1h-1zM70 58h2v1h-2zM79 58h1v1h-1zM89 58h1v1h-1zM68 57h1v1h-1zM55 56h1v1h-1zM62 56h1v1h-1zM76 56h1v1h-1zM66 55h1v1h-1zM78 55h1v1h-1zM58 54h2v1h-2zM87 54h1v1h-1zM65 53h1v1h-1zM96 53h1v1h-1zM58 52h1v1h-1zM95 52h1v1h-1zM61 51h1v1h-1zM78 51h1v1h-1zM82 50h1v1h-1zM58 49h1v1h-1zM90 48h1v1h-1zM73 46h1v1h-1zM81 46h1v1h-1zM88 46h1v1h-1zM54 45h1v1h-1zM56 45h1v1h-1zM68 45h1v1h-1zM70 45h2v1h-2zM78 45h1v1h-1zM80 45h1v1h-1zM84 45h1v1h-1zM64 44h1v1h-1zM59 43h1v1h-1zM82 43h1v1h-1zM59 41h1v1h-1zM97 41h1v1h-1zM53 40h1v1h-1zM61 40h1v1h-1zM94 40h1v1h-1zM60 39h1v1h-1zM75 39h1v1h-1zM58 38h1v1h-1zM80 38h1v1h-1zM82 38h1v1h-1zM96 38h1v1h-1zM55 37h1v1h-1zM79 37h1v1h-1zM85 37h1v1h-1zM58 36h1v1h-1zM63 36h1v1h-1zM73 36h1v1h-1zM80 36h1v1h-1zM54 32h1v1h-1zM89 32h1v1h-1zM55 31h1v1h-1zM68 31h1v1h-1zM63 29h1v1h-1zM66 29h1v1h-1zM77 29h1v1h-1zM54 28h1v1h-1zM58 28h1v1h-1zM75 28h1v1h-1zM81 28h1v1h-1zM58 27h1v1h-1zM78 27h1v1h-1zM61 26h1v1h-1zM91 26h1v1h-1zM58 24h1v1h-1zM75 23h1v1h-1zM87 23h1v1h-1zM73 22h1v1h-1zM75 22h1v1h-1zM66 21h1v1h-1zM79 21h1v1h-1zM57 20h1v1h-1zM75 20h1v1h-1zM93 20h1v1h-1zM53 19h1v1h-1zM62 19h1v1h-1zM59 17h1v1h-1zM73 17h1v1h-1zM72 16h1v1h-1zM84 16h1v1h-1zM97 15h1v1h-1zM60 14h1v1h-1zM55 13h1v1h-1zM79 13h1v1h-1zM82 13h1v1h-1zM61 12h1v1h-1zM72 12h1v1h-1zM70 11h1v1h-1zM53 10h1v1h-1zM75 10h1v1h-1zM69 9h1v1h-1zM66 8h1v1h-1zM70 8h1v1h-1zM55 6h1v1h-1zM68 6h1v1h-1zM84 5h1v1h-1zM88 5h1v1h-1zM61 4h1v1h-1zM89 4h1v1h-1zM70 3h1v1h-1zM98 3h1v1h-1zM54 2h1v1h-1zM56 2h1v1h-1zM68 2h1v1h-1zM79 2h1v1h-1zM92 2h1v1h-1zM55 1h1v1h-1zM67 1h1v1h-1zM97 0h1v1h-1z"/><path fill="#20a386" d="M60 98h1v1h-1zM68 98h1v1h-1zM66 97h1v1h-1zM92 95h1v1h-1zM68 94h1v1h-1zM82 93h1v1h-1zM90 93h1v1h-1zM88 92h1v1h-1zM77 91h1v1h-1zM80 91h1v1h-1zM88 91h1v1h-1zM75 89h1v1h-1zM63 88h1v1h-1zM74 88h1v1h-1zM86 88h1v1h-1zM62 87h1v1h-1zM95 87h1v1h-1zM63 86h1v1h-1zM93 86h1v1h-1zM57 85h1v1h-1zM59 85h1v1h-1zM58 84h1v1h-1zM83 84h1v1h-1zM67 83h1v1h-1zM92 83h2v1h-2zM60 82h1v1h-1zM95 82h1v1h-1zM62 81h1v1h-1zM65 80h1v1h-1zM88 79h1v1h-1zM65 78h1v1h-1zM82 77h1v1h-1zM69 76h1v1h-1zM67 75h1v1h-1zM74 74h1v1h-1zM77 73h1v1h-1zM69 72h1v1h-1zM89 72h1v1h-1zM74 71h1v1h-1zM82 70h1v1h-1zM93 70h1v1h-1zM89 69h1v1h-1zM71 68h1v1h-1zM83 64h1v1h-1zM62 62h1v1h-1zM63 61h1v1h-1zM71 61h1v1h-1zM98 61h1v1h-1zM57 60h1v1h-1zM63 60h1v1h-1zM77 60h2v1h-2zM87 60h1v1h-1zM89 59h1v1h-1zM57 57h1v1h-1zM68 56h1v1h-1zM91 56h1v1h-1zM69 55h1v1h-1zM75 52h1v1h-1zM88 52h1v1h-1zM83 51h1v1h-1zM60 50h1v1h-1zM74 50h1v1h-1zM58 48h2v1h-2zM89 48h1v1h-1zM91 48h1v1h-1zM65 46h1v1h-1zM69 45h1v1h-1zM88 43h1v1h-1zM64 41h1v1h-1zM62 40h1v1h-1zM83 40h2v1h-2zM62 39h1v1h-1zM66 39h1v1h-1zM58 37h1v1h-1zM98 36h1v1h-1zM56 35h1v1h-1zM70 35h1v1h-1zM59 34h1v1h-1zM64 34h1v1h-1zM77 34h1v1h-1zM64 33h1v1h-1zM58 31h1v1h-1zM60 31h1v1h-1zM75 31h1v1h-1zM96 31h1v1h-1zM57 30h1v1h-1zM75 30h1v1h-1zM85 30h1v1h-1zM57 29h1v1h-1zM75 29h1v1h-1zM78 28h1v1h-1zM97 28h1v1h-1zM71 27h1v1h-1zM59 26h1v1h-1zM66 26h1v1h-1zM83 26h1v1h-1zM75 25h1v1h-1zM73 24h1v1h-1zM86 24h1v1h-1zM59 23h1v1h-1zM95 23h1v1h-1zM65 22h1v1h-1zM84 21h1v1h-1zM77 20h1v1h-1zM65 19h1v1h-1zM81 19h1v1h-1zM66 17h1v1h-1zM89 17h2v1h-2zM56 16h1v1h-1zM62 15h1v1h-1zM73 15h1v1h-1zM87 15h1v1h-1zM58 14h1v1h-1zM71 14h1v1h-1zM79 14h1v1h-1zM68 13h1v1h-1zM71 13h1v1h-1zM92 13h1v1h-1zM77 11h1v1h-1zM80 11h1v1h-1zM95 11h1v1h-1zM67 10h1v1h-1zM87 10h1v1h-1zM61 9h1v1h-1zM77 9h1v1h-1zM80 9h1v1h-1zM61 8h1v1h-1zM65 6h1v1h-1zM81 3h1v1h-1zM82 2h1v1h-1zM58 1h1v1h-1zM63 1h2v1h-2zM56 0h1v1h-1zM79 0h1v1h-1z"/><path fill="#25ab82" d="M70 98h1v1h-1zM89 98h1v1h-1zM59 97h1v1h-1zM63 97h1v1h-1zM68 97h1v1h-1zM83 97h1v1h-1zM62 96h1v1h-1zM68 96h1v1h-1zM76 94h1v1h-1zM98 94h1v1h-1zM77 93h1v1h-1zM83 93h1v1h-1zM59 92h1v1h-1zM67 92h1v1h-1zM97 92h1v1h-1zM87 91h1v1h-1zM61 89h1v1h-1zM67 89h1v1h-1zM70 89h1v1h-1zM81 89h1v1h-1zM97 89h1v1h-1zM60 88h1v1h-1zM79 88h1v1h-1zM88 88h1v1h-1zM87 87h1v1h-1zM65 84h1v1h-1zM81 84h1v1h-1zM85 84h1v1h-1zM75 83h1v1h-1zM84 82h1v1h-1zM85 81h1v1h-1zM61 80h1v1h-1zM64 80h1v1h-1zM85 80h1v1h-1zM65 79h1v1h-1zM95 79h1v1h-1zM63 77h1v1h-1zM62 72h1v1h-1zM67 70h1v1h-1zM80 70h1v1h-1zM84 70h1v1h-1zM98 70h1v1h-1zM62 68h1v1h-1zM88 68h1v1h-1zM66 67h1v1h-1zM75 67h1v1h-1zM67 66h1v1h-1zM81 66h1v1h-1zM83 66h1v1h-1zM75 65h1v1h-1zM89 64h1v1h-1zM95 64h1v1h-1zM61 63h1v1h-1zM71 63h2v1h-2zM77 63h1v1h-1zM95 63h1v1h-1zM85 62h1v1h-1zM90 62h1v1h-1zM92 62h1v1h-1zM73 61h1v1h-1zM61 60h2v1h-2zM68 60h1v1h-1zM61 59h1v1h-1zM66 58h1v1h-1zM61 57h1v1h-1zM66 57h1v1h-1zM70 57h1v1h-1zM86 55h1v1h-1zM96 55h1v1h-1zM67 54h1v1h-1zM64 53h1v1h-1zM69 53h1v1h-1zM83 53h1v1h-1zM90 53h1v1h-1zM63 52h1v1h-1zM78 52h1v1h-1zM63 51h1v1h-1zM76 51h1v1h-1zM95 51h1v1h-1zM85 49h1v1h-1zM87 49h1v1h-1zM73 48h1v1h-1zM76 48h1v1h-1zM84 48h1v1h-1zM66 47h1v1h-1zM76 46h1v1h-1zM79 46h1v1h-1zM89 46h1v1h-1zM81 45h1v1h-1zM89 45h1v1h-1zM68 44h1v1h-1zM70 44h1v1h-1zM91 44h1v1h-1zM67 42h1v1h-1zM70 42h1v1h-1zM78 41h1v1h-1zM87 41h1v1h-1zM69 40h1v1h-1zM96 40h1v1h-1zM76 39h1v1h-1zM98 37h1v1h-1zM66 36h1v1h-1zM69 36h1v1h-1zM96 36h1v1h-1zM66 35h1v1h-1zM70 34h1v1h-1zM63 33h1v1h-1zM67 33h1v1h-1zM73 33h1v1h-1zM87 32h1v1h-1zM63 31h1v1h-1zM66 31h1v1h-1zM69 31h1v1h-1zM64 30h1v1h-1zM98 29h1v1h-1zM79 28h1v1h-1zM85 28h1v1h-1zM82 27h1v1h-1zM85 26h1v1h-1zM93 25h1v1h-1zM70 24h1v1h-1zM79 23h1v1h-1zM82 23h1v1h-1zM91 23h1v1h-1zM76 22h1v1h-1zM63 21h1v1h-1zM92 21h1v1h-1zM71 19h1v1h-1zM62 17h1v1h-1zM70 17h1v1h-1zM74 17h1v1h-1zM78 17h1v1h-1zM94 17h1v1h-1zM74 16h1v1h-1zM81 15h1v1h-1zM98 15h1v1h-1zM63 14h1v1h-1zM70 14h1v1h-1zM73 14h1v1h-1zM64 13h1v1h-1zM69 13h2v1h-2zM73 13h1v1h-1zM63 12h1v1h-1zM75 12h1v1h-1zM93 11h1v1h-1zM68 10h1v1h-1zM70 10h1v1h-1zM65 9h1v1h-1zM67 9h1v1h-1zM95 9h1v1h-1zM82 8h1v1h-1zM67 6h1v1h-1zM72 4h1v1h-1zM71 3h1v1h-1zM88 3h1v1h-1zM76 2h1v1h-1zM80 2h1v1h-1zM65 1h1v1h-1zM92 1h1v1h-1zM73 0h1v1h-1zM85 0h1v1h-1z"/><path fill="#2db27d" d="M66 98h2v1h-2zM70 96h1v1h-1zM81 96h1v1h-1zM88 95h1v1h-1zM75 92h1v1h-1zM83 92h1v1h-1zM71 91h1v1h-1zM73 91h1v1h-1zM77 89h1v1h-1zM86 89h1v1h-1zM82 88h1v1h-1zM69 87h1v1h-1zM76 87h1v1h-1zM96 87h1v1h-1zM77 86h1v1h-1zM85 86h1v1h-1zM75 85h1v1h-1zM84 85h1v1h-1zM83 83h1v1h-1zM89 83h1v1h-1zM91 82h1v1h-1zM83 81h1v1h-1zM93 81h1v1h-1zM71 79h1v1h-1zM63 78h1v1h-1zM66 78h1v1h-1zM68 78h1v1h-1zM78 76h1v1h-1zM87 76h1v1h-1zM66 75h1v1h-1zM77 75h1v1h-1zM84 75h1v1h-1zM70 74h1v1h-1zM71 73h1v1h-1zM81 72h2v1h-2zM75 71h1v1h-1zM88 70h1v1h-1zM62 69h1v1h-1zM70 69h1v1h-1zM90 68h1v1h-1zM65 66h1v1h-1zM68 66h1v1h-1zM70 66h1v1h-1zM92 66h1v1h-1zM79 65h2v1h-2zM88 65h1v1h-1zM70 64h1v1h-1zM85 64h1v1h-1zM95 60h1v1h-1zM65 59h1v1h-1zM85 59h1v1h-1zM92 59h1v1h-1zM98 59h1v1h-1zM72 58h1v1h-1zM65 57h1v1h-1zM79 57h1v1h-1zM63 56h1v1h-1zM81 56h1v1h-1zM74 55h1v1h-1zM82 55h1v1h-1zM74 54h1v1h-1zM88 54h1v1h-1zM71 53h1v1h-1zM82 51h1v1h-1zM98 51h1v1h-1zM72 50h1v1h-1zM75 50h1v1h-1zM77 50h1v1h-1zM80 50h1v1h-1zM84 49h1v1h-1zM67 46h1v1h-1zM72 46h1v1h-1zM93 45h1v1h-1zM78 44h1v1h-1zM87 43h1v1h-1zM63 42h1v1h-1zM82 42h1v1h-1zM91 41h1v1h-1zM92 40h1v1h-1zM72 39h1v1h-1zM78 39h1v1h-1zM84 39h1v1h-1zM93 39h1v1h-1zM64 38h2v1h-2zM83 38h1v1h-1zM66 37h1v1h-1zM77 35h1v1h-1zM80 35h1v1h-1zM88 35h1v1h-1zM95 35h1v1h-1zM95 34h1v1h-1zM70 33h1v1h-1zM75 33h1v1h-1zM67 31h1v1h-1zM86 30h1v1h-1zM94 30h1v1h-1zM84 29h1v1h-1zM68 27h1v1h-1zM80 26h1v1h-1zM86 25h1v1h-1zM76 24h1v1h-1zM69 23h1v1h-1zM66 22h1v1h-1zM76 21h1v1h-1zM93 21h1v1h-1zM68 20h1v1h-1zM98 20h1v1h-1zM88 19h1v1h-1zM92 19h1v1h-1zM96 19h1v1h-1zM67 18h1v1h-1zM88 18h1v1h-1zM90 18h1v1h-1zM68 17h1v1h-1zM77 17h1v1h-1zM64 15h1v1h-1zM71 15h1v1h-1zM92 14h1v1h-1zM90 13h1v1h-1zM67 12h1v1h-1zM80 12h1v1h-1zM88 12h1v1h-1zM89 11h1v1h-1zM77 10h1v1h-1zM92 9h1v1h-1zM80 8h1v1h-1zM89 8h1v1h-1zM69 4h1v1h-1zM80 4h1v1h-1zM84 4h1v1h-1zM94 4h1v1h-1zM96 2h1v1h-1zM67 0h2v1h-2zM92 0h1v1h-1z"/><path fill="#38b977" d="M83 98h2v1h-2zM73 97h1v1h-1zM88 96h1v1h-1zM67 95h1v1h-1zM94 95h1v1h-1zM66 94h1v1h-1zM93 93h1v1h-1zM76 92h1v1h-1zM89 91h1v1h-1zM95 91h1v1h-1zM69 90h1v1h-1zM97 90h1v1h-1zM79 89h1v1h-1zM88 89h1v1h-1zM77 88h1v1h-1zM68 87h1v1h-1zM82 87h1v1h-1zM81 86h1v1h-1zM92 86h1v1h-1zM71 85h1v1h-1zM92 85h1v1h-1zM67 84h1v1h-1zM79 84h1v1h-1zM84 83h1v1h-1zM94 83h1v1h-1zM98 82h1v1h-1zM84 81h1v1h-1zM75 78h1v1h-1zM80 77h1v1h-1zM91 77h1v1h-1zM90 75h1v1h-1zM83 74h1v1h-1zM97 73h1v1h-1zM92 72h1v1h-1zM73 70h1v1h-1zM90 70h1v1h-1zM79 69h1v1h-1zM85 69h1v1h-1zM75 68h1v1h-1zM89 68h1v1h-1zM85 66h1v1h-1zM91 65h1v1h-1zM67 64h2v1h-2zM71 64h1v1h-1zM74 63h1v1h-1zM70 62h1v1h-1zM78 62h1v1h-1zM82 62h1v1h-1zM73 60h1v1h-1zM89 57h1v1h-1zM96 56h1v1h-1zM83 52h1v1h-1zM75 51h1v1h-1zM79 50h1v1h-1zM93 50h1v1h-1zM95 50h3v1h-3zM78 49h2v1h-2zM71 48h1v1h-1zM77 44h1v1h-1zM90 44h1v1h-1zM73 43h2v1h-2zM84 43h1v1h-1zM73 42h2v1h-2zM79 42h1v1h-1zM98 42h1v1h-1zM75 41h1v1h-1zM90 41h1v1h-1zM67 39h1v1h-1zM70 39h1v1h-1zM76 36h1v1h-1zM81 36h1v1h-1zM72 35h1v1h-1zM97 35h1v1h-1zM72 34h1v1h-1zM76 34h1v1h-1zM87 34h1v1h-1zM91 33h1v1h-1zM85 32h1v1h-1zM74 31h1v1h-1zM71 30h1v1h-1zM74 30h1v1h-1zM73 29h2v1h-2zM80 28h1v1h-1zM72 27h1v1h-1zM89 27h1v1h-1zM68 26h1v1h-1zM75 26h1v1h-1zM94 25h1v1h-1zM96 24h1v1h-1zM68 22h1v1h-1zM71 22h1v1h-1zM69 21h1v1h-1zM95 21h1v1h-1zM94 18h1v1h-1zM83 17h1v1h-1zM72 15h1v1h-1zM96 15h1v1h-1zM97 14h1v1h-1zM97 13h1v1h-1zM86 11h1v1h-1zM92 11h1v1h-1zM85 10h1v1h-1zM90 10h1v1h-1zM93 9h1v1h-1zM78 8h1v1h-1zM76 7h1v1h-1zM97 7h1v1h-1zM70 6h1v1h-1zM70 5h1v1h-1zM73 5h1v1h-1zM76 4h1v1h-1zM88 4h1v1h-1zM69 2h2v1h-2zM72 2h1v1h-1zM84 2h1v1h-1zM78 1h2v1h-2zM97 1h1v1h-1zM98 0h1v1h-1z"/><path fill="#46c06f" d="M87 98h1v1h-1zM97 98h1v1h-1zM96 95h1v1h-1zM94 94h1v1h-1zM86 93h1v1h-1zM78 91h1v1h-1zM69 89h1v1h-1zM80 89h1v1h-1zM91 88h1v1h-1zM82 85h1v1h-1zM76 84h1v1h-1zM94 84h1v1h-1zM79 79h1v1h-1zM81 79h1v1h-1zM87 79h1v1h-1zM79 78h1v1h-1zM76 75h1v1h-1zM85 74h1v1h-1zM80 72h1v1h-1zM79 71h1v1h-1zM82 71h1v1h-1zM77 69h1v1h-1zM88 69h1v1h-1zM92 69h1v1h-1zM81 68h1v1h-1zM91 67h1v1h-1zM93 65h1v1h-1zM84 63h1v1h-1zM89 63h1v1h-1zM86 61h1v1h-1zM69 57h1v1h-1zM82 57h1v1h-1zM75 56h1v1h-1zM79 56h1v1h-1zM94 56h1v1h-1zM71 55h1v1h-1zM87 55h1v1h-1zM98 55h1v1h-1zM85 54h1v1h-1zM89 53h1v1h-1zM79 52h1v1h-1zM94 52h1v1h-1zM86 51h1v1h-1zM92 50h1v1h-1zM91 49h1v1h-1zM74 48h1v1h-1zM81 48h1v1h-1zM95 48h1v1h-1zM98 48h1v1h-1zM79 47h1v1h-1zM84 47h1v1h-1zM87 47h1v1h-1zM74 46h1v1h-1zM76 44h1v1h-1zM83 44h1v1h-1zM74 41h1v1h-1zM83 41h2v1h-2zM92 41h1v1h-1zM98 41h1v1h-1zM70 40h1v1h-1zM80 40h1v1h-1zM84 38h1v1h-1zM80 37h1v1h-1zM92 37h1v1h-1zM90 36h1v1h-1zM73 35h1v1h-1zM81 35h1v1h-1zM74 34h1v1h-1zM96 33h1v1h-1zM76 32h1v1h-1zM82 32h1v1h-1zM84 30h1v1h-1zM98 30h1v1h-1zM69 29h1v1h-1zM72 25h1v1h-1zM93 22h1v1h-1zM74 21h1v1h-1zM85 21h1v1h-1zM79 20h1v1h-1zM74 18h1v1h-1zM76 18h1v1h-1zM84 18h1v1h-1zM97 18h1v1h-1zM70 16h1v1h-1zM83 14h2v1h-2zM88 14h1v1h-1zM87 11h1v1h-1zM94 11h1v1h-1zM95 10h1v1h-1zM95 8h1v1h-1zM87 7h1v1h-1zM89 7h1v1h-1zM93 7h1v1h-1zM97 6h1v1h-1zM74 5h1v1h-1zM87 5h1v1h-1zM90 5h1v1h-1zM74 2h1v1h-1zM80 0h1v1h-1z"/><path fill="#56c667" d="M90 98h1v1h-1zM75 96h1v1h-1zM79 96h1v1h-1zM75 90h1v1h-1zM85 90h1v1h-1zM88 90h1v1h-1zM93 90h1v1h-1zM94 89h1v1h-1zM89 87h1v1h-1zM76 86h1v1h-1zM96 86h1v1h-1zM71 84h1v1h-1zM73 84h1v1h-1zM86 84h1v1h-1zM86 83h1v1h-1zM88 83h1v1h-1zM77 80h1v1h-1zM84 79h1v1h-1zM80 78h1v1h-1zM88 78h1v1h-1zM78 77h1v1h-1zM76 76h1v1h-1zM87 75h1v1h-1zM86 74h1v1h-1zM94 74h1v1h-1zM75 73h1v1h-1zM79 73h1v1h-1zM83 73h1v1h-1zM90 73h1v1h-1zM80 71h1v1h-1zM91 71h1v1h-1zM75 70h1v1h-1zM83 70h1v1h-1zM83 69h1v1h-1zM73 66h1v1h-1zM85 65h1v1h-1zM83 63h1v1h-1zM97 61h1v1h-1zM91 60h1v1h-1zM82 54h1v1h-1zM89 54h1v1h-1zM77 53h1v1h-1zM87 53h1v1h-1zM89 51h1v1h-1zM90 50h1v1h-1zM74 49h1v1h-1zM81 49h1v1h-1zM95 49h1v1h-1zM75 47h1v1h-1zM80 47h1v1h-1zM79 45h1v1h-1zM82 44h1v1h-1zM92 43h1v1h-1zM88 42h1v1h-1zM88 38h1v1h-1zM91 38h1v1h-1zM92 36h1v1h-1zM89 35h1v1h-1zM86 33h1v1h-1zM89 31h1v1h-1zM87 29h1v1h-1zM91 29h1v1h-1zM93 27h1v1h-1zM82 26h1v1h-1zM89 26h1v1h-1zM96 26h1v1h-1zM77 25h1v1h-1zM98 25h1v1h-1zM89 24h1v1h-1zM80 23h1v1h-1zM84 23h1v1h-1zM93 23h1v1h-1zM77 19h1v1h-1zM80 17h1v1h-1zM96 17h1v1h-1zM80 16h1v1h-1zM93 16h1v1h-1zM83 15h2v1h-2zM75 13h1v1h-1zM74 12h1v1h-1zM89 12h1v1h-1zM81 11h1v1h-1zM71 10h1v1h-1zM81 10h1v1h-1zM92 10h1v1h-1zM82 9h1v1h-1zM83 8h1v1h-1zM88 8h1v1h-1zM83 7h1v1h-1zM88 7h1v1h-1zM80 6h1v1h-1zM86 6h1v1h-1zM88 6h1v1h-1zM79 3h1v1h-1zM81 1h1v1h-1z"/><path fill="#67cc5c" d="M96 98h1v1h-1zM90 97h1v1h-1zM80 95h1v1h-1zM89 95h1v1h-1zM85 94h1v1h-1zM79 93h1v1h-1zM84 93h1v1h-1zM87 93h1v1h-1zM91 92h1v1h-1zM94 92h1v1h-1zM81 88h1v1h-1zM75 86h1v1h-1zM87 86h1v1h-1zM90 86h1v1h-1zM78 85h1v1h-1zM88 85h1v1h-1zM80 83h1v1h-1zM77 82h1v1h-1zM81 82h1v1h-1zM80 81h1v1h-1zM91 81h1v1h-1zM78 79h1v1h-1zM85 77h1v1h-1zM98 76h1v1h-1zM88 74h1v1h-1zM89 71h1v1h-1zM89 70h1v1h-1zM74 69h1v1h-1zM96 69h1v1h-1zM76 66h1v1h-1zM95 65h1v1h-1zM76 61h1v1h-1zM94 61h1v1h-1zM94 60h1v1h-1zM78 57h1v1h-1zM98 57h1v1h-1zM84 53h1v1h-1zM97 53h1v1h-1zM94 51h1v1h-1zM96 48h1v1h-1zM78 46h1v1h-1zM94 46h1v1h-1zM95 45h1v1h-1zM79 44h1v1h-1zM86 44h1v1h-1zM76 43h1v1h-1zM79 43h1v1h-1zM81 41h1v1h-1zM86 40h1v1h-1zM89 38h1v1h-1zM93 38h2v1h-2zM78 35h1v1h-1zM78 34h1v1h-1zM75 32h1v1h-1zM95 31h1v1h-1zM87 30h1v1h-1zM97 27h1v1h-1zM87 26h1v1h-1zM95 26h1v1h-1zM97 25h1v1h-1zM83 24h1v1h-1zM93 24h1v1h-1zM83 23h1v1h-1zM78 21h1v1h-1zM76 19h1v1h-1zM91 18h1v1h-1zM84 17h1v1h-1zM78 16h1v1h-1zM82 16h1v1h-1zM89 16h1v1h-1zM78 13h1v1h-1zM79 12h1v1h-1zM76 11h1v1h-1zM85 11h1v1h-1zM82 10h1v1h-1zM81 7h1v1h-1zM94 7h1v1h-1zM94 6h1v1h-1zM78 4h1v1h-1z"/><path fill="#7ad151" d="M88 98h1v1h-1zM96 94h1v1h-1zM91 91h1v1h-1zM80 90h1v1h-1zM90 87h1v1h-1zM94 87h1v1h-1zM96 84h1v1h-1zM82 83h1v1h-1zM89 82h1v1h-1zM86 81h1v1h-1zM80 80h1v1h-1zM84 80h1v1h-1zM91 80h2v1h-2zM85 78h1v1h-1zM80 76h1v1h-1zM82 75h1v1h-1zM95 74h1v1h-1zM83 72h1v1h-1zM96 72h1v1h-1zM86 71h1v1h-1zM81 69h1v1h-1zM95 68h1v1h-1zM88 67h1v1h-1zM91 66h1v1h-1zM81 64h1v1h-1zM98 64h1v1h-1zM79 62h1v1h-1zM89 62h1v1h-1zM83 61h1v1h-1zM96 59h1v1h-1zM78 58h1v1h-1zM81 58h1v1h-1zM83 56h1v1h-1zM86 56h1v1h-1zM98 56h1v1h-1zM87 48h1v1h-1zM86 47h1v1h-1zM90 47h1v1h-1zM82 46h1v1h-1zM91 46h1v1h-1zM94 45h1v1h-1zM91 42h1v1h-1zM83 37h1v1h-1zM90 37h1v1h-1zM79 36h1v1h-1zM83 31h1v1h-1zM88 30h1v1h-1zM85 29h1v1h-1zM94 29h1v1h-1zM82 25h1v1h-1zM88 25h1v1h-1zM90 24h1v1h-1zM94 24h1v1h-1zM98 24h1v1h-1zM82 22h1v1h-1zM85 22h1v1h-1zM90 22h1v1h-1zM82 21h1v1h-1zM87 19h1v1h-1zM80 18h1v1h-1zM87 18h1v1h-1zM96 16h1v1h-1zM89 14h1v1h-1zM93 13h1v1h-1zM98 11h1v1h-1zM80 10h1v1h-1zM82 6h1v1h-1zM92 5h1v1h-1zM82 0h1v1h-1zM87 0h1v1h-1zM94 0h1v1h-1z"/><path fill="#8ed645" d="M93 98h1v1h-1zM89 97h1v1h-1zM83 96h1v1h-1zM86 96h1v1h-1zM84 94h1v1h-1zM92 93h1v1h-1zM94 93h1v1h-1zM90 92h1v1h-1zM93 91h1v1h-1zM91 89h1v1h-1zM88 87h1v1h-1zM85 82h1v1h-1zM92 82h1v1h-1zM94 82h1v1h-1zM98 81h1v1h-1zM89 80h1v1h-1zM87 77h1v1h-1zM86 76h1v1h-1zM98 72h1v1h-1zM84 71h1v1h-1zM97 68h1v1h-1zM81 67h1v1h-1zM82 66h1v1h-1zM90 66h1v1h-1zM87 64h1v1h-1zM97 62h1v1h-1zM85 61h1v1h-1zM93 60h1v1h-1zM86 57h1v1h-1zM83 55h1v1h-1zM97 52h1v1h-1zM92 49h1v1h-1zM87 45h1v1h-1zM98 44h1v1h-1zM86 43h1v1h-1zM93 43h1v1h-1zM95 40h1v1h-1zM83 39h1v1h-1zM83 36h1v1h-1zM89 36h1v1h-1zM91 32h1v1h-1zM84 31h1v1h-1zM83 30h1v1h-1zM96 29h1v1h-1zM96 28h1v1h-1zM91 27h1v1h-1zM95 27h1v1h-1zM93 26h1v1h-1zM84 25h1v1h-1zM87 25h1v1h-1zM92 22h1v1h-1zM97 20h1v1h-1zM82 19h1v1h-1zM85 19h1v1h-1zM91 19h1v1h-1zM98 19h1v1h-1zM98 18h1v1h-1zM82 17h1v1h-1zM85 17h1v1h-1zM86 16h1v1h-1zM96 14h1v1h-1zM89 13h1v1h-1zM84 12h1v1h-1zM90 12h1v1h-1zM84 11h1v1h-1zM88 10h1v1h-1zM83 9h1v1h-1zM98 8h1v1h-1zM95 6h1v1h-1zM83 4h1v1h-1zM90 4h1v1h-1zM85 1h1v1h-1z"/><path fill="#a2da37" d="M91 98h1v1h-1zM86 95h1v1h-1zM88 94h1v1h-1zM90 90h1v1h-1zM96 88h1v1h-1zM93 87h1v1h-1zM88 84h2v1h-2zM98 83h1v1h-1zM97 77h1v1h-1zM97 75h1v1h-1zM85 68h1v1h-1zM95 67h1v1h-1zM84 66h1v1h-1zM86 66h1v1h-1zM93 64h1v1h-1zM86 63h1v1h-1zM86 60h1v1h-1zM89 60h1v1h-1zM90 58h1v1h-1zM92 58h1v1h-1zM92 57h2v1h-2zM96 57h1v1h-1zM96 54h1v1h-1zM91 52h1v1h-1zM89 49h1v1h-1zM91 47h1v1h-1zM83 42h1v1h-1zM95 42h1v1h-1zM93 40h1v1h-1zM87 39h1v1h-1zM94 39h1v1h-1zM95 38h1v1h-1zM93 32h1v1h-1zM91 31h1v1h-1zM86 28h1v1h-1zM86 27h1v1h-1zM97 23h1v1h-1zM86 21h1v1h-1zM87 16h1v1h-1zM91 16h1v1h-1zM90 9h1v1h-1zM91 6h1v1h-1zM98 5h1v1h-1zM84 3h1v1h-1zM94 2h2v1h-2zM89 1h1v1h-1z"/><path fill="#b8de29" d="M91 84h2v1h-2zM87 82h1v1h-1zM97 80h1v1h-1zM89 79h1v1h-1zM95 71h1v1h-1zM98 71h1v1h-1zM95 70h1v1h-1zM97 70h1v1h-1zM89 65h1v1h-1zM97 65h1v1h-1zM98 63h1v1h-1zM92 48h1v1h-1zM97 47h1v1h-1zM91 45h1v1h-1zM90 43h1v1h-1zM90 42h1v1h-1zM88 40h1v1h-1zM89 39h1v1h-1zM88 37h1v1h-1zM96 37h1v1h-1zM89 34h1v1h-1zM93 33h1v1h-1zM91 30h1v1h-1zM97 29h1v1h-1zM89 25h1v1h-1zM88 20h1v1h-1zM94 15h1v1h-1zM94 14h1v1h-1zM93 10h1v1h-1zM89 9h1v1h-1zM91 7h1v1h-1zM94 3h1v1h-1zM89 2h1v1h-1z"/><path fill="#cde11d" d="M97 97h1v1h-1zM96 96h1v1h-1zM91 95h1v1h-1zM98 95h1v1h-1zM98 91h1v1h-1zM92 89h1v1h-1zM93 88h1v1h-1zM95 84h1v1h-1zM93 80h1v1h-1zM92 76h1v1h-1zM96 67h2v1h-2zM93 62h1v1h-1zM95 62h1v1h-1zM92 61h1v1h-1zM90 60h1v1h-1zM95 55h1v1h-1zM96 49h1v1h-1zM93 48h1v1h-1zM92 39h1v1h-1zM95 39h1v1h-1zM97 38h2v1h-2zM98 31h1v1h-1zM94 28h1v1h-1zM95 12h1v1h-1zM97 5h1v1h-1zM96 3h1v1h-1z"/><path fill="#e2e418" d="M98 86h1v1h-1zM98 80h1v1h-1zM98 74h1v1h-1zM96 70h1v1h-1zM97 64h1v1h-1zM96 62h1v1h-1zM98 50h1v1h-1zM96 41h1v1h-1zM93 19h1v1h-1zM92 17h1v1h-1zM95 14h1v1h-1z"/><path fill="#f6e620" d="M97 76h1v1h-1zM98 66h1v1h-1zM98 49h1v1h-1zM96 32h1v1h-1zM97 12h1v1h-1z"/></g></g></g><rect x="35.2" y="10.2" width="268.3" height="217.9" fill="none" stroke="#000" stroke-width="1"/><rect x="319.8" y="10.2" width="10.87" height="217.9" fill="url(#vg2)" stroke="#000" stroke-width="1"/><path d="M35.2 228.1h-3.5M35.2 228.1v3.5M35.2 184.08h-3.5M89.4 228.1v3.5M35.2 140.06h-3.5M143.6 228.1v3.5M35.2 96.04h-3.5M197.81 228.1v3.5M35.2 52.02h-3.5M252.01 228.1v3.5M330.67 228.1h3.5M330.67 183.86h3.5M330.67 139.61h3.5M330.67 95.37h3.5M330.67 51.13h3.5" stroke="#000" stroke-width=".8" fill="none"/><g class="mpl"><text x="27.1" y="232.3" text-anchor="end">0</text><text x="35.2" y="243.1" text-anchor="middle">0</text><text x="27.1" y="188.28" text-anchor="end">20</text><text x="89.4" y="243.1" text-anchor="middle">20</text><text x="27.1" y="144.26" text-anchor="end">40</text><text x="143.6" y="243.1" text-anchor="middle">40</text><text x="27.1" y="100.24" text-anchor="end">60</text><text x="197.81" y="243.1" text-anchor="middle">60</text><text x="27.1" y="56.22" text-anchor="end">80</text><text x="252.01" y="243.1" text-anchor="middle">80</text><text x="337.67" y="232.3">0</text><text x="337.67" y="188.06">20</text><text x="337.67" y="143.81">40</text><text x="337.67" y="99.57">60</text><text x="337.67" y="55.33">80</text></g></svg>
  <div class="sel" style="top:1044px;height:20px"><div class="abs" style="left:94px;top:5px;width:612px;height:20px;border:1px solid #cfcfcf;border-radius:2px;background:#f7f7f7"><div class="abs" style="left:33px;top:0;width:1px;height:20px;background:#ddd"></div></div></div>
  <div class="sb" style="top:719px;height:337px"></div>
  <div class="thumb" style="top:948px;height:57px"></div>
  <div class="abs" style="left:0;top:705px;width:767px;height:13.5px;background:#fff;box-shadow:0 1px 4px rgba(87,87,87,.25)"></div>
  <div class="arr up" style="left:751.7px;top:725.6px"></div>
  <div class="arr dn" style="left:751.2px;top:1043.6px"></div>
  <div class="edge" style="left:764px;top:715px;width:1px;height:343px"></div>
  <div class="edge" style="left:0;top:1055px;width:767px;height:1px;background:rgba(0,8,25,.5)"></div>
  <div class="edge" style="left:2px;top:715px;width:1px;height:343px;background:rgba(0,8,25,.33)"></div>
</div></div></div>
</body>
</html>
